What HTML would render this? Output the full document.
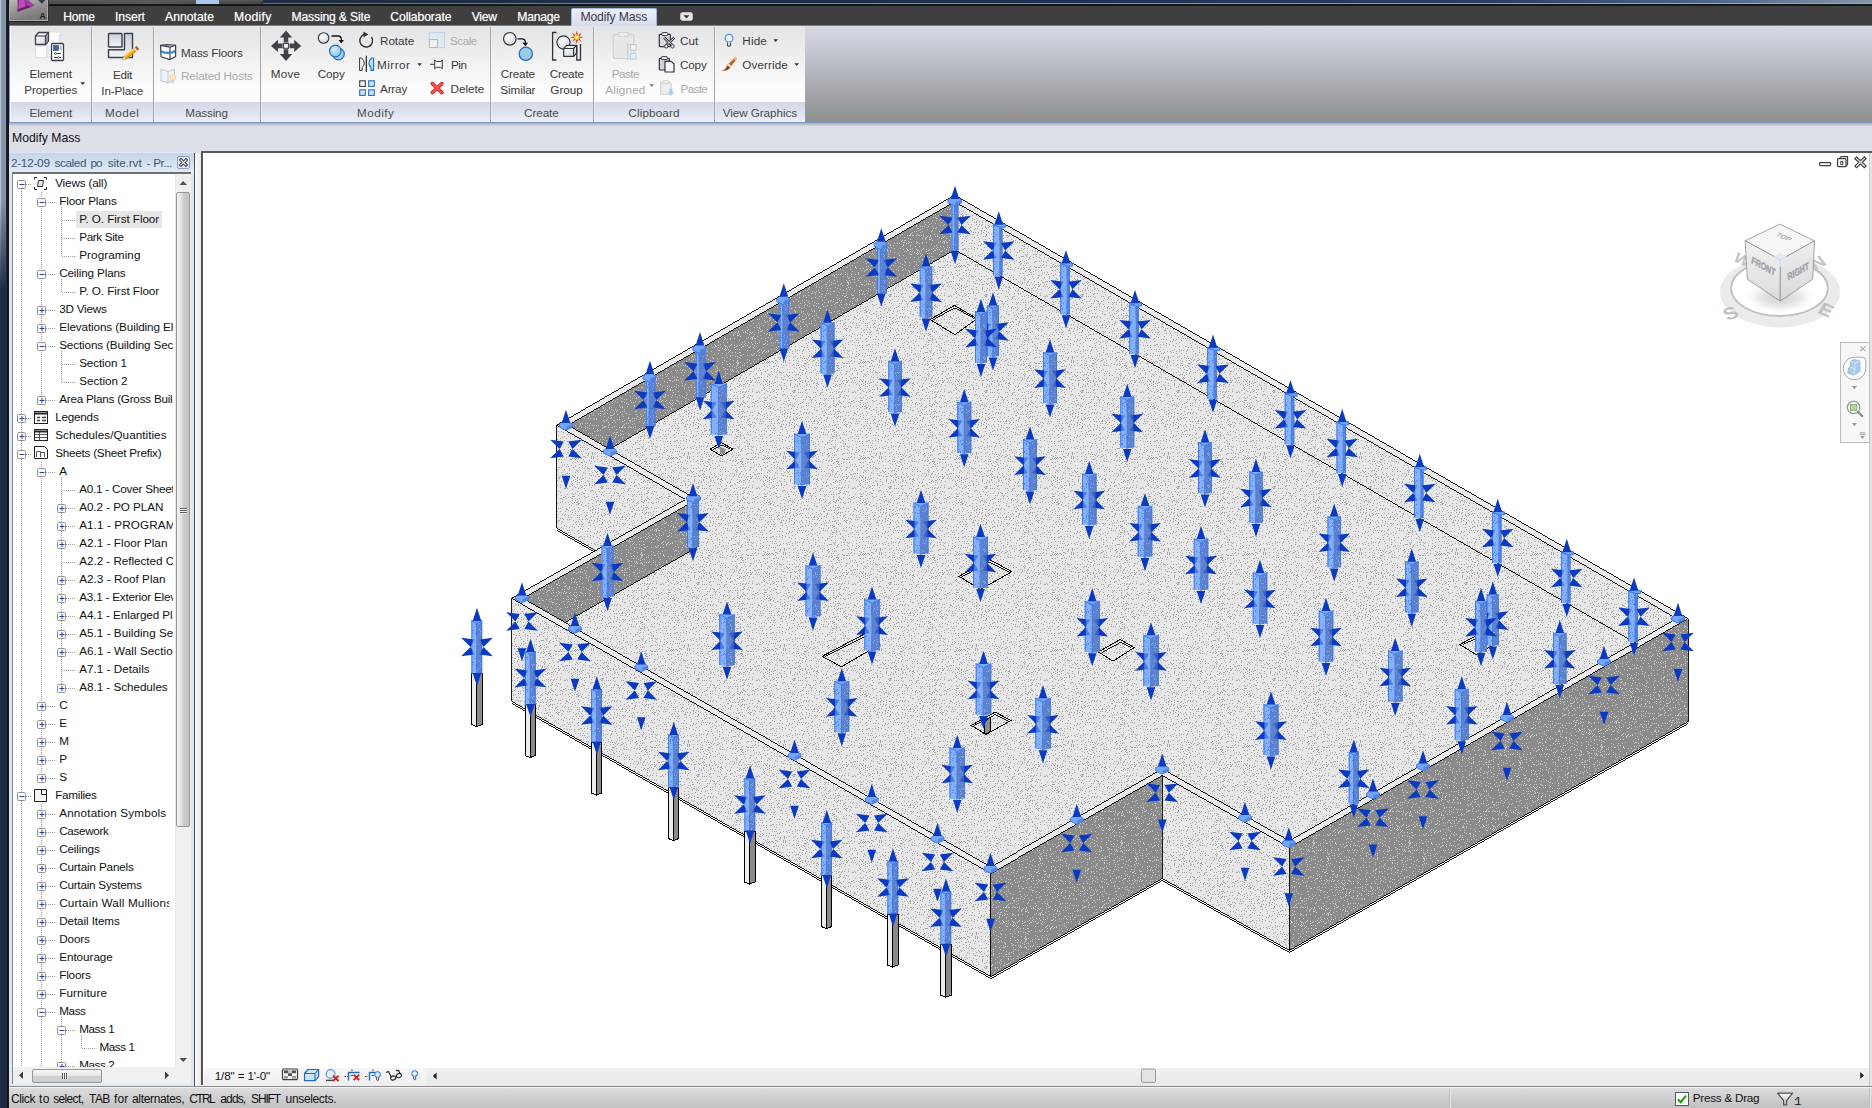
<!DOCTYPE html>
<html><head><meta charset="utf-8"><title>Revit</title>
<style>
*{box-sizing:border-box;margin:0;padding:0}
html,body{width:1872px;height:1108px;overflow:hidden;background:#fff}
body{position:relative;font-family:"Liberation Sans",sans-serif;font-size:12px;color:#1a1a1a}
.a{position:absolute}
.t{position:absolute;white-space:nowrap;line-height:14px;height:14px}
.c{text-align:center}
</style></head>
<body>
<div class="a" style="left:0;top:0;width:1872px;height:6px;background:linear-gradient(90deg,#4a4a4a 0,#585858 8%,#4a4a4a 13.9%,#1c2c44 14.1%,#1e3150 55%,#2a4163 80%,#50688a 92%,#8496ac 100%)"></div>
<div class="a" style="left:48px;top:0;width:215px;height:1px;background:#5a5a5a"></div><div class="a" style="left:263px;top:3px;width:1609px;height:1px;background:linear-gradient(90deg,#5c7088,#7b8ea6 50%,#9aa9ba)"></div>
<div class="a" style="left:0;top:4px;width:1872px;height:2px;background:#161616"></div>
<div class="a" style="left:196px;top:0;width:23px;height:4px;background:#a9c8ee"></div>
<div class="a" style="left:9px;top:6px;width:1863px;height:20px;background:#3f3f3f"></div>
<div class="a" style="left:9px;top:26px;width:1863px;height:97px;background:linear-gradient(#d6d9e3 0,#c9ccd6 20%,#a9abb1 60%,#8f8f8f 100%)"></div>
<div class="a" style="left:9px;top:25px;width:1863px;height:1px;background:#5f82d0"></div>
<div class="a" style="left:9px;top:122px;width:1863px;height:1px;background:#7d94c4"></div>
<div class="a" style="left:9px;top:123px;width:1863px;height:3px;background:linear-gradient(#a9adb8,#d5d8e0)"></div>
<div class="a" style="left:9px;top:126px;width:1863px;height:27px;background:#dcdfe8"></div>
<div class="t" style="left:12px;top:131px;font-size:12.2px;color:#111">Modify Mass</div>
<div class="a" style="left:0;top:0;width:9px;height:1108px;background:linear-gradient(90deg,#cfd6df 0,#8b9aae 1.5px,#7d90a6 4px,#8796aa 5.8px,#2b2d33 6.2px,#141518 7.4px,#141518 9px)"></div>
<div class="a" style="left:0;top:0;width:6px;height:1108px;background:linear-gradient(180deg,rgba(20,35,60,0) 0,rgba(20,35,60,0) 200px,rgba(22,38,64,.95) 290px,rgba(22,38,64,.95) 100%)"></div>
<div class="a" style="left:9px;top:0px;width:39px;height:21px;background:linear-gradient(165deg,#b9b9b9 0,#9a9a9a 35%,#7c7c7c 75%,#747474 100%);border:1px solid #a9a9a9;border-top:none;box-shadow:0 1px 0 #222,1px 0 0 #333"></div>
<svg class="a" style="left:14px;top:0px;" width="24" height="13" viewBox="0 0 24 13"><path d="M3.5 0 L14 0 L20.3 5.6 L16 7.4 L9.5 9.6 L3.6 11.8 Z" fill="#8c2a8a"/><path d="M5.5 0 L10.5 0 L11.2 6.5 L7.5 9 L4 10.8 Z" fill="#b94fb4"/><path d="M10.5 0 L14 0 L19.6 5.4 L15.5 7 L12 4 Z" fill="#a53fa2"/><path d="M3.7 9 L9 7.4 L15 5.6 L16 7.4 L9.5 9.6 L3.6 11.8 Z" fill="#5c1460" opacity=".75"/></svg>
<svg class="a" style="left:37px;top:0px;" width="10" height="5" viewBox="0 0 10 5"><path d="M1.2 0 L8.4 0 L4.8 3.8 Z" fill="#2e3a46"/></svg>
<div class="t " style="left:39.60px;top:9.22px;font-size:8.60px;color:#1c1c1c;font-weight:bold;">A</div>
<div class="t " style="left:63.20px;top:9.77px;font-size:12.20px;color:#fff;letter-spacing:-0.248px;text-shadow:0 0 1px rgba(255,255,255,.55);">Home</div>
<div class="t " style="left:115.00px;top:9.77px;font-size:12.20px;color:#fff;letter-spacing:-0.102px;text-shadow:0 0 1px rgba(255,255,255,.55);">Insert</div>
<div class="t " style="left:165.00px;top:9.77px;font-size:12.20px;color:#fff;letter-spacing:0.022px;text-shadow:0 0 1px rgba(255,255,255,.55);">Annotate</div>
<div class="t " style="left:234.00px;top:9.77px;font-size:12.20px;color:#fff;letter-spacing:0.273px;text-shadow:0 0 1px rgba(255,255,255,.55);">Modify</div>
<div class="t " style="left:291.50px;top:9.77px;font-size:12.20px;color:#fff;letter-spacing:-0.182px;text-shadow:0 0 1px rgba(255,255,255,.55);">Massing &amp; Site</div>
<div class="t " style="left:390.30px;top:9.77px;font-size:12.20px;color:#fff;letter-spacing:-0.110px;text-shadow:0 0 1px rgba(255,255,255,.55);">Collaborate</div>
<div class="t " style="left:471.70px;top:9.77px;font-size:12.20px;color:#fff;letter-spacing:-0.241px;text-shadow:0 0 1px rgba(255,255,255,.55);">View</div>
<div class="t " style="left:517.30px;top:9.77px;font-size:12.20px;color:#fff;letter-spacing:-0.238px;text-shadow:0 0 1px rgba(255,255,255,.55);">Manage</div>
<div class="a" style="left:571px;top:8px;width:86px;height:18px;background:linear-gradient(#eef1fa,#d6dcef);border:1px solid #9db4e8;border-bottom:none;border-radius:2px 2px 0 0"></div>
<div class="t " style="left:580.40px;top:9.77px;font-size:12.20px;color:#3c3c46;letter-spacing:-0.147px;">Modify Mass</div>
<svg class="a" style="left:679.6px;top:12px;" width="14" height="10" viewBox="0 0 14 10"><rect x="0.5" y="0.5" width="12" height="8" rx="2" fill="#e8e8e8" stroke="#bbb"/><path d="M3.5 3.2 L9.5 3.2 L6.5 6.4 Z" fill="#333"/></svg>
<div class="a" style="left:10px;top:26px;width:795px;height:76px;background:linear-gradient(#e3e4e6 0,#ececec 30%,#fafafa 75%,#fefefe 100%);"></div>
<div class="a" style="left:10px;top:102px;width:795px;height:20px;background:linear-gradient(#d2d6e6 0,#dfe3f0 50%,#eceff8 100%);"></div>
<div class="a" style="left:9px;top:26px;width:1px;height:97px;background:#7d9be0;"></div>
<div class="a" style="left:10px;top:26px;width:1px;height:96px;background:#f4f6fb;"></div>
<div class="a" style="left:91px;top:27px;width:1px;height:95px;background:#a3a3a3;"></div>
<div class="a" style="left:92px;top:27px;width:1px;height:95px;background:rgba(255,255,255,.35);"></div>
<div class="a" style="left:153px;top:27px;width:1px;height:95px;background:#a3a3a3;"></div>
<div class="a" style="left:154px;top:27px;width:1px;height:95px;background:rgba(255,255,255,.35);"></div>
<div class="a" style="left:260px;top:27px;width:1px;height:95px;background:#a3a3a3;"></div>
<div class="a" style="left:261px;top:27px;width:1px;height:95px;background:rgba(255,255,255,.35);"></div>
<div class="a" style="left:490px;top:27px;width:1px;height:95px;background:#a3a3a3;"></div>
<div class="a" style="left:491px;top:27px;width:1px;height:95px;background:rgba(255,255,255,.35);"></div>
<div class="a" style="left:593px;top:27px;width:1px;height:95px;background:#a3a3a3;"></div>
<div class="a" style="left:594px;top:27px;width:1px;height:95px;background:rgba(255,255,255,.35);"></div>
<div class="a" style="left:714px;top:27px;width:1px;height:95px;background:#a3a3a3;"></div>
<div class="a" style="left:715px;top:27px;width:1px;height:95px;background:rgba(255,255,255,.35);"></div>
<div class="t " style="left:29.50px;top:105.65px;font-size:11.70px;color:#4a4a4a;letter-spacing:-0.020px;">Element</div>
<div class="t " style="left:105.00px;top:105.65px;font-size:11.70px;color:#4a4a4a;letter-spacing:0.533px;">Model</div>
<div class="t " style="left:185.30px;top:105.65px;font-size:11.70px;color:#4a4a4a;letter-spacing:-0.145px;">Massing</div>
<div class="t " style="left:357.00px;top:105.65px;font-size:11.70px;color:#4a4a4a;letter-spacing:0.508px;">Modify</div>
<div class="t " style="left:524.00px;top:105.65px;font-size:11.70px;color:#4a4a4a;letter-spacing:-0.064px;">Create</div>
<div class="t " style="left:628.30px;top:105.65px;font-size:11.70px;color:#4a4a4a;letter-spacing:0.152px;">Clipboard</div>
<div class="t " style="left:722.70px;top:105.65px;font-size:11.70px;color:#4a4a4a;letter-spacing:-0.060px;">View Graphics</div>
<div class="t " style="left:29.40px;top:66.65px;font-size:11.70px;color:#3a3a3a;letter-spacing:-0.054px;">Element</div>
<div class="t " style="left:24.20px;top:82.55px;font-size:11.70px;color:#3a3a3a;letter-spacing:-0.025px;">Properties</div>
<svg class="a" style="left:80px;top:82px;" width="6" height="4" viewBox="0 0 6 4"><path d="M0.4 0.3 L5 0.3 L2.7 3 Z" fill="#333"/></svg>
<div class="t " style="left:113.00px;top:67.65px;font-size:11.70px;color:#3a3a3a;letter-spacing:-0.320px;">Edit</div>
<div class="t " style="left:101.30px;top:83.65px;font-size:11.70px;color:#3a3a3a;letter-spacing:-0.132px;">In-Place</div>
<div class="t " style="left:181.00px;top:45.95px;font-size:11.70px;color:#3a3a3a;letter-spacing:-0.171px;">Mass Floors</div>
<div class="t " style="left:181.00px;top:69.45px;font-size:11.70px;color:#ababab;letter-spacing:-0.124px;">Related Hosts</div>
<div class="t " style="left:270.70px;top:67.35px;font-size:11.70px;color:#3a3a3a;letter-spacing:0.263px;">Move</div>
<div class="t " style="left:317.70px;top:67.35px;font-size:11.70px;color:#3a3a3a;letter-spacing:-0.005px;">Copy</div>
<div class="t " style="left:380.00px;top:33.65px;font-size:11.70px;color:#3a3a3a;letter-spacing:-0.034px;">Rotate</div>
<div class="t " style="left:376.90px;top:57.65px;font-size:11.70px;color:#3a3a3a;letter-spacing:0.511px;">Mirror</div>
<svg class="a" style="left:417px;top:62.5px;" width="6" height="4" viewBox="0 0 6 4"><path d="M0.4 0.3 L5 0.3 L2.7 3 Z" fill="#333"/></svg>
<div class="t " style="left:380.00px;top:81.75px;font-size:11.70px;color:#3a3a3a;letter-spacing:-0.164px;">Array</div>
<div class="t " style="left:450.00px;top:33.65px;font-size:11.70px;color:#ababab;letter-spacing:-0.492px;">Scale</div>
<div class="t " style="left:451.00px;top:57.65px;font-size:11.70px;color:#3a3a3a;letter-spacing:-0.456px;">Pin</div>
<div class="t " style="left:450.60px;top:81.75px;font-size:11.70px;color:#3a3a3a;letter-spacing:-0.044px;">Delete</div>
<div class="t " style="left:500.80px;top:67.35px;font-size:11.70px;color:#3a3a3a;letter-spacing:-0.184px;">Create</div>
<div class="t " style="left:500.30px;top:83.35px;font-size:11.70px;color:#3a3a3a;letter-spacing:-0.092px;">Similar</div>
<div class="t " style="left:549.80px;top:67.35px;font-size:11.70px;color:#3a3a3a;letter-spacing:-0.184px;">Create</div>
<div class="t " style="left:550.30px;top:83.35px;font-size:11.70px;color:#3a3a3a;letter-spacing:0.020px;">Group</div>
<div class="t " style="left:611.70px;top:67.35px;font-size:11.70px;color:#ababab;letter-spacing:-0.530px;">Paste</div>
<div class="t " style="left:605.30px;top:83.35px;font-size:11.70px;color:#ababab;letter-spacing:0.178px;">Aligned</div>
<svg class="a" style="left:649px;top:84px;" width="6" height="4" viewBox="0 0 6 4"><path d="M0.4 0.3 L5 0.3 L2.7 3 Z" fill="#777"/></svg>
<div class="t " style="left:680.00px;top:33.65px;font-size:11.70px;color:#3a3a3a;letter-spacing:0.046px;">Cut</div>
<div class="t " style="left:680.00px;top:57.65px;font-size:11.70px;color:#3a3a3a;letter-spacing:-0.171px;">Copy</div>
<div class="t " style="left:680.60px;top:81.75px;font-size:11.70px;color:#ababab;letter-spacing:-0.655px;">Paste</div>
<div class="t " style="left:742.30px;top:33.55px;font-size:11.70px;color:#3a3a3a;letter-spacing:0.179px;">Hide</div>
<svg class="a" style="left:773px;top:39px;" width="6" height="4" viewBox="0 0 6 4"><path d="M0.4 0.3 L5 0.3 L2.7 3 Z" fill="#333"/></svg>
<div class="t " style="left:742.30px;top:57.75px;font-size:11.70px;color:#3a3a3a;letter-spacing:0.091px;">Override</div>
<svg class="a" style="left:794px;top:63px;" width="6" height="4" viewBox="0 0 6 4"><path d="M0.4 0.3 L5 0.3 L2.7 3 Z" fill="#333"/></svg>
<svg class="a" style="left:0;top:0" width="820" height="126" viewBox="0 0 820 126"><defs><linearGradient id="gcube" x1="0" y1="0" x2="1" y2="1"><stop offset="0" stop-color="#fff"/><stop offset="1" stop-color="#cfd4dc"/></linearGradient><linearGradient id="gpan" x1="0" y1="0" x2="0" y2="1"><stop offset="0" stop-color="#c9ced8"/><stop offset="1" stop-color="#f4f5f7"/></linearGradient><radialGradient id="gball" cx=".4" cy=".35" r=".7"><stop offset="0" stop-color="#fff"/><stop offset="1" stop-color="#d0d4da"/></radialGradient><radialGradient id="gblue" cx=".4" cy=".35" r=".7"><stop offset="0" stop-color="#d6ecf8"/><stop offset="1" stop-color="#8cc0e4"/></radialGradient></defs><path d="M47.5 33.5 L50 32 L61 32 L61 55 L58.5 57 L47.5 57 Z" fill="#fdfdfd" stroke="#dadde2" stroke-width="1"/><path d="M58.5 34.5 L61 32 L61 55 L58.5 57 Z" fill="#e3e5ea"/><path d="M35.5 46 L46.5 46 L46.5 57.5 L35.5 57.5 Z" fill="#fbfbfc" stroke="#dcdfe4" stroke-width="1"/><path d="M46.5 46 L49.5 44 L49.5 55.5 L46.5 57.5 Z" fill="#e6e8ec"/><path d="M35.5 36 L38.5 32.5 L48.5 32.5 L48.5 41 L45.5 44.5 L35.5 44.5 Z" fill="url(#gcube)" stroke="#3b4048" stroke-width="1.3" stroke-linejoin="round"/><path d="M35.5 36 L45.5 36 L45.5 44.5 M45.5 36 L48.5 32.5" fill="none" stroke="#3b4048" stroke-width="1.2"/><path d="M46 36.3 L48 33.8 L48 41 L46 43.5 Z" fill="#8d95a3"/><rect x="51.5" y="43.5" width="12" height="17" rx="1" fill="#fff" stroke="#3b4048" stroke-width="1.3"/><rect x="53.5" y="45.5" width="5" height="5" fill="#3f66a0" stroke="#2c4a7c" stroke-width=".6"/><rect x="60" y="45.5" width="1.6" height="5" fill="#b5b9c2"/><path d="M54 53.5 H61 M54 57.5 H61" stroke="#3b4048" stroke-width="1"/><circle cx="55.5" cy="53.5" r="1" fill="#fff" stroke="#3b4048" stroke-width=".6"/><circle cx="58.5" cy="57.5" r="1" fill="#fff" stroke="#3b4048" stroke-width=".6"/><rect x="108.5" y="33.5" width="13.5" height="13.5" fill="url(#gpan)" stroke="#3b4048" stroke-width="1.4" rx=".8"/><path d="M124.5 33.5 H132.5 V57.5 H108.5 V49.8 H124.5 Z" fill="url(#gpan)" stroke="#3b4048" stroke-width="1.4" stroke-linejoin="round"/><g transform="translate(122.5,59.5) rotate(-38)"><path d="M0 0 L3.2 -2.1 L3.2 2.1 Z" fill="#f4f4f4" stroke="#777" stroke-width=".5"/><rect x="3.2" y="-2.1" width="12.5" height="4.2" fill="#f6b411"/><rect x="3.2" y="-2.1" width="12.5" height="1.4" fill="#fbd75a"/><rect x="3.2" y="0.9" width="12.5" height="1.2" fill="#d68d08"/><rect x="15.7" y="-2.1" width="1.4" height="4.2" fill="#d9d9d9"/><rect x="17.1" y="-2.1" width="2.6" height="4.2" rx="1" fill="#b5622a"/></g><path d="M160.6 45.3 L170 47.2 L175.6 45.2 L175.6 56.5 L170 59.6 L161 56.8 Z" fill="#fdfdfd" stroke="#3b4048" stroke-width="1.2" stroke-linejoin="round"/><path d="M160.6 45.3 L166.5 44.6 L175.6 45.2 M170 47.2 L170 59.6" fill="none" stroke="#3b4048" stroke-width="1.1"/><path d="M161.3 50.5 C165 52.6 171 52.6 175.2 50.2 L175.2 52 C171 54.2 165 54.2 161.3 52.2 Z" fill="#4e8fd4" stroke="#2a6ab8" stroke-width=".6"/><path d="M161 69.5 L168 71.5 L174.5 69.2 L174.5 80 L168 83 L161 80.5 Z" fill="#eef2f5" stroke="#c4ccd3" stroke-width="1.1" stroke-linejoin="round"/><path d="M168 71.5 V83" stroke="#c4ccd3" stroke-width="1"/><circle cx="172.8" cy="77.2" r="3" fill="#fde9bd" stroke="#f3cf8c" stroke-width=".7"/><rect x="171.6" y="80" width="2.4" height="3.2" fill="#d5d8dc"/><g fill="#3f434a"><path d="M286 30.6 L292.2 37.6 L288.3 37.6 L288.3 42.5 L283.7 42.5 L283.7 37.6 L279.8 37.6 Z"/><path d="M286 61 L292.2 54 L288.3 54 L288.3 49.3 L283.7 49.3 L283.7 54 L279.8 54 Z"/><path d="M271 45.9 L278 39.7 L278 43.6 L282.6 43.6 L282.6 48.2 L278 48.2 L278 52.1 Z"/><path d="M301.2 45.9 L294.2 39.7 L294.2 43.6 L289.5 43.6 L289.5 48.2 L294.2 48.2 L294.2 52.1 Z"/></g><rect x="283.6" y="43.5" width="4.8" height="4.8" fill="#fff" stroke="#3f434a" stroke-width="1.1"/><circle cx="323.6" cy="38" r="5.3" fill="url(#gball)" stroke="#30343a" stroke-width="1.1"/><path d="M331.5 36 H338 Q341.3 36 341.3 39.5 V41" fill="none" stroke="#111" stroke-width="1.3"/><path d="M338.6 40 L344 40 L341.3 43.4 Z" fill="#111"/><circle cx="338.5" cy="54" r="5.8" fill="url(#gblue)" stroke="#1f6fc5" stroke-width="1.2"/><circle cx="335.3" cy="51" r="5.8" fill="url(#gblue)" stroke="#1f6fc5" stroke-width="1.2"/><path d="M366.5 34.2 A6.4 6.4 0 1 0 371.5 37" fill="none" stroke="#30343a" stroke-width="1.4"/><path d="M363.3 31.6 L368.4 34.4 L363.6 37.2 Z" fill="#30343a"/><path d="M366.3 55.8 V72" stroke="#111" stroke-width="1.1"/><path d="M359.6 58 L361.5 58 Q364.3 60 364.3 63.3 Q364.3 66 362.2 67.2 L362.2 70.4 L359.6 70.4 Z" fill="#f4f4f4" stroke="#30343a" stroke-width="1"/><path d="M373.6 58 L371.7 58 Q368.9 60 368.9 63.3 Q368.9 66 371 67.2 L371 70.4 L373.6 70.4 Z" fill="#bcdcf3" stroke="#1f6fc5" stroke-width="1.1"/><rect x="359.7" y="80.8" width="5.6" height="5.6" fill="#f6f6f6" stroke="#3b4048" stroke-width="1.1"/><rect x="368.7" y="80.8" width="5.6" height="5.6" fill="#cfe6f5" stroke="#1f6fc5" stroke-width="1.1"/><rect x="359.7" y="89.8" width="5.6" height="5.6" fill="#cfe6f5" stroke="#1f6fc5" stroke-width="1.1"/><rect x="368.7" y="89.8" width="5.6" height="5.6" fill="#cfe6f5" stroke="#1f6fc5" stroke-width="1.1"/><rect x="429.3" y="32.6" width="15" height="15" fill="#deebf3" stroke="#bcd3e6" stroke-width="1"/><rect x="429.5" y="39.5" width="8" height="8" fill="#f1f1f1" stroke="#b8b8b8" stroke-width="1"/><path d="M430 64.3 H434.5" stroke="#30343a" stroke-width="1"/><path d="M434.7 60 L436.3 61.5 L440.7 61.5 L442.3 60 L442.3 68.8 L440.7 67.3 L436.3 67.3 L434.7 68.8 Z" fill="#fafafa" stroke="#30343a" stroke-width="1" stroke-linejoin="round"/><path d="M432.3 83.6 L441.9 92.6 M441.9 83.6 L432.3 92.6" stroke="#c9211e" stroke-width="3.6" stroke-linecap="round"/><path d="M432.3 83.6 L441.9 92.6 M441.9 83.6 L432.3 92.6" stroke="#f0524e" stroke-width="2.2" stroke-linecap="round"/><circle cx="509.8" cy="38.8" r="6.3" fill="url(#gball)" stroke="#30343a" stroke-width="1.2"/><path d="M517.5 38.8 H522 Q525.3 38.8 525.3 42 V43.5" fill="none" stroke="#111" stroke-width="1.3"/><path d="M522.5 42.8 L528.1 42.8 L525.3 46.2 Z" fill="#111"/><circle cx="525.8" cy="53.8" r="6.6" fill="#9ccbe9" stroke="#1f6fc5" stroke-width="1.3"/><path d="M556.5 32.5 H552.6 V60 H556.5 M576.8 45 V60 H580.5 V44" fill="none" stroke="#30343a" stroke-width="1.3"/><circle cx="563.5" cy="42.5" r="6.6" fill="url(#gball)" stroke="#30343a" stroke-width="1.1"/><path d="M563.7 48.5 L566.7 45.3 L576.6 45.3 L576.6 53 L573.6 56.3 L563.7 56.3 Z" fill="url(#gcube)" stroke="#30343a" stroke-width="1.2" stroke-linejoin="round"/><path d="M563.7 48.5 H573.6 V56.3 M573.6 48.5 L576.6 45.3" fill="none" stroke="#30343a" stroke-width="1.1"/><g transform="translate(576.8,37.3)"><path d="M0 -6.4 L1.3 -2.2 L5 -4.6 L2.6 -.9 L6.6 0 L2.6 .9 L4.6 4.6 L1.3 2.3 L0 6.6 L-1.3 2.3 L-4.6 4.6 L-2.6 .9 L-6.4 0 L-2.6 -.9 L-4.6 -4.6 L-1.3 -2.2 Z" fill="#ec3a1c"/><circle r="2.7" fill="#ffd21e"/><circle r="1.2" fill="#fff7c8"/></g><rect x="613.3" y="34.5" width="20.5" height="24" rx="1.5" fill="#e6e7e9" stroke="#cfd0d3" stroke-width="1.1"/><rect x="618.5" y="32.4" width="10" height="4" rx="1.6" fill="#eeeeef" stroke="#cfd0d3" stroke-width="1"/><path d="M627.6 43 V60.5" stroke="#d0d2d6" stroke-width="1.2"/><rect x="630.4" y="44.5" width="5.6" height="5.6" fill="#f3f3f3" stroke="#c8c8c8" stroke-width="1"/><rect x="630.4" y="53.5" width="5.6" height="5.6" fill="#e4eff8" stroke="#b6d2ea" stroke-width="1"/><rect x="659.3" y="34.3" width="11" height="12.3" rx=".8" fill="#d9dce2" stroke="#30343a" stroke-width="1.2"/><rect x="661.8" y="32.6" width="6" height="3" rx="1" fill="#f1f1f1" stroke="#30343a" stroke-width="1"/><path d="M664 37.5 L672.4 45.5 M674.4 37.5 L666 45.5" stroke="#30343a" stroke-width="2.6"/><path d="M664 37.5 L672.4 45.5 M674.4 37.5 L666 45.5" stroke="#f2f2f2" stroke-width="1"/><circle cx="666.2" cy="46.3" r="1.7" fill="#fff" stroke="#30343a" stroke-width="1"/><circle cx="672.5" cy="46.3" r="1.7" fill="#fff" stroke="#30343a" stroke-width="1"/><rect x="659.3" y="58.4" width="10" height="11.6" rx=".8" fill="#cfd3da" stroke="#30343a" stroke-width="1.2"/><rect x="661.3" y="56.6" width="6" height="3" rx="1" fill="#f1f1f1" stroke="#30343a" stroke-width="1"/><path d="M665 61.4 H671.2 L674 64.2 V72 H665 Z" fill="#f4f5f7" stroke="#30343a" stroke-width="1.2" stroke-linejoin="round"/><rect x="660.6" y="82.5" width="10.4" height="11.8" rx=".8" fill="#ededee" stroke="#cfd0d3" stroke-width="1.1"/><rect x="663" y="80.6" width="5.6" height="3" rx="1" fill="#f3f3f3" stroke="#cfd0d3" stroke-width="1"/><path d="M669.6 88.5 H672.4 V92 H674.4 L671 95.8 L667.6 92 H669.6 Z" fill="#a9cdee"/><circle cx="729" cy="38.3" r="3.9" fill="#e9f3fd" stroke="#4d8fe0" stroke-width="1.2"/><path d="M727.6 42.4 V45.6 Q729 46.8 730.4 45.6 V42.4" fill="#fff" stroke="#30343a" stroke-width="1.1"/><path d="M721.3 70.6 Q726.2 69.8 727 65.2 L730.4 67.6 Q728 71.3 721.3 70.6 Z" fill="#8a4513"/><path d="M727.2 65 L735.3 57.2 L737 58.6 L730.4 67.5 Z" fill="#c06a22"/><path d="M733.6 58.8 L735.3 57.2 L737 58.6 L735.6 60.4 Z" fill="#f0b26a"/><path d="M727.3 64.9 L728.6 63.7 L731.5 66 L730.4 67.5 Z" fill="#e6e6e6"/></svg>
<div class="a" style="left:9px;top:152px;width:185px;height:934px;background:#dde8f4;"></div>
<div class="a" style="left:9px;top:153px;width:185px;height:20px;background:linear-gradient(#c3d5e8 0,#d3e1ef 50%,#e4edf6 100%);"></div>
<div class="t " style="left:10.90px;top:155.91px;font-size:11.80px;color:#3f5378;letter-spacing:-0.262px;">2-12-09</div>
<div class="t " style="left:54.50px;top:155.91px;font-size:11.80px;color:#3f5378;letter-spacing:-0.422px;">scaled</div>
<div class="t " style="left:90.40px;top:155.91px;font-size:11.80px;color:#3f5378;letter-spacing:-0.926px;">po</div>
<div class="t " style="left:107.70px;top:155.91px;font-size:11.80px;color:#3f5378;letter-spacing:-0.107px;">site.rvt</div>
<div class="t " style="left:146.60px;top:155.91px;font-size:11.80px;color:#3f5378;letter-spacing:0.000px;">-</div>
<div class="t " style="left:153.20px;top:155.91px;font-size:11.80px;color:#3f5378;letter-spacing:-0.446px;">Pr...</div>
<div class="a" style="left:177px;top:156px;width:13px;height:13px;border:1px solid #8fa0c0;border-radius:2px;background:#e4ecf6"></div>
<svg class="a" style="left:177px;top:156px;" width="13" height="13" viewBox="0 0 13 13"><path d="M4 4 L9 9 M9 4 L4 9" stroke="#3a3f4c" stroke-width="3.2" stroke-linecap="square"/><path d="M4 4 L9 9 M9 4 L4 9" stroke="#fff" stroke-width="1.2" stroke-linecap="square"/></svg>
<div class="a" style="left:12px;top:172px;width:179px;height:912px;background:#fff;border-left:1px solid #828790;border-top:2px solid #707070"></div>
<div class="a" style="left:13px;top:174px;width:160.2px;height:893px;overflow:hidden"><div class="t " style="left:42.20px;top:2.25px;font-size:11.70px;color:#111;letter-spacing:-0.155px;">Views (all)</div><div class="t " style="left:46.20px;top:20.25px;font-size:11.70px;color:#111;letter-spacing:-0.148px;">Floor Plans</div><div class="a" style="left:63.3px;top:36.5px;width:85.7px;height:17.5px;background:#e6e6e6;"></div><div class="t " style="left:66.20px;top:38.25px;font-size:11.70px;color:#111;letter-spacing:-0.059px;">P. O. First Floor</div><div class="t " style="left:66.20px;top:56.25px;font-size:11.70px;color:#111;letter-spacing:-0.334px;">Park Site</div><div class="t " style="left:66.20px;top:74.25px;font-size:11.70px;color:#111;letter-spacing:0.091px;">Programing</div><div class="t " style="left:46.20px;top:92.25px;font-size:11.70px;color:#111;letter-spacing:-0.141px;">Ceiling Plans</div><div class="t " style="left:66.20px;top:110.25px;font-size:11.70px;color:#111;letter-spacing:-0.059px;">P. O. First Floor</div><div class="t " style="left:46.20px;top:128.25px;font-size:11.70px;color:#111;letter-spacing:-0.230px;">3D Views</div><div class="t " style="left:46.20px;top:146.25px;font-size:11.70px;color:#111;letter-spacing:-0.100px;">Elevations (Building Elevation)</div><div class="t " style="left:46.20px;top:164.25px;font-size:11.70px;color:#111;letter-spacing:-0.132px;">Sections (Building Section)</div><div class="t " style="left:66.20px;top:182.25px;font-size:11.70px;color:#111;letter-spacing:-0.123px;">Section 1</div><div class="t " style="left:66.20px;top:200.25px;font-size:11.70px;color:#111;letter-spacing:-0.048px;">Section 2</div><div class="t " style="left:46.20px;top:218.25px;font-size:11.70px;color:#111;letter-spacing:-0.223px;">Area Plans (Gross Building)</div><div class="t " style="left:42.20px;top:236.25px;font-size:11.70px;color:#111;letter-spacing:-0.216px;">Legends</div><div class="t " style="left:42.20px;top:254.25px;font-size:11.70px;color:#111;letter-spacing:0.044px;">Schedules/Quantities</div><div class="t " style="left:42.20px;top:272.25px;font-size:11.70px;color:#111;letter-spacing:-0.235px;">Sheets (Sheet Prefix)</div><div class="t " style="left:46.20px;top:290.25px;font-size:11.70px;color:#111;letter-spacing:0.000px;">A</div><div class="a" style="left:0;top:306px;width:159.5px;height:18px;overflow:hidden"><div class="t " style="left:66.20px;top:2.25px;font-size:11.70px;color:#111;letter-spacing:-0.222px;">A0.1 - Cover Sheet</div></div><div class="t " style="left:66.20px;top:326.25px;font-size:11.70px;color:#111;letter-spacing:-0.068px;">A0.2 - PO PLAN</div><div class="t " style="left:66.20px;top:344.25px;font-size:11.70px;color:#111;letter-spacing:0.105px;">A1.1 - PROGRAMING</div><div class="t " style="left:66.20px;top:362.25px;font-size:11.70px;color:#111;letter-spacing:0.032px;">A2.1 - Floor Plan</div><div class="t " style="left:66.20px;top:380.25px;font-size:11.70px;color:#111;letter-spacing:-0.033px;">A2.2 - Reflected Ceiling</div><div class="t " style="left:66.20px;top:398.25px;font-size:11.70px;color:#111;letter-spacing:0.043px;">A2.3 - Roof Plan</div><div class="t " style="left:66.20px;top:416.25px;font-size:11.70px;color:#111;letter-spacing:-0.197px;">A3.1 - Exterior Elevations</div><div class="t " style="left:66.20px;top:434.25px;font-size:11.70px;color:#111;letter-spacing:-0.081px;">A4.1 - Enlarged Plans</div><div class="t " style="left:66.20px;top:452.25px;font-size:11.70px;color:#111;letter-spacing:0.031px;">A5.1 - Building Sections</div><div class="t " style="left:66.20px;top:470.25px;font-size:11.70px;color:#111;letter-spacing:0.063px;">A6.1 - Wall Sections</div><div class="t " style="left:66.20px;top:488.25px;font-size:11.70px;color:#111;letter-spacing:0.021px;">A7.1 - Details</div><div class="t " style="left:66.20px;top:506.25px;font-size:11.70px;color:#111;letter-spacing:-0.034px;">A8.1 - Schedules</div><div class="t " style="left:46.20px;top:524.25px;font-size:11.70px;color:#111;letter-spacing:0.000px;">C</div><div class="t " style="left:46.20px;top:542.25px;font-size:11.70px;color:#111;letter-spacing:0.000px;">E</div><div class="t " style="left:46.20px;top:560.25px;font-size:11.70px;color:#111;letter-spacing:0.000px;">M</div><div class="t " style="left:46.20px;top:578.25px;font-size:11.70px;color:#111;letter-spacing:0.000px;">P</div><div class="t " style="left:46.20px;top:596.25px;font-size:11.70px;color:#111;letter-spacing:0.000px;">S</div><div class="t " style="left:42.20px;top:614.25px;font-size:11.70px;color:#111;letter-spacing:-0.251px;">Families</div><div class="t " style="left:46.20px;top:632.25px;font-size:11.70px;color:#111;letter-spacing:0.179px;">Annotation Symbols</div><div class="t " style="left:46.20px;top:650.25px;font-size:11.70px;color:#111;letter-spacing:-0.331px;">Casework</div><div class="t " style="left:46.20px;top:668.25px;font-size:11.70px;color:#111;letter-spacing:-0.146px;">Ceilings</div><div class="t " style="left:46.20px;top:686.25px;font-size:11.70px;color:#111;letter-spacing:-0.150px;">Curtain Panels</div><div class="t " style="left:46.20px;top:704.25px;font-size:11.70px;color:#111;letter-spacing:-0.223px;">Curtain Systems</div><div class="a" style="left:0;top:720px;width:155.6px;height:18px;overflow:hidden"><div class="t " style="left:46.20px;top:2.25px;font-size:11.70px;color:#111;letter-spacing:0.174px;">Curtain Wall Mullions</div></div><div class="t " style="left:46.20px;top:740.25px;font-size:11.70px;color:#111;letter-spacing:-0.097px;">Detail Items</div><div class="t " style="left:46.20px;top:758.25px;font-size:11.70px;color:#111;letter-spacing:-0.103px;">Doors</div><div class="t " style="left:46.20px;top:776.25px;font-size:11.70px;color:#111;letter-spacing:-0.037px;">Entourage</div><div class="t " style="left:46.20px;top:794.25px;font-size:11.70px;color:#111;letter-spacing:-0.162px;">Floors</div><div class="t " style="left:46.20px;top:812.25px;font-size:11.70px;color:#111;letter-spacing:0.135px;">Furniture</div><div class="t " style="left:46.20px;top:830.25px;font-size:11.70px;color:#111;letter-spacing:-0.385px;">Mass</div><div class="t " style="left:66.20px;top:848.25px;font-size:11.70px;color:#111;letter-spacing:-0.402px;">Mass 1</div><div class="t " style="left:86.40px;top:866.25px;font-size:11.70px;color:#111;letter-spacing:-0.402px;">Mass 1</div><div class="t " style="left:66.20px;top:884.25px;font-size:11.70px;color:#111;letter-spacing:-0.402px;">Mass 2</div></div>
<svg class="a" style="left:0;top:174px" width="176" height="893" viewBox="0 174 176 893"><path d="M41.5 192 V400" stroke="#9a9a9a" stroke-width="1" stroke-dasharray="1 1"/><path d="M61.5 207 V256" stroke="#9a9a9a" stroke-width="1" stroke-dasharray="1 1"/><path d="M61.5 279 V292" stroke="#9a9a9a" stroke-width="1" stroke-dasharray="1 1"/><path d="M61.5 351 V382" stroke="#9a9a9a" stroke-width="1" stroke-dasharray="1 1"/><path d="M41.5 462 V778" stroke="#9a9a9a" stroke-width="1" stroke-dasharray="1 1"/><path d="M61.5 477 V688" stroke="#9a9a9a" stroke-width="1" stroke-dasharray="1 1"/><path d="M41.5 804 V1012" stroke="#9a9a9a" stroke-width="1" stroke-dasharray="1 1"/><path d="M61.5 1017 V1068" stroke="#9a9a9a" stroke-width="1" stroke-dasharray="1 1"/><path d="M81.5 1035 V1048" stroke="#9a9a9a" stroke-width="1" stroke-dasharray="1 1"/><path d="M21.5 189 V1068" stroke="#9a9a9a" stroke-width="1" stroke-dasharray="1 1"/><path d="M41.5 1017 V1068" stroke="#9a9a9a" stroke-width="1" stroke-dasharray="1 1"/><path d="M26 184.5 H31" stroke="#9a9a9a" stroke-width="1" stroke-dasharray="1 1"/><rect x="17.5" y="180.5" width="8" height="8" rx="1" fill="#fcfcfc" stroke="#919191"/><path d="M19.5 184.5 H24.5" stroke="#2c3fa0" stroke-width="1"/><path d="M34.5 179.5 V177.5 H37 M44 177.5 H46.5 V179.5 M46.5 187 V189.5 H44 M37 189.5 H34.5 V187" fill="none" stroke="#222" stroke-width="1"/><path d="M38.5 180.5 H43.5 L42.5 186.5 H37.5 Z" fill="#e4e6ea" stroke="#333" stroke-width="1"/><path d="M46 202.5 H56.2" stroke="#9a9a9a" stroke-width="1" stroke-dasharray="1 1"/><rect x="37.5" y="198.5" width="8" height="8" rx="1" fill="#fcfcfc" stroke="#919191"/><path d="M39.5 202.5 H44.5" stroke="#2c3fa0" stroke-width="1"/><path d="M62 220.5 H76.2" stroke="#9a9a9a" stroke-width="1" stroke-dasharray="1 1"/><path d="M62 238.5 H76.2" stroke="#9a9a9a" stroke-width="1" stroke-dasharray="1 1"/><path d="M62 256.5 H76.2" stroke="#9a9a9a" stroke-width="1" stroke-dasharray="1 1"/><path d="M46 274.5 H56.2" stroke="#9a9a9a" stroke-width="1" stroke-dasharray="1 1"/><rect x="37.5" y="270.5" width="8" height="8" rx="1" fill="#fcfcfc" stroke="#919191"/><path d="M39.5 274.5 H44.5" stroke="#2c3fa0" stroke-width="1"/><path d="M62 292.5 H76.2" stroke="#9a9a9a" stroke-width="1" stroke-dasharray="1 1"/><path d="M46 310.5 H56.2" stroke="#9a9a9a" stroke-width="1" stroke-dasharray="1 1"/><rect x="37.5" y="306.5" width="8" height="8" rx="1" fill="#fcfcfc" stroke="#919191"/><path d="M39.5 310.5 H44.5" stroke="#2c3fa0" stroke-width="1"/><path d="M42 308 V313" stroke="#2c3fa0" stroke-width="1"/><path d="M46 328.5 H56.2" stroke="#9a9a9a" stroke-width="1" stroke-dasharray="1 1"/><rect x="37.5" y="324.5" width="8" height="8" rx="1" fill="#fcfcfc" stroke="#919191"/><path d="M39.5 328.5 H44.5" stroke="#2c3fa0" stroke-width="1"/><path d="M42 326 V331" stroke="#2c3fa0" stroke-width="1"/><path d="M46 346.5 H56.2" stroke="#9a9a9a" stroke-width="1" stroke-dasharray="1 1"/><rect x="37.5" y="342.5" width="8" height="8" rx="1" fill="#fcfcfc" stroke="#919191"/><path d="M39.5 346.5 H44.5" stroke="#2c3fa0" stroke-width="1"/><path d="M62 364.5 H76.2" stroke="#9a9a9a" stroke-width="1" stroke-dasharray="1 1"/><path d="M62 382.5 H76.2" stroke="#9a9a9a" stroke-width="1" stroke-dasharray="1 1"/><path d="M46 400.5 H56.2" stroke="#9a9a9a" stroke-width="1" stroke-dasharray="1 1"/><rect x="37.5" y="396.5" width="8" height="8" rx="1" fill="#fcfcfc" stroke="#919191"/><path d="M39.5 400.5 H44.5" stroke="#2c3fa0" stroke-width="1"/><path d="M42 398 V403" stroke="#2c3fa0" stroke-width="1"/><path d="M26 418.5 H31" stroke="#9a9a9a" stroke-width="1" stroke-dasharray="1 1"/><rect x="17.5" y="414.5" width="8" height="8" rx="1" fill="#fcfcfc" stroke="#919191"/><path d="M19.5 418.5 H24.5" stroke="#2c3fa0" stroke-width="1"/><path d="M22 416 V421" stroke="#2c3fa0" stroke-width="1"/><rect x="34.5" y="411.5" width="13" height="12" fill="#fff" stroke="#222"/><path d="M35 413.5 H47" stroke="#222" stroke-width="2"/><path d="M37 417.5 H40 M42 417.5 H46 M37 420.5 H40 M42 420.5 H46" stroke="#444" stroke-width="1.4"/><path d="M26 436.5 H31" stroke="#9a9a9a" stroke-width="1" stroke-dasharray="1 1"/><rect x="17.5" y="432.5" width="8" height="8" rx="1" fill="#fcfcfc" stroke="#919191"/><path d="M19.5 436.5 H24.5" stroke="#2c3fa0" stroke-width="1"/><path d="M22 434 V439" stroke="#2c3fa0" stroke-width="1"/><rect x="34.5" y="429.5" width="13" height="11" fill="#fff" stroke="#222"/><path d="M35 431.5 H47" stroke="#222" stroke-width="2"/><path d="M35 434.5 H47 M35 437.5 H47 M39.5 432 V440" stroke="#555" stroke-width="1"/><path d="M26 454.5 H31" stroke="#9a9a9a" stroke-width="1" stroke-dasharray="1 1"/><rect x="17.5" y="450.5" width="8" height="8" rx="1" fill="#fcfcfc" stroke="#919191"/><path d="M19.5 454.5 H24.5" stroke="#2c3fa0" stroke-width="1"/><path d="M34.5 446.5 H44.5 L47.5 449.5 V458.5 H34.5 Z" fill="#fff" stroke="#222"/><path d="M36.5 457 V451.5 H40.5 V457 M40.5 452.5 H44.5 V457" fill="none" stroke="#555" stroke-width="1"/><path d="M46 472.5 H56.2" stroke="#9a9a9a" stroke-width="1" stroke-dasharray="1 1"/><rect x="37.5" y="468.5" width="8" height="8" rx="1" fill="#fcfcfc" stroke="#919191"/><path d="M39.5 472.5 H44.5" stroke="#2c3fa0" stroke-width="1"/><path d="M62 490.5 H76.2" stroke="#9a9a9a" stroke-width="1" stroke-dasharray="1 1"/><path d="M66 508.5 H76.2" stroke="#9a9a9a" stroke-width="1" stroke-dasharray="1 1"/><rect x="57.5" y="504.5" width="8" height="8" rx="1" fill="#fcfcfc" stroke="#919191"/><path d="M59.5 508.5 H64.5" stroke="#2c3fa0" stroke-width="1"/><path d="M62 506 V511" stroke="#2c3fa0" stroke-width="1"/><path d="M66 526.5 H76.2" stroke="#9a9a9a" stroke-width="1" stroke-dasharray="1 1"/><rect x="57.5" y="522.5" width="8" height="8" rx="1" fill="#fcfcfc" stroke="#919191"/><path d="M59.5 526.5 H64.5" stroke="#2c3fa0" stroke-width="1"/><path d="M62 524 V529" stroke="#2c3fa0" stroke-width="1"/><path d="M66 544.5 H76.2" stroke="#9a9a9a" stroke-width="1" stroke-dasharray="1 1"/><rect x="57.5" y="540.5" width="8" height="8" rx="1" fill="#fcfcfc" stroke="#919191"/><path d="M59.5 544.5 H64.5" stroke="#2c3fa0" stroke-width="1"/><path d="M62 542 V547" stroke="#2c3fa0" stroke-width="1"/><path d="M62 562.5 H76.2" stroke="#9a9a9a" stroke-width="1" stroke-dasharray="1 1"/><path d="M66 580.5 H76.2" stroke="#9a9a9a" stroke-width="1" stroke-dasharray="1 1"/><rect x="57.5" y="576.5" width="8" height="8" rx="1" fill="#fcfcfc" stroke="#919191"/><path d="M59.5 580.5 H64.5" stroke="#2c3fa0" stroke-width="1"/><path d="M62 578 V583" stroke="#2c3fa0" stroke-width="1"/><path d="M66 598.5 H76.2" stroke="#9a9a9a" stroke-width="1" stroke-dasharray="1 1"/><rect x="57.5" y="594.5" width="8" height="8" rx="1" fill="#fcfcfc" stroke="#919191"/><path d="M59.5 598.5 H64.5" stroke="#2c3fa0" stroke-width="1"/><path d="M62 596 V601" stroke="#2c3fa0" stroke-width="1"/><path d="M66 616.5 H76.2" stroke="#9a9a9a" stroke-width="1" stroke-dasharray="1 1"/><rect x="57.5" y="612.5" width="8" height="8" rx="1" fill="#fcfcfc" stroke="#919191"/><path d="M59.5 616.5 H64.5" stroke="#2c3fa0" stroke-width="1"/><path d="M62 614 V619" stroke="#2c3fa0" stroke-width="1"/><path d="M66 634.5 H76.2" stroke="#9a9a9a" stroke-width="1" stroke-dasharray="1 1"/><rect x="57.5" y="630.5" width="8" height="8" rx="1" fill="#fcfcfc" stroke="#919191"/><path d="M59.5 634.5 H64.5" stroke="#2c3fa0" stroke-width="1"/><path d="M62 632 V637" stroke="#2c3fa0" stroke-width="1"/><path d="M66 652.5 H76.2" stroke="#9a9a9a" stroke-width="1" stroke-dasharray="1 1"/><rect x="57.5" y="648.5" width="8" height="8" rx="1" fill="#fcfcfc" stroke="#919191"/><path d="M59.5 652.5 H64.5" stroke="#2c3fa0" stroke-width="1"/><path d="M62 650 V655" stroke="#2c3fa0" stroke-width="1"/><path d="M62 670.5 H76.2" stroke="#9a9a9a" stroke-width="1" stroke-dasharray="1 1"/><path d="M66 688.5 H76.2" stroke="#9a9a9a" stroke-width="1" stroke-dasharray="1 1"/><rect x="57.5" y="684.5" width="8" height="8" rx="1" fill="#fcfcfc" stroke="#919191"/><path d="M59.5 688.5 H64.5" stroke="#2c3fa0" stroke-width="1"/><path d="M62 686 V691" stroke="#2c3fa0" stroke-width="1"/><path d="M46 706.5 H56.2" stroke="#9a9a9a" stroke-width="1" stroke-dasharray="1 1"/><rect x="37.5" y="702.5" width="8" height="8" rx="1" fill="#fcfcfc" stroke="#919191"/><path d="M39.5 706.5 H44.5" stroke="#2c3fa0" stroke-width="1"/><path d="M42 704 V709" stroke="#2c3fa0" stroke-width="1"/><path d="M46 724.5 H56.2" stroke="#9a9a9a" stroke-width="1" stroke-dasharray="1 1"/><rect x="37.5" y="720.5" width="8" height="8" rx="1" fill="#fcfcfc" stroke="#919191"/><path d="M39.5 724.5 H44.5" stroke="#2c3fa0" stroke-width="1"/><path d="M42 722 V727" stroke="#2c3fa0" stroke-width="1"/><path d="M46 742.5 H56.2" stroke="#9a9a9a" stroke-width="1" stroke-dasharray="1 1"/><rect x="37.5" y="738.5" width="8" height="8" rx="1" fill="#fcfcfc" stroke="#919191"/><path d="M39.5 742.5 H44.5" stroke="#2c3fa0" stroke-width="1"/><path d="M42 740 V745" stroke="#2c3fa0" stroke-width="1"/><path d="M46 760.5 H56.2" stroke="#9a9a9a" stroke-width="1" stroke-dasharray="1 1"/><rect x="37.5" y="756.5" width="8" height="8" rx="1" fill="#fcfcfc" stroke="#919191"/><path d="M39.5 760.5 H44.5" stroke="#2c3fa0" stroke-width="1"/><path d="M42 758 V763" stroke="#2c3fa0" stroke-width="1"/><path d="M46 778.5 H56.2" stroke="#9a9a9a" stroke-width="1" stroke-dasharray="1 1"/><rect x="37.5" y="774.5" width="8" height="8" rx="1" fill="#fcfcfc" stroke="#919191"/><path d="M39.5 778.5 H44.5" stroke="#2c3fa0" stroke-width="1"/><path d="M42 776 V781" stroke="#2c3fa0" stroke-width="1"/><path d="M26 796.5 H31" stroke="#9a9a9a" stroke-width="1" stroke-dasharray="1 1"/><rect x="17.5" y="792.5" width="8" height="8" rx="1" fill="#fcfcfc" stroke="#919191"/><path d="M19.5 796.5 H24.5" stroke="#2c3fa0" stroke-width="1"/><path d="M34.5 789.5 H41.5 V794.5 H46.5 V801.5 H34.5 Z M41.5 789.5 H46.5 V794.5" fill="#f4f4f4" stroke="#222"/><path d="M46 814.5 H56.2" stroke="#9a9a9a" stroke-width="1" stroke-dasharray="1 1"/><rect x="37.5" y="810.5" width="8" height="8" rx="1" fill="#fcfcfc" stroke="#919191"/><path d="M39.5 814.5 H44.5" stroke="#2c3fa0" stroke-width="1"/><path d="M42 812 V817" stroke="#2c3fa0" stroke-width="1"/><path d="M46 832.5 H56.2" stroke="#9a9a9a" stroke-width="1" stroke-dasharray="1 1"/><rect x="37.5" y="828.5" width="8" height="8" rx="1" fill="#fcfcfc" stroke="#919191"/><path d="M39.5 832.5 H44.5" stroke="#2c3fa0" stroke-width="1"/><path d="M42 830 V835" stroke="#2c3fa0" stroke-width="1"/><path d="M46 850.5 H56.2" stroke="#9a9a9a" stroke-width="1" stroke-dasharray="1 1"/><rect x="37.5" y="846.5" width="8" height="8" rx="1" fill="#fcfcfc" stroke="#919191"/><path d="M39.5 850.5 H44.5" stroke="#2c3fa0" stroke-width="1"/><path d="M42 848 V853" stroke="#2c3fa0" stroke-width="1"/><path d="M46 868.5 H56.2" stroke="#9a9a9a" stroke-width="1" stroke-dasharray="1 1"/><rect x="37.5" y="864.5" width="8" height="8" rx="1" fill="#fcfcfc" stroke="#919191"/><path d="M39.5 868.5 H44.5" stroke="#2c3fa0" stroke-width="1"/><path d="M42 866 V871" stroke="#2c3fa0" stroke-width="1"/><path d="M46 886.5 H56.2" stroke="#9a9a9a" stroke-width="1" stroke-dasharray="1 1"/><rect x="37.5" y="882.5" width="8" height="8" rx="1" fill="#fcfcfc" stroke="#919191"/><path d="M39.5 886.5 H44.5" stroke="#2c3fa0" stroke-width="1"/><path d="M42 884 V889" stroke="#2c3fa0" stroke-width="1"/><path d="M46 904.5 H56.2" stroke="#9a9a9a" stroke-width="1" stroke-dasharray="1 1"/><rect x="37.5" y="900.5" width="8" height="8" rx="1" fill="#fcfcfc" stroke="#919191"/><path d="M39.5 904.5 H44.5" stroke="#2c3fa0" stroke-width="1"/><path d="M42 902 V907" stroke="#2c3fa0" stroke-width="1"/><path d="M46 922.5 H56.2" stroke="#9a9a9a" stroke-width="1" stroke-dasharray="1 1"/><rect x="37.5" y="918.5" width="8" height="8" rx="1" fill="#fcfcfc" stroke="#919191"/><path d="M39.5 922.5 H44.5" stroke="#2c3fa0" stroke-width="1"/><path d="M42 920 V925" stroke="#2c3fa0" stroke-width="1"/><path d="M46 940.5 H56.2" stroke="#9a9a9a" stroke-width="1" stroke-dasharray="1 1"/><rect x="37.5" y="936.5" width="8" height="8" rx="1" fill="#fcfcfc" stroke="#919191"/><path d="M39.5 940.5 H44.5" stroke="#2c3fa0" stroke-width="1"/><path d="M42 938 V943" stroke="#2c3fa0" stroke-width="1"/><path d="M46 958.5 H56.2" stroke="#9a9a9a" stroke-width="1" stroke-dasharray="1 1"/><rect x="37.5" y="954.5" width="8" height="8" rx="1" fill="#fcfcfc" stroke="#919191"/><path d="M39.5 958.5 H44.5" stroke="#2c3fa0" stroke-width="1"/><path d="M42 956 V961" stroke="#2c3fa0" stroke-width="1"/><path d="M46 976.5 H56.2" stroke="#9a9a9a" stroke-width="1" stroke-dasharray="1 1"/><rect x="37.5" y="972.5" width="8" height="8" rx="1" fill="#fcfcfc" stroke="#919191"/><path d="M39.5 976.5 H44.5" stroke="#2c3fa0" stroke-width="1"/><path d="M42 974 V979" stroke="#2c3fa0" stroke-width="1"/><path d="M46 994.5 H56.2" stroke="#9a9a9a" stroke-width="1" stroke-dasharray="1 1"/><rect x="37.5" y="990.5" width="8" height="8" rx="1" fill="#fcfcfc" stroke="#919191"/><path d="M39.5 994.5 H44.5" stroke="#2c3fa0" stroke-width="1"/><path d="M42 992 V997" stroke="#2c3fa0" stroke-width="1"/><path d="M46 1012.5 H56.2" stroke="#9a9a9a" stroke-width="1" stroke-dasharray="1 1"/><rect x="37.5" y="1008.5" width="8" height="8" rx="1" fill="#fcfcfc" stroke="#919191"/><path d="M39.5 1012.5 H44.5" stroke="#2c3fa0" stroke-width="1"/><path d="M66 1030.5 H76.2" stroke="#9a9a9a" stroke-width="1" stroke-dasharray="1 1"/><rect x="57.5" y="1026.5" width="8" height="8" rx="1" fill="#fcfcfc" stroke="#919191"/><path d="M59.5 1030.5 H64.5" stroke="#2c3fa0" stroke-width="1"/><path d="M82 1048.5 H96.4" stroke="#9a9a9a" stroke-width="1" stroke-dasharray="1 1"/><path d="M66 1066.5 H76.2" stroke="#9a9a9a" stroke-width="1" stroke-dasharray="1 1"/><rect x="57.5" y="1062.5" width="8" height="8" rx="1" fill="#fcfcfc" stroke="#919191"/><path d="M59.5 1066.5 H64.5" stroke="#2c3fa0" stroke-width="1"/><path d="M62 1064 V1069" stroke="#2c3fa0" stroke-width="1"/></svg>
<div class="a" style="left:175px;top:174px;width:15.5px;height:893px;background:#f0f0f0;"></div>
<div class="a" style="left:175px;top:174px;width:1px;height:893px;background:#e9e9e9;"></div>
<div class="a" style="left:176px;top:192px;width:13.5px;height:635px;background:linear-gradient(90deg,#f4f4f4 0,#e2e2e2 35%,#c9c9c9 60%,#c2c2c2 100%);border:1px solid #979797;border-radius:2px"></div>
<svg class="a" style="left:178.5px;top:506px;" width="10" height="9" viewBox="0 0 10 9"><path d="M1 1.5 H8 M1 3.5 H8 M1 5.5 H8 M1 7.5 H8" stroke="#6a6a6a" stroke-width="1" opacity=".0"/><path d="M1 2.5 H8 M1 4.5 H8 M1 6.5 H8" stroke="#5f5f5f" stroke-width="1"/><path d="M1 3.5 H8 M1 5.5 H8 M1 7.5 H8" stroke="#fff" stroke-width="1" opacity=".7"/></svg>
<svg class="a" style="left:179px;top:180px;" width="9" height="6" viewBox="0 0 9 6"><path d="M0.5 5 L4.2 1 L8 5 Z" fill="#505050"/></svg>
<svg class="a" style="left:179px;top:1057px;" width="9" height="6" viewBox="0 0 9 6"><path d="M0.5 1 L4.2 5 L8 1 Z" fill="#505050"/></svg>
<div class="a" style="left:13px;top:1067px;width:177.5px;height:16.5px;background:#f0f0f0;"></div>
<div class="a" style="left:31.5px;top:1069px;width:70px;height:14px;background:linear-gradient(#f6f6f6 0,#e8e8e8 45%,#d0d0d0 55%,#cfcfcf 100%);border:1px solid #979797;border-radius:2px"></div>
<svg class="a" style="left:61px;top:1072px;" width="10" height="8" viewBox="0 0 10 8"><path d="M1.5 1 V7 M3.5 1 V7 M5.5 1 V7 M7.5 1 V7" stroke="#5f5f5f" stroke-width="1" opacity="0"/><path d="M1.5 1 V7 M3.5 1 V7 M5.5 1 V7" stroke="#555" stroke-width="1"/><path d="M2.5 1 V7 M4.5 1 V7 M6.5 1 V7" stroke="#fff" stroke-width="1" opacity=".7"/></svg>
<svg class="a" style="left:18px;top:1071px;" width="6" height="9" viewBox="0 0 6 9"><path d="M5 0.5 L1 4.3 L5 8 Z" fill="#404040"/></svg>
<svg class="a" style="left:164px;top:1071px;" width="6" height="9" viewBox="0 0 6 9"><path d="M1 0.5 L5 4.3 L1 8 Z" fill="#404040"/></svg>
<div class="a" style="left:194px;top:153px;width:1.3px;height:933px;background:#4e4e4e;"></div>
<div class="a" style="left:195.3px;top:153px;width:6px;height:933px;background:linear-gradient(90deg,#fbfbfb,#f1f1f1 60%,#e6e6e6);"></div>
<div class="a" style="left:201.3px;top:151px;width:1.6px;height:934px;background:#555;"></div>
<div class="a" style="left:9px;top:1084px;width:185px;height:2px;background:#dfe9f5;"></div>
<div class="a" style="left:203.5px;top:153px;width:1665.5px;height:914px;background:#fff;"></div>
<div class="a" style="left:201.3px;top:151px;width:1671px;height:2px;background:#585858;"></div>
<div class="a" style="left:1869px;top:153px;width:3px;height:935px;background:#e4e4e4;"></div>
<div class="a" style="left:1869px;top:153px;width:1px;height:935px;background:#c9c9c9;"></div>
<svg class="a" style="left:1816px;top:154px;" width="54" height="16" viewBox="0 0 54 16"><rect x="3.6" y="8.6" width="11" height="3" rx=".8" fill="#fff" stroke="#3c3f48" stroke-width="1.2"/><path d="M23.5 4.5 L25 2.6 H31.6 V10.4 L30 12.4" fill="none" stroke="#3c3f48" stroke-width="1.1"/><rect x="21.6" y="4.6" width="8.4" height="8" rx=".8" fill="#fff" stroke="#3c3f48" stroke-width="1.2"/><rect x="24.8" y="7.4" width="2" height="3" fill="#fff" stroke="#3c3f48" stroke-width="1"/><path d="M40.6 4.6 L48.4 12 M48.4 4.6 L40.6 12" stroke="#3c3f48" stroke-width="3.6" stroke-linecap="square"/><path d="M40.6 4.6 L48.4 12 M48.4 4.6 L40.6 12" stroke="#f0f0f0" stroke-width="1.3" stroke-linecap="square"/></svg>
<div class="a" style="left:203.5px;top:1067.5px;width:1665.5px;height:18px;background:linear-gradient(#f6f6f6,#efefef);"></div>
<div class="a" style="left:427px;top:1068px;width:1442px;height:17.5px;background:linear-gradient(#f1f1f1,#ececec 50%,#eaeaea);"></div>
<div class="t " style="left:214.70px;top:1068.65px;font-size:11.70px;color:#111;letter-spacing:-0.132px;">1/8" = 1'-0"</div>
<svg class="a" style="left:203px;top:1066px" width="1669" height="20" viewBox="203 1066 1669 20"><rect x="282.5" y="1069" width="15" height="10.6" rx="1" fill="#f4f4f4" stroke="#3a3d45" stroke-width="1.2"/><rect x="284" y="1070.4" width="4" height="2.8" fill="#555"/><rect x="292" y="1070.4" width="4" height="2.8" fill="#555"/><rect x="288" y="1073.2" width="4" height="2.8" fill="#555"/><rect x="284" y="1076" width="4" height="2.6" fill="#999"/><rect x="292" y="1076" width="4" height="2.6" fill="#999"/><rect x="288" y="1070.4" width="4" height="2.8" fill="#bbb"/><path d="M304.5 1073.5 L308 1069.5 H318.6 V1076.6 L315 1080.6 H304.5 Z" fill="#cfe4f4" stroke="#1c6cc6" stroke-width="1.2" stroke-linejoin="round"/><path d="M304.5 1073.5 H315 V1080.6 M315 1073.5 L318.6 1069.5" fill="none" stroke="#1c6cc6" stroke-width="1.1"/><circle cx="330.6" cy="1074" r="4.4" fill="#e6f0fa" stroke="#5d95d6" stroke-width="1.1"/><path d="M326 1080.4 H333" stroke="#444" stroke-width="1.4"/><path d="M333 1075.6 L338.6 1081 M338.6 1075.6 L333 1081" stroke="#d4201c" stroke-width="1.9"/><path d="M344.5 1076.5 H347.5 M352 1069.5 V1071" stroke="#333" stroke-width="1" stroke-dasharray="1.5 1"/><path d="M348.5 1080.5 V1072.5 H359.5" fill="none" stroke="#1c6cc6" stroke-width="1.4"/><path d="M350.5 1075.5 H353" stroke="#d4201c" stroke-width="1"/><path d="M353.6 1074.6 L359.2 1080.2 M359.2 1074.6 L353.6 1080.2" stroke="#d4201c" stroke-width="1.9"/><path d="M365 1076.5 H368 M373 1069.5 V1071" stroke="#333" stroke-width="1" stroke-dasharray="1.5 1"/><path d="M369.5 1080.5 V1072.5 H375" fill="none" stroke="#1c6cc6" stroke-width="1.4"/><path d="M371.5 1075.5 H374" stroke="#d4201c" stroke-width="1"/><circle cx="377.6" cy="1074.6" r="2.8" fill="#e6f0fa" stroke="#3f84d8" stroke-width="1.1"/><path d="M376.6 1077.6 V1080 Q377.6 1081 378.6 1080 V1077.6" fill="#fff" stroke="#333" stroke-width=".9"/><path d="M386 1072.6 L388.6 1071.4 L391 1077 M400.6 1074.8 L398.6 1070.6 L396 1070.4" fill="none" stroke="#222" stroke-width="1.1"/><ellipse cx="393.2" cy="1078" rx="2.6" ry="2" fill="#eef" stroke="#222" stroke-width="1.1" transform="rotate(-20 393.2 1078)"/><ellipse cx="399" cy="1075.6" rx="2.6" ry="2" fill="#eef" stroke="#222" stroke-width="1.1" transform="rotate(-20 399 1075.6)"/><circle cx="414.7" cy="1073.6" r="2.8" fill="#e9f3fd" stroke="#3f84d8" stroke-width="1.1"/><path d="M413.7 1076.6 V1079.2 Q414.7 1080.2 415.7 1079.2 V1076.6" fill="#fff" stroke="#333" stroke-width=".9"/><path d="M436.6 1072.4 L432.8 1075.9 L436.6 1079.4 Z" fill="#222"/><path d="M1860.2 1072 L1864 1075.4 L1860.2 1078.8 Z" fill="#222"/><rect x="1141.5" y="1069" width="14" height="13.4" rx="1.5" fill="#e4e4e4" stroke="#9a9a9a"/></svg>
<div class="a" style="left:9px;top:1086px;width:1863px;height:1px;background:#8c8c8c;"></div>
<div class="a" style="left:9px;top:1087px;width:1863px;height:1px;background:#f4f4f4;"></div>
<div class="a" style="left:9px;top:1088px;width:1863px;height:20px;background:linear-gradient(#dcdcdc,#cfcfcf 50%,#c2c2c2);"></div>
<div class="a" style="left:1449px;top:1089px;width:1px;height:19px;background:#bdbdbd;"></div>
<div class="a" style="left:1450px;top:1089px;width:1px;height:19px;background:#e6e6e6;"></div>
<div class="a" style="left:1869px;top:1089px;width:1px;height:19px;background:#bdbdbd;"></div>
<div class="a" style="left:1870px;top:1089px;width:1px;height:19px;background:#e6e6e6;"></div>
<div class="t " style="left:10.90px;top:1091.64px;font-size:12.00px;color:#111;letter-spacing:-0.350px;">Click</div>
<div class="t " style="left:39.10px;top:1091.64px;font-size:12.00px;color:#111;letter-spacing:0.392px;">to</div>
<div class="t " style="left:53.20px;top:1091.64px;font-size:12.00px;color:#111;letter-spacing:-0.647px;">select,</div>
<div class="t " style="left:89.10px;top:1091.64px;font-size:12.00px;color:#111;letter-spacing:-0.624px;">TAB</div>
<div class="t " style="left:114.10px;top:1091.64px;font-size:12.00px;color:#111;letter-spacing:0.048px;">for</div>
<div class="t " style="left:132.00px;top:1091.64px;font-size:12.00px;color:#111;letter-spacing:-0.343px;">alternates,</div>
<div class="t " style="left:189.30px;top:1091.64px;font-size:12.00px;color:#111;letter-spacing:-1.646px;">CTRL</div>
<div class="t " style="left:220.30px;top:1091.64px;font-size:12.00px;color:#111;letter-spacing:-0.864px;">adds,</div>
<div class="t " style="left:251.10px;top:1091.64px;font-size:12.00px;color:#111;letter-spacing:-1.191px;">SHIFT</div>
<div class="t " style="left:285.60px;top:1091.64px;font-size:12.00px;color:#111;letter-spacing:-0.348px;">unselects.</div>
<div class="a" style="left:1675px;top:1092px;width:14px;height:14px;background:#fff;border:1px solid #55595f"></div>
<svg class="a" style="left:1675px;top:1092px;" width="14" height="14" viewBox="0 0 14 14"><path d="M3 7.2 L5.8 10.2 L11 3.6" fill="none" stroke="#2f9a1c" stroke-width="2.2"/></svg>
<div class="t " style="left:1692.80px;top:1091.45px;font-size:11.70px;color:#111;letter-spacing:-0.243px;">Press &amp; Drag</div>
<svg class="a" style="left:1776px;top:1091px;" width="18" height="16" viewBox="0 0 18 16"><defs><linearGradient id="gfun" x1="0" y1="0" x2="0" y2="1"><stop offset="0" stop-color="#fafafa"/><stop offset="1" stop-color="#b8bcc4"/></linearGradient></defs><path d="M1.6 2.2 H16.6 L10.6 9.6 V13.8 H7.6 V9.6 Z" fill="url(#gfun)" stroke="#4d525c" stroke-width="1.2" stroke-linejoin="round"/></svg>
<div class="t " style="left:1794.00px;top:1094.25px;font-size:11.70px;color:#111;letter-spacing:-2.158px;">:1</div>
<svg class="a" style="left:203px;top:153px" width="1666" height="914" viewBox="203 153 1666 914" shape-rendering="crispEdges"><defs><pattern id="pl" width="96" height="96" patternUnits="userSpaceOnUse"><rect width="96" height="96" fill="#e7e7e7"/><path d="M0 22h1v1h-1zM0 24h1v1h-1zM0 41h1v1h-1zM0 44h1v1h-1zM0 68h1v1h-1zM0 74h1v1h-1zM0 86h1v1h-1zM1 0h1v1h-1zM1 2h1v1h-1zM1 4h1v1h-1zM1 11h1v1h-1zM1 19h1v1h-1zM1 22h1v1h-1zM1 35h1v1h-1zM1 37h1v1h-1zM1 51h1v1h-1zM1 65h1v1h-1zM1 73h1v1h-1zM1 77h1v1h-1zM1 87h1v1h-1zM1 93h1v1h-1zM1 94h1v1h-1zM2 8h1v1h-1zM2 15h1v1h-1zM2 21h1v1h-1zM2 23h1v1h-1zM2 24h1v1h-1zM2 27h1v1h-1zM2 31h1v1h-1zM2 41h1v1h-1zM2 46h1v1h-1zM2 50h1v1h-1zM2 53h1v1h-1zM2 57h1v1h-1zM2 61h1v1h-1zM2 74h1v1h-1zM3 2h1v1h-1zM3 13h1v1h-1zM3 18h1v1h-1zM3 23h1v1h-1zM3 29h1v1h-1zM3 35h1v1h-1zM3 37h1v1h-1zM3 39h1v1h-1zM3 44h1v1h-1zM3 57h1v1h-1zM3 67h1v1h-1zM3 73h1v1h-1zM3 80h1v1h-1zM3 83h1v1h-1zM3 95h1v1h-1zM4 5h1v1h-1zM4 21h1v1h-1zM4 48h1v1h-1zM4 56h1v1h-1zM4 61h1v1h-1zM4 63h1v1h-1zM4 73h1v1h-1zM4 86h1v1h-1zM4 93h1v1h-1zM5 1h1v1h-1zM5 7h1v1h-1zM5 14h1v1h-1zM5 24h1v1h-1zM5 25h1v1h-1zM5 34h1v1h-1zM5 41h1v1h-1zM5 44h1v1h-1zM5 46h1v1h-1zM5 56h1v1h-1zM5 67h1v1h-1zM5 74h1v1h-1zM5 78h1v1h-1zM5 95h1v1h-1zM6 6h1v1h-1zM6 12h1v1h-1zM6 22h1v1h-1zM6 39h1v1h-1zM6 44h1v1h-1zM6 49h1v1h-1zM6 58h1v1h-1zM6 63h1v1h-1zM6 70h1v1h-1zM6 78h1v1h-1zM6 81h1v1h-1zM6 83h1v1h-1zM6 91h1v1h-1zM6 94h1v1h-1zM7 13h1v1h-1zM7 26h1v1h-1zM7 30h1v1h-1zM7 43h1v1h-1zM7 46h1v1h-1zM7 61h1v1h-1zM7 67h1v1h-1zM7 72h1v1h-1zM7 75h1v1h-1zM7 88h1v1h-1zM7 94h1v1h-1zM8 5h1v1h-1zM8 8h1v1h-1zM8 13h1v1h-1zM8 16h1v1h-1zM8 32h1v1h-1zM8 56h1v1h-1zM8 59h1v1h-1zM8 63h1v1h-1zM8 72h1v1h-1zM8 77h1v1h-1zM8 84h1v1h-1zM9 2h1v1h-1zM9 10h1v1h-1zM9 19h1v1h-1zM9 25h1v1h-1zM9 36h1v1h-1zM9 39h1v1h-1zM9 51h1v1h-1zM9 65h1v1h-1zM9 73h1v1h-1zM9 80h1v1h-1zM9 82h1v1h-1zM9 86h1v1h-1zM9 89h1v1h-1zM9 93h1v1h-1zM10 5h1v1h-1zM10 17h1v1h-1zM10 35h1v1h-1zM10 38h1v1h-1zM10 69h1v1h-1zM10 78h1v1h-1zM11 0h1v1h-1zM11 32h1v1h-1zM11 39h1v1h-1zM11 51h1v1h-1zM11 54h1v1h-1zM11 56h1v1h-1zM11 61h1v1h-1zM11 65h1v1h-1zM11 71h1v1h-1zM11 83h1v1h-1zM11 84h1v1h-1zM12 1h1v1h-1zM12 16h1v1h-1zM12 23h1v1h-1zM12 26h1v1h-1zM12 28h1v1h-1zM12 42h1v1h-1zM12 48h1v1h-1zM12 64h1v1h-1zM12 69h1v1h-1zM12 70h1v1h-1zM12 84h1v1h-1zM13 3h1v1h-1zM13 4h1v1h-1zM13 5h1v1h-1zM13 20h1v1h-1zM13 40h1v1h-1zM13 42h1v1h-1zM13 76h1v1h-1zM13 85h1v1h-1zM13 89h1v1h-1zM13 94h1v1h-1zM14 11h1v1h-1zM14 27h1v1h-1zM14 30h1v1h-1zM14 37h1v1h-1zM14 45h1v1h-1zM14 51h1v1h-1zM14 55h1v1h-1zM14 57h1v1h-1zM14 79h1v1h-1zM14 91h1v1h-1zM15 7h1v1h-1zM15 10h1v1h-1zM15 19h1v1h-1zM15 36h1v1h-1zM15 40h1v1h-1zM15 63h1v1h-1zM15 72h1v1h-1zM15 73h1v1h-1zM15 74h1v1h-1zM15 77h1v1h-1zM15 84h1v1h-1zM15 91h1v1h-1zM16 1h1v1h-1zM16 5h1v1h-1zM16 10h1v1h-1zM16 17h1v1h-1zM16 23h1v1h-1zM16 26h1v1h-1zM16 29h1v1h-1zM16 30h1v1h-1zM16 32h1v1h-1zM16 68h1v1h-1zM16 69h1v1h-1zM16 70h1v1h-1zM16 88h1v1h-1zM16 95h1v1h-1zM17 14h1v1h-1zM17 20h1v1h-1zM17 28h1v1h-1zM17 36h1v1h-1zM17 43h1v1h-1zM17 56h1v1h-1zM17 72h1v1h-1zM17 73h1v1h-1zM17 74h1v1h-1zM17 91h1v1h-1zM18 2h1v1h-1zM18 4h1v1h-1zM18 17h1v1h-1zM18 34h1v1h-1zM18 40h1v1h-1zM18 45h1v1h-1zM18 53h1v1h-1zM18 63h1v1h-1zM18 69h1v1h-1zM18 77h1v1h-1zM18 86h1v1h-1zM19 12h1v1h-1zM19 19h1v1h-1zM19 29h1v1h-1zM19 32h1v1h-1zM19 47h1v1h-1zM19 49h1v1h-1zM19 64h1v1h-1zM19 81h1v1h-1zM19 87h1v1h-1zM19 92h1v1h-1zM20 14h1v1h-1zM20 16h1v1h-1zM20 21h1v1h-1zM20 22h1v1h-1zM20 25h1v1h-1zM20 53h1v1h-1zM20 62h1v1h-1zM20 88h1v1h-1zM21 16h1v1h-1zM21 20h1v1h-1zM21 33h1v1h-1zM21 38h1v1h-1zM21 39h1v1h-1zM21 41h1v1h-1zM21 51h1v1h-1zM21 52h1v1h-1zM21 57h1v1h-1zM21 64h1v1h-1zM21 68h1v1h-1zM21 72h1v1h-1zM21 75h1v1h-1zM21 84h1v1h-1zM21 87h1v1h-1zM21 90h1v1h-1zM22 0h1v1h-1zM22 1h1v1h-1zM22 9h1v1h-1zM22 18h1v1h-1zM22 20h1v1h-1zM22 28h1v1h-1zM22 30h1v1h-1zM22 32h1v1h-1zM22 36h1v1h-1zM22 61h1v1h-1zM22 92h1v1h-1zM22 95h1v1h-1zM23 11h1v1h-1zM23 24h1v1h-1zM23 40h1v1h-1zM23 44h1v1h-1zM23 52h1v1h-1zM23 58h1v1h-1zM23 92h1v1h-1zM24 3h1v1h-1zM24 7h1v1h-1zM24 20h1v1h-1zM24 22h1v1h-1zM24 38h1v1h-1zM24 51h1v1h-1zM24 55h1v1h-1zM24 63h1v1h-1zM24 65h1v1h-1zM24 77h1v1h-1zM24 84h1v1h-1zM24 89h1v1h-1zM25 6h1v1h-1zM25 8h1v1h-1zM25 14h1v1h-1zM25 21h1v1h-1zM25 26h1v1h-1zM25 29h1v1h-1zM25 34h1v1h-1zM25 35h1v1h-1zM25 44h1v1h-1zM25 47h1v1h-1zM25 69h1v1h-1zM25 72h1v1h-1zM25 76h1v1h-1zM26 2h1v1h-1zM26 6h1v1h-1zM26 7h1v1h-1zM26 8h1v1h-1zM26 12h1v1h-1zM26 19h1v1h-1zM26 22h1v1h-1zM26 29h1v1h-1zM26 36h1v1h-1zM26 39h1v1h-1zM26 42h1v1h-1zM26 43h1v1h-1zM26 49h1v1h-1zM26 79h1v1h-1zM26 83h1v1h-1zM26 91h1v1h-1zM27 0h1v1h-1zM27 6h1v1h-1zM27 15h1v1h-1zM27 54h1v1h-1zM27 58h1v1h-1zM27 61h1v1h-1zM27 63h1v1h-1zM27 68h1v1h-1zM27 87h1v1h-1zM27 92h1v1h-1zM28 11h1v1h-1zM28 25h1v1h-1zM28 30h1v1h-1zM28 33h1v1h-1zM28 35h1v1h-1zM28 40h1v1h-1zM28 72h1v1h-1zM28 77h1v1h-1zM28 80h1v1h-1zM28 86h1v1h-1zM28 91h1v1h-1zM29 1h1v1h-1zM29 2h1v1h-1zM29 23h1v1h-1zM29 29h1v1h-1zM29 34h1v1h-1zM29 41h1v1h-1zM29 46h1v1h-1zM29 50h1v1h-1zM29 52h1v1h-1zM29 62h1v1h-1zM29 65h1v1h-1zM29 70h1v1h-1zM29 75h1v1h-1zM29 93h1v1h-1zM30 5h1v1h-1zM30 8h1v1h-1zM30 13h1v1h-1zM30 20h1v1h-1zM30 48h1v1h-1zM30 73h1v1h-1zM30 77h1v1h-1zM30 86h1v1h-1zM30 90h1v1h-1zM31 0h1v1h-1zM31 31h1v1h-1zM31 34h1v1h-1zM31 42h1v1h-1zM31 50h1v1h-1zM31 62h1v1h-1zM31 79h1v1h-1zM31 84h1v1h-1zM31 89h1v1h-1zM31 91h1v1h-1zM31 95h1v1h-1zM32 2h1v1h-1zM32 8h1v1h-1zM32 19h1v1h-1zM32 27h1v1h-1zM32 33h1v1h-1zM32 44h1v1h-1zM32 47h1v1h-1zM32 67h1v1h-1zM32 69h1v1h-1zM32 81h1v1h-1zM32 87h1v1h-1zM32 90h1v1h-1zM32 93h1v1h-1zM33 13h1v1h-1zM33 23h1v1h-1zM33 30h1v1h-1zM33 35h1v1h-1zM33 40h1v1h-1zM33 46h1v1h-1zM33 50h1v1h-1zM33 58h1v1h-1zM33 78h1v1h-1zM34 4h1v1h-1zM34 8h1v1h-1zM34 11h1v1h-1zM34 18h1v1h-1zM34 33h1v1h-1zM34 37h1v1h-1zM34 42h1v1h-1zM34 46h1v1h-1zM34 52h1v1h-1zM34 63h1v1h-1zM34 65h1v1h-1zM34 70h1v1h-1zM34 72h1v1h-1zM34 82h1v1h-1zM34 84h1v1h-1zM34 86h1v1h-1zM34 92h1v1h-1zM34 94h1v1h-1zM35 15h1v1h-1zM35 17h1v1h-1zM35 22h1v1h-1zM35 29h1v1h-1zM35 50h1v1h-1zM35 61h1v1h-1zM35 62h1v1h-1zM35 68h1v1h-1zM35 77h1v1h-1zM35 82h1v1h-1zM36 2h1v1h-1zM36 25h1v1h-1zM36 28h1v1h-1zM36 59h1v1h-1zM36 70h1v1h-1zM36 75h1v1h-1zM36 78h1v1h-1zM37 6h1v1h-1zM37 8h1v1h-1zM37 15h1v1h-1zM37 35h1v1h-1zM37 45h1v1h-1zM37 46h1v1h-1zM37 51h1v1h-1zM37 72h1v1h-1zM37 75h1v1h-1zM37 80h1v1h-1zM37 85h1v1h-1zM37 92h1v1h-1zM37 93h1v1h-1zM38 1h1v1h-1zM38 5h1v1h-1zM38 12h1v1h-1zM38 13h1v1h-1zM38 19h1v1h-1zM38 21h1v1h-1zM38 28h1v1h-1zM38 29h1v1h-1zM38 37h1v1h-1zM38 40h1v1h-1zM38 42h1v1h-1zM38 50h1v1h-1zM38 55h1v1h-1zM38 70h1v1h-1zM38 75h1v1h-1zM38 81h1v1h-1zM38 83h1v1h-1zM38 88h1v1h-1zM38 95h1v1h-1zM39 0h1v1h-1zM39 9h1v1h-1zM39 25h1v1h-1zM39 57h1v1h-1zM39 59h1v1h-1zM39 71h1v1h-1zM39 74h1v1h-1zM39 90h1v1h-1zM40 12h1v1h-1zM40 19h1v1h-1zM40 21h1v1h-1zM40 29h1v1h-1zM40 33h1v1h-1zM40 37h1v1h-1zM40 45h1v1h-1zM40 51h1v1h-1zM40 54h1v1h-1zM40 61h1v1h-1zM40 69h1v1h-1zM40 76h1v1h-1zM40 79h1v1h-1zM40 93h1v1h-1zM41 0h1v1h-1zM41 5h1v1h-1zM41 13h1v1h-1zM41 28h1v1h-1zM41 41h1v1h-1zM41 43h1v1h-1zM41 63h1v1h-1zM41 67h1v1h-1zM41 72h1v1h-1zM41 84h1v1h-1zM42 2h1v1h-1zM42 13h1v1h-1zM42 15h1v1h-1zM42 35h1v1h-1zM42 53h1v1h-1zM42 71h1v1h-1zM42 89h1v1h-1zM42 91h1v1h-1zM43 16h1v1h-1zM43 18h1v1h-1zM43 22h1v1h-1zM43 37h1v1h-1zM43 43h1v1h-1zM43 46h1v1h-1zM43 50h1v1h-1zM43 56h1v1h-1zM43 65h1v1h-1zM43 68h1v1h-1zM43 79h1v1h-1zM43 84h1v1h-1zM43 93h1v1h-1zM44 15h1v1h-1zM44 29h1v1h-1zM44 33h1v1h-1zM44 39h1v1h-1zM44 49h1v1h-1zM44 54h1v1h-1zM44 73h1v1h-1zM44 77h1v1h-1zM44 92h1v1h-1zM45 8h1v1h-1zM45 13h1v1h-1zM45 37h1v1h-1zM45 58h1v1h-1zM45 60h1v1h-1zM45 67h1v1h-1zM45 72h1v1h-1zM45 82h1v1h-1zM45 95h1v1h-1zM46 3h1v1h-1zM46 23h1v1h-1zM46 25h1v1h-1zM46 36h1v1h-1zM46 37h1v1h-1zM46 39h1v1h-1zM46 43h1v1h-1zM46 70h1v1h-1zM46 72h1v1h-1zM46 94h1v1h-1zM47 8h1v1h-1zM47 12h1v1h-1zM47 16h1v1h-1zM47 21h1v1h-1zM47 43h1v1h-1zM47 45h1v1h-1zM47 53h1v1h-1zM47 59h1v1h-1zM47 62h1v1h-1zM47 64h1v1h-1zM47 71h1v1h-1zM47 76h1v1h-1zM47 81h1v1h-1zM48 1h1v1h-1zM48 4h1v1h-1zM48 10h1v1h-1zM48 18h1v1h-1zM48 26h1v1h-1zM48 32h1v1h-1zM48 44h1v1h-1zM48 74h1v1h-1zM48 77h1v1h-1zM48 85h1v1h-1zM48 87h1v1h-1zM48 91h1v1h-1zM48 95h1v1h-1zM49 2h1v1h-1zM49 6h1v1h-1zM49 26h1v1h-1zM49 37h1v1h-1zM49 39h1v1h-1zM49 43h1v1h-1zM49 52h1v1h-1zM49 55h1v1h-1zM49 66h1v1h-1zM49 70h1v1h-1zM49 83h1v1h-1zM49 94h1v1h-1zM49 95h1v1h-1zM50 0h1v1h-1zM50 34h1v1h-1zM50 38h1v1h-1zM50 57h1v1h-1zM50 60h1v1h-1zM50 72h1v1h-1zM50 75h1v1h-1zM50 77h1v1h-1zM50 85h1v1h-1zM50 90h1v1h-1zM51 11h1v1h-1zM51 19h1v1h-1zM51 20h1v1h-1zM51 22h1v1h-1zM51 30h1v1h-1zM51 36h1v1h-1zM51 40h1v1h-1zM51 47h1v1h-1zM51 53h1v1h-1zM51 65h1v1h-1zM51 66h1v1h-1zM51 83h1v1h-1zM52 9h1v1h-1zM52 10h1v1h-1zM52 14h1v1h-1zM52 18h1v1h-1zM52 33h1v1h-1zM52 51h1v1h-1zM52 68h1v1h-1zM52 77h1v1h-1zM53 8h1v1h-1zM53 20h1v1h-1zM53 24h1v1h-1zM53 34h1v1h-1zM53 38h1v1h-1zM53 44h1v1h-1zM53 48h1v1h-1zM53 85h1v1h-1zM53 87h1v1h-1zM53 95h1v1h-1zM54 5h1v1h-1zM54 8h1v1h-1zM54 27h1v1h-1zM54 57h1v1h-1zM54 69h1v1h-1zM54 71h1v1h-1zM54 78h1v1h-1zM54 91h1v1h-1zM54 93h1v1h-1zM55 2h1v1h-1zM55 11h1v1h-1zM55 19h1v1h-1zM55 31h1v1h-1zM55 41h1v1h-1zM55 48h1v1h-1zM55 50h1v1h-1zM55 75h1v1h-1zM56 14h1v1h-1zM56 16h1v1h-1zM56 22h1v1h-1zM56 26h1v1h-1zM56 31h1v1h-1zM56 36h1v1h-1zM56 43h1v1h-1zM56 45h1v1h-1zM56 63h1v1h-1zM56 68h1v1h-1zM56 87h1v1h-1zM57 3h1v1h-1zM57 15h1v1h-1zM57 19h1v1h-1zM57 21h1v1h-1zM57 28h1v1h-1zM57 40h1v1h-1zM57 50h1v1h-1zM57 60h1v1h-1zM57 91h1v1h-1zM58 1h1v1h-1zM58 2h1v1h-1zM58 5h1v1h-1zM58 6h1v1h-1zM58 14h1v1h-1zM58 25h1v1h-1zM58 29h1v1h-1zM58 35h1v1h-1zM58 37h1v1h-1zM58 42h1v1h-1zM58 45h1v1h-1zM58 76h1v1h-1zM58 89h1v1h-1zM59 33h1v1h-1zM59 34h1v1h-1zM59 50h1v1h-1zM59 58h1v1h-1zM59 59h1v1h-1zM59 65h1v1h-1zM59 70h1v1h-1zM59 83h1v1h-1zM59 95h1v1h-1zM60 5h1v1h-1zM60 14h1v1h-1zM60 16h1v1h-1zM60 23h1v1h-1zM60 25h1v1h-1zM60 30h1v1h-1zM60 47h1v1h-1zM60 48h1v1h-1zM60 69h1v1h-1zM60 72h1v1h-1zM60 77h1v1h-1zM60 81h1v1h-1zM60 89h1v1h-1zM61 12h1v1h-1zM61 22h1v1h-1zM61 40h1v1h-1zM61 56h1v1h-1zM61 58h1v1h-1zM61 64h1v1h-1zM61 71h1v1h-1zM61 76h1v1h-1zM61 85h1v1h-1zM61 92h1v1h-1zM62 3h1v1h-1zM62 8h1v1h-1zM62 11h1v1h-1zM62 21h1v1h-1zM62 23h1v1h-1zM62 27h1v1h-1zM62 45h1v1h-1zM62 53h1v1h-1zM62 64h1v1h-1zM62 68h1v1h-1zM62 90h1v1h-1zM62 91h1v1h-1zM63 4h1v1h-1zM63 14h1v1h-1zM63 30h1v1h-1zM63 50h1v1h-1zM63 57h1v1h-1zM63 60h1v1h-1zM63 64h1v1h-1zM63 73h1v1h-1zM63 75h1v1h-1zM63 77h1v1h-1zM63 81h1v1h-1zM63 86h1v1h-1zM64 8h1v1h-1zM64 41h1v1h-1zM64 45h1v1h-1zM64 47h1v1h-1zM64 52h1v1h-1zM64 54h1v1h-1zM64 56h1v1h-1zM64 69h1v1h-1zM64 71h1v1h-1zM64 76h1v1h-1zM64 83h1v1h-1zM64 85h1v1h-1zM64 87h1v1h-1zM64 88h1v1h-1zM64 90h1v1h-1zM65 2h1v1h-1zM65 12h1v1h-1zM65 14h1v1h-1zM65 16h1v1h-1zM65 17h1v1h-1zM65 19h1v1h-1zM65 21h1v1h-1zM65 26h1v1h-1zM65 36h1v1h-1zM65 38h1v1h-1zM65 46h1v1h-1zM65 52h1v1h-1zM65 62h1v1h-1zM65 73h1v1h-1zM65 79h1v1h-1zM65 86h1v1h-1zM65 95h1v1h-1zM66 7h1v1h-1zM66 30h1v1h-1zM66 32h1v1h-1zM66 41h1v1h-1zM66 46h1v1h-1zM66 48h1v1h-1zM66 50h1v1h-1zM66 52h1v1h-1zM66 63h1v1h-1zM66 64h1v1h-1zM66 68h1v1h-1zM66 71h1v1h-1zM66 75h1v1h-1zM66 78h1v1h-1zM66 92h1v1h-1zM67 1h1v1h-1zM67 22h1v1h-1zM67 25h1v1h-1zM67 28h1v1h-1zM67 40h1v1h-1zM67 56h1v1h-1zM67 60h1v1h-1zM67 62h1v1h-1zM67 70h1v1h-1zM67 83h1v1h-1zM67 90h1v1h-1zM67 93h1v1h-1zM68 0h1v1h-1zM68 7h1v1h-1zM68 9h1v1h-1zM68 14h1v1h-1zM68 20h1v1h-1zM68 21h1v1h-1zM68 34h1v1h-1zM68 43h1v1h-1zM68 48h1v1h-1zM68 50h1v1h-1zM68 51h1v1h-1zM68 52h1v1h-1zM68 54h1v1h-1zM68 67h1v1h-1zM68 71h1v1h-1zM68 77h1v1h-1zM68 82h1v1h-1zM68 89h1v1h-1zM69 1h1v1h-1zM69 19h1v1h-1zM69 27h1v1h-1zM69 33h1v1h-1zM69 37h1v1h-1zM69 65h1v1h-1zM69 66h1v1h-1zM69 75h1v1h-1zM69 77h1v1h-1zM69 79h1v1h-1zM69 82h1v1h-1zM69 87h1v1h-1zM69 93h1v1h-1zM70 8h1v1h-1zM70 13h1v1h-1zM70 17h1v1h-1zM70 20h1v1h-1zM70 25h1v1h-1zM70 27h1v1h-1zM70 29h1v1h-1zM70 32h1v1h-1zM70 40h1v1h-1zM70 44h1v1h-1zM70 64h1v1h-1zM70 74h1v1h-1zM70 77h1v1h-1zM70 78h1v1h-1zM70 80h1v1h-1zM71 0h1v1h-1zM71 2h1v1h-1zM71 4h1v1h-1zM71 7h1v1h-1zM71 11h1v1h-1zM71 13h1v1h-1zM71 16h1v1h-1zM71 18h1v1h-1zM71 27h1v1h-1zM71 51h1v1h-1zM71 80h1v1h-1zM71 82h1v1h-1zM71 90h1v1h-1zM72 0h1v1h-1zM72 10h1v1h-1zM72 12h1v1h-1zM72 18h1v1h-1zM72 22h1v1h-1zM72 28h1v1h-1zM72 32h1v1h-1zM72 33h1v1h-1zM72 35h1v1h-1zM72 43h1v1h-1zM72 53h1v1h-1zM72 54h1v1h-1zM72 58h1v1h-1zM72 84h1v1h-1zM72 92h1v1h-1zM73 2h1v1h-1zM73 8h1v1h-1zM73 19h1v1h-1zM73 62h1v1h-1zM73 65h1v1h-1zM73 79h1v1h-1zM73 82h1v1h-1zM73 86h1v1h-1zM73 95h1v1h-1zM74 7h1v1h-1zM74 32h1v1h-1zM74 38h1v1h-1zM74 50h1v1h-1zM74 56h1v1h-1zM74 70h1v1h-1zM74 74h1v1h-1zM74 89h1v1h-1zM74 93h1v1h-1zM75 13h1v1h-1zM75 17h1v1h-1zM75 22h1v1h-1zM75 27h1v1h-1zM75 36h1v1h-1zM75 48h1v1h-1zM75 57h1v1h-1zM75 59h1v1h-1zM75 62h1v1h-1zM75 69h1v1h-1zM75 75h1v1h-1zM75 78h1v1h-1zM75 95h1v1h-1zM76 2h1v1h-1zM76 7h1v1h-1zM76 11h1v1h-1zM76 23h1v1h-1zM76 35h1v1h-1zM76 40h1v1h-1zM76 50h1v1h-1zM76 62h1v1h-1zM76 64h1v1h-1zM76 69h1v1h-1zM76 75h1v1h-1zM76 92h1v1h-1zM77 0h1v1h-1zM77 5h1v1h-1zM77 14h1v1h-1zM77 23h1v1h-1zM77 31h1v1h-1zM77 34h1v1h-1zM77 37h1v1h-1zM77 41h1v1h-1zM77 55h1v1h-1zM77 59h1v1h-1zM77 60h1v1h-1zM77 86h1v1h-1zM78 11h1v1h-1zM78 28h1v1h-1zM78 40h1v1h-1zM78 42h1v1h-1zM78 47h1v1h-1zM78 51h1v1h-1zM78 75h1v1h-1zM78 83h1v1h-1zM78 85h1v1h-1zM78 90h1v1h-1zM78 92h1v1h-1zM78 94h1v1h-1zM79 40h1v1h-1zM79 62h1v1h-1zM79 65h1v1h-1zM79 69h1v1h-1zM79 75h1v1h-1zM79 83h1v1h-1zM79 93h1v1h-1zM79 94h1v1h-1zM80 5h1v1h-1zM80 7h1v1h-1zM80 12h1v1h-1zM80 18h1v1h-1zM80 22h1v1h-1zM80 28h1v1h-1zM80 31h1v1h-1zM80 38h1v1h-1zM80 54h1v1h-1zM80 56h1v1h-1zM80 63h1v1h-1zM80 66h1v1h-1zM80 73h1v1h-1zM80 92h1v1h-1zM81 1h1v1h-1zM81 15h1v1h-1zM81 18h1v1h-1zM81 43h1v1h-1zM81 47h1v1h-1zM81 62h1v1h-1zM81 68h1v1h-1zM81 75h1v1h-1zM81 78h1v1h-1zM81 83h1v1h-1zM81 88h1v1h-1zM82 19h1v1h-1zM82 21h1v1h-1zM82 27h1v1h-1zM82 34h1v1h-1zM82 38h1v1h-1zM82 41h1v1h-1zM82 53h1v1h-1zM82 73h1v1h-1zM82 81h1v1h-1zM82 90h1v1h-1zM83 17h1v1h-1zM83 39h1v1h-1zM83 48h1v1h-1zM83 69h1v1h-1zM83 72h1v1h-1zM83 90h1v1h-1zM83 94h1v1h-1zM84 8h1v1h-1zM84 35h1v1h-1zM84 45h1v1h-1zM84 52h1v1h-1zM84 56h1v1h-1zM84 65h1v1h-1zM84 75h1v1h-1zM84 80h1v1h-1zM84 85h1v1h-1zM84 92h1v1h-1zM85 8h1v1h-1zM85 16h1v1h-1zM85 22h1v1h-1zM85 31h1v1h-1zM85 34h1v1h-1zM85 90h1v1h-1zM85 94h1v1h-1zM86 7h1v1h-1zM86 18h1v1h-1zM86 28h1v1h-1zM86 29h1v1h-1zM86 46h1v1h-1zM86 54h1v1h-1zM86 70h1v1h-1zM86 73h1v1h-1zM86 82h1v1h-1zM86 89h1v1h-1zM86 92h1v1h-1zM87 8h1v1h-1zM87 14h1v1h-1zM87 29h1v1h-1zM87 39h1v1h-1zM87 50h1v1h-1zM87 57h1v1h-1zM87 68h1v1h-1zM87 80h1v1h-1zM87 89h1v1h-1zM87 94h1v1h-1zM88 0h1v1h-1zM88 17h1v1h-1zM88 22h1v1h-1zM88 30h1v1h-1zM88 35h1v1h-1zM88 37h1v1h-1zM88 52h1v1h-1zM88 60h1v1h-1zM88 63h1v1h-1zM88 66h1v1h-1zM88 68h1v1h-1zM88 82h1v1h-1zM89 6h1v1h-1zM89 24h1v1h-1zM89 27h1v1h-1zM89 39h1v1h-1zM89 47h1v1h-1zM89 50h1v1h-1zM89 57h1v1h-1zM89 84h1v1h-1zM89 86h1v1h-1zM89 89h1v1h-1zM89 95h1v1h-1zM90 17h1v1h-1zM90 21h1v1h-1zM90 31h1v1h-1zM90 52h1v1h-1zM90 54h1v1h-1zM90 65h1v1h-1zM90 67h1v1h-1zM90 75h1v1h-1zM91 1h1v1h-1zM91 4h1v1h-1zM91 25h1v1h-1zM91 34h1v1h-1zM91 37h1v1h-1zM91 57h1v1h-1zM91 62h1v1h-1zM91 66h1v1h-1zM91 71h1v1h-1zM91 75h1v1h-1zM91 81h1v1h-1zM91 93h1v1h-1zM92 3h1v1h-1zM92 5h1v1h-1zM92 9h1v1h-1zM92 13h1v1h-1zM92 16h1v1h-1zM92 18h1v1h-1zM92 20h1v1h-1zM92 23h1v1h-1zM92 30h1v1h-1zM92 32h1v1h-1zM92 46h1v1h-1zM92 50h1v1h-1zM92 74h1v1h-1zM92 78h1v1h-1zM92 91h1v1h-1zM93 0h1v1h-1zM93 14h1v1h-1zM93 16h1v1h-1zM93 40h1v1h-1zM93 44h1v1h-1zM93 72h1v1h-1zM93 83h1v1h-1zM93 92h1v1h-1zM94 6h1v1h-1zM94 16h1v1h-1zM94 22h1v1h-1zM94 29h1v1h-1zM94 47h1v1h-1zM94 53h1v1h-1zM94 57h1v1h-1zM94 59h1v1h-1zM94 65h1v1h-1zM94 67h1v1h-1zM94 74h1v1h-1zM94 93h1v1h-1zM95 1h1v1h-1zM95 7h1v1h-1zM95 13h1v1h-1zM95 20h1v1h-1zM95 31h1v1h-1zM95 33h1v1h-1zM95 42h1v1h-1zM95 61h1v1h-1zM95 71h1v1h-1zM95 73h1v1h-1zM95 75h1v1h-1zM95 78h1v1h-1zM95 82h1v1h-1zM95 88h1v1h-1zM95 91h1v1h-1zM95 95h1v1h-1z" fill="#a8a8a8"/></pattern><pattern id="pd" width="96" height="96" patternUnits="userSpaceOnUse"><rect width="96" height="96" fill="#8b8b8b"/><path d="M0 6h1v1h-1zM0 11h1v1h-1zM0 16h1v1h-1zM0 19h1v1h-1zM0 21h1v1h-1zM0 36h1v1h-1zM0 49h1v1h-1zM0 62h1v1h-1zM0 63h1v1h-1zM0 79h1v1h-1zM0 88h1v1h-1zM0 93h1v1h-1zM1 8h1v1h-1zM1 18h1v1h-1zM1 24h1v1h-1zM1 30h1v1h-1zM1 32h1v1h-1zM1 44h1v1h-1zM1 46h1v1h-1zM1 47h1v1h-1zM1 69h1v1h-1zM1 78h1v1h-1zM2 2h1v1h-1zM2 27h1v1h-1zM2 29h1v1h-1zM2 31h1v1h-1zM2 51h1v1h-1zM2 71h1v1h-1zM2 74h1v1h-1zM2 77h1v1h-1zM2 89h1v1h-1zM2 92h1v1h-1zM3 5h1v1h-1zM3 10h1v1h-1zM3 19h1v1h-1zM3 25h1v1h-1zM3 35h1v1h-1zM3 37h1v1h-1zM3 42h1v1h-1zM3 47h1v1h-1zM3 50h1v1h-1zM3 54h1v1h-1zM3 57h1v1h-1zM3 61h1v1h-1zM3 66h1v1h-1zM3 70h1v1h-1zM3 77h1v1h-1zM3 82h1v1h-1zM4 0h1v1h-1zM4 3h1v1h-1zM4 16h1v1h-1zM4 39h1v1h-1zM4 40h1v1h-1zM4 49h1v1h-1zM4 70h1v1h-1zM4 74h1v1h-1zM4 84h1v1h-1zM4 91h1v1h-1zM4 92h1v1h-1zM5 13h1v1h-1zM5 16h1v1h-1zM5 28h1v1h-1zM5 29h1v1h-1zM5 31h1v1h-1zM5 43h1v1h-1zM5 55h1v1h-1zM5 64h1v1h-1zM5 82h1v1h-1zM5 89h1v1h-1zM6 1h1v1h-1zM6 7h1v1h-1zM6 17h1v1h-1zM6 25h1v1h-1zM6 27h1v1h-1zM6 39h1v1h-1zM6 61h1v1h-1zM6 67h1v1h-1zM6 71h1v1h-1zM6 76h1v1h-1zM6 78h1v1h-1zM6 92h1v1h-1zM7 11h1v1h-1zM7 19h1v1h-1zM7 33h1v1h-1zM7 46h1v1h-1zM7 54h1v1h-1zM7 73h1v1h-1zM8 34h1v1h-1zM8 52h1v1h-1zM8 59h1v1h-1zM8 61h1v1h-1zM8 81h1v1h-1zM8 90h1v1h-1zM9 17h1v1h-1zM9 19h1v1h-1zM9 26h1v1h-1zM9 28h1v1h-1zM9 32h1v1h-1zM9 39h1v1h-1zM9 42h1v1h-1zM9 44h1v1h-1zM9 52h1v1h-1zM9 62h1v1h-1zM9 69h1v1h-1zM9 70h1v1h-1zM9 77h1v1h-1zM9 84h1v1h-1zM9 93h1v1h-1zM10 1h1v1h-1zM10 12h1v1h-1zM10 46h1v1h-1zM10 54h1v1h-1zM10 58h1v1h-1zM10 63h1v1h-1zM10 67h1v1h-1zM10 75h1v1h-1zM10 82h1v1h-1zM10 91h1v1h-1zM10 95h1v1h-1zM11 23h1v1h-1zM11 39h1v1h-1zM11 43h1v1h-1zM11 55h1v1h-1zM11 65h1v1h-1zM11 77h1v1h-1zM11 81h1v1h-1zM11 87h1v1h-1zM12 2h1v1h-1zM12 4h1v1h-1zM12 13h1v1h-1zM12 34h1v1h-1zM12 49h1v1h-1zM12 52h1v1h-1zM12 58h1v1h-1zM12 84h1v1h-1zM13 0h1v1h-1zM13 14h1v1h-1zM13 17h1v1h-1zM13 19h1v1h-1zM13 27h1v1h-1zM13 31h1v1h-1zM13 32h1v1h-1zM13 41h1v1h-1zM13 44h1v1h-1zM13 66h1v1h-1zM13 77h1v1h-1zM13 82h1v1h-1zM14 8h1v1h-1zM14 11h1v1h-1zM14 14h1v1h-1zM14 18h1v1h-1zM14 23h1v1h-1zM14 34h1v1h-1zM14 39h1v1h-1zM14 49h1v1h-1zM14 53h1v1h-1zM14 55h1v1h-1zM14 64h1v1h-1zM14 67h1v1h-1zM14 73h1v1h-1zM15 10h1v1h-1zM15 29h1v1h-1zM15 57h1v1h-1zM15 78h1v1h-1zM16 3h1v1h-1zM16 15h1v1h-1zM16 20h1v1h-1zM16 23h1v1h-1zM16 41h1v1h-1zM16 49h1v1h-1zM16 51h1v1h-1zM16 66h1v1h-1zM16 87h1v1h-1zM17 6h1v1h-1zM17 29h1v1h-1zM17 31h1v1h-1zM17 34h1v1h-1zM17 44h1v1h-1zM17 55h1v1h-1zM17 71h1v1h-1zM17 80h1v1h-1zM17 90h1v1h-1zM18 22h1v1h-1zM18 24h1v1h-1zM18 26h1v1h-1zM18 35h1v1h-1zM18 41h1v1h-1zM18 47h1v1h-1zM18 53h1v1h-1zM18 76h1v1h-1zM18 82h1v1h-1zM18 84h1v1h-1zM19 1h1v1h-1zM19 3h1v1h-1zM19 53h1v1h-1zM19 60h1v1h-1zM19 69h1v1h-1zM19 72h1v1h-1zM19 80h1v1h-1zM19 90h1v1h-1zM19 92h1v1h-1zM20 27h1v1h-1zM20 34h1v1h-1zM20 35h1v1h-1zM20 41h1v1h-1zM20 51h1v1h-1zM20 62h1v1h-1zM20 67h1v1h-1zM20 68h1v1h-1zM20 79h1v1h-1zM21 12h1v1h-1zM21 20h1v1h-1zM21 23h1v1h-1zM21 45h1v1h-1zM21 47h1v1h-1zM21 71h1v1h-1zM21 78h1v1h-1zM21 94h1v1h-1zM22 3h1v1h-1zM22 6h1v1h-1zM22 9h1v1h-1zM22 15h1v1h-1zM22 17h1v1h-1zM22 25h1v1h-1zM22 30h1v1h-1zM22 41h1v1h-1zM22 46h1v1h-1zM22 51h1v1h-1zM22 59h1v1h-1zM22 67h1v1h-1zM22 69h1v1h-1zM22 85h1v1h-1zM22 87h1v1h-1zM22 88h1v1h-1zM23 8h1v1h-1zM23 20h1v1h-1zM23 57h1v1h-1zM23 58h1v1h-1zM23 59h1v1h-1zM23 71h1v1h-1zM23 84h1v1h-1zM24 27h1v1h-1zM24 29h1v1h-1zM24 31h1v1h-1zM24 46h1v1h-1zM24 51h1v1h-1zM24 55h1v1h-1zM24 60h1v1h-1zM24 62h1v1h-1zM24 64h1v1h-1zM24 74h1v1h-1zM24 86h1v1h-1zM25 2h1v1h-1zM25 13h1v1h-1zM25 77h1v1h-1zM25 79h1v1h-1zM25 82h1v1h-1zM25 90h1v1h-1zM25 94h1v1h-1zM26 9h1v1h-1zM26 22h1v1h-1zM26 27h1v1h-1zM26 41h1v1h-1zM26 44h1v1h-1zM26 52h1v1h-1zM26 53h1v1h-1zM26 58h1v1h-1zM26 59h1v1h-1zM26 65h1v1h-1zM26 75h1v1h-1zM26 86h1v1h-1zM27 19h1v1h-1zM27 23h1v1h-1zM27 24h1v1h-1zM27 30h1v1h-1zM27 36h1v1h-1zM27 43h1v1h-1zM27 55h1v1h-1zM27 71h1v1h-1zM27 73h1v1h-1zM27 77h1v1h-1zM27 80h1v1h-1zM27 88h1v1h-1zM27 93h1v1h-1zM28 11h1v1h-1zM28 26h1v1h-1zM28 29h1v1h-1zM28 32h1v1h-1zM28 37h1v1h-1zM28 42h1v1h-1zM28 43h1v1h-1zM28 86h1v1h-1zM29 3h1v1h-1zM29 6h1v1h-1zM29 7h1v1h-1zM29 25h1v1h-1zM29 42h1v1h-1zM29 53h1v1h-1zM29 65h1v1h-1zM29 73h1v1h-1zM29 79h1v1h-1zM29 85h1v1h-1zM29 87h1v1h-1zM29 90h1v1h-1zM30 13h1v1h-1zM30 17h1v1h-1zM30 36h1v1h-1zM30 51h1v1h-1zM30 56h1v1h-1zM30 60h1v1h-1zM30 65h1v1h-1zM30 66h1v1h-1zM30 68h1v1h-1zM30 82h1v1h-1zM31 0h1v1h-1zM31 5h1v1h-1zM31 6h1v1h-1zM31 9h1v1h-1zM31 19h1v1h-1zM31 26h1v1h-1zM31 29h1v1h-1zM31 35h1v1h-1zM31 71h1v1h-1zM31 86h1v1h-1zM31 91h1v1h-1zM31 94h1v1h-1zM32 4h1v1h-1zM32 5h1v1h-1zM32 15h1v1h-1zM32 33h1v1h-1zM32 38h1v1h-1zM32 41h1v1h-1zM32 43h1v1h-1zM32 77h1v1h-1zM33 20h1v1h-1zM33 23h1v1h-1zM33 24h1v1h-1zM33 40h1v1h-1zM33 45h1v1h-1zM33 51h1v1h-1zM33 66h1v1h-1zM33 68h1v1h-1zM33 85h1v1h-1zM33 87h1v1h-1zM33 89h1v1h-1zM33 90h1v1h-1zM33 91h1v1h-1zM34 12h1v1h-1zM34 28h1v1h-1zM34 31h1v1h-1zM34 34h1v1h-1zM34 61h1v1h-1zM34 70h1v1h-1zM34 75h1v1h-1zM34 78h1v1h-1zM35 3h1v1h-1zM35 7h1v1h-1zM35 8h1v1h-1zM35 23h1v1h-1zM35 25h1v1h-1zM35 31h1v1h-1zM35 33h1v1h-1zM35 51h1v1h-1zM35 63h1v1h-1zM35 67h1v1h-1zM35 82h1v1h-1zM35 95h1v1h-1zM36 14h1v1h-1zM36 17h1v1h-1zM36 19h1v1h-1zM36 31h1v1h-1zM36 38h1v1h-1zM36 43h1v1h-1zM36 56h1v1h-1zM36 71h1v1h-1zM36 74h1v1h-1zM37 2h1v1h-1zM37 7h1v1h-1zM37 16h1v1h-1zM37 26h1v1h-1zM37 30h1v1h-1zM37 36h1v1h-1zM37 49h1v1h-1zM37 93h1v1h-1zM38 9h1v1h-1zM38 12h1v1h-1zM38 29h1v1h-1zM38 36h1v1h-1zM38 42h1v1h-1zM38 48h1v1h-1zM38 54h1v1h-1zM38 72h1v1h-1zM38 75h1v1h-1zM38 78h1v1h-1zM39 2h1v1h-1zM39 17h1v1h-1zM39 25h1v1h-1zM39 38h1v1h-1zM39 50h1v1h-1zM39 52h1v1h-1zM39 53h1v1h-1zM39 57h1v1h-1zM39 63h1v1h-1zM39 77h1v1h-1zM39 83h1v1h-1zM39 89h1v1h-1zM39 92h1v1h-1zM40 0h1v1h-1zM40 4h1v1h-1zM40 7h1v1h-1zM40 13h1v1h-1zM40 27h1v1h-1zM40 45h1v1h-1zM40 48h1v1h-1zM40 50h1v1h-1zM40 59h1v1h-1zM40 69h1v1h-1zM40 73h1v1h-1zM40 85h1v1h-1zM41 1h1v1h-1zM41 15h1v1h-1zM41 18h1v1h-1zM41 26h1v1h-1zM41 30h1v1h-1zM41 35h1v1h-1zM41 48h1v1h-1zM41 70h1v1h-1zM41 77h1v1h-1zM41 89h1v1h-1zM41 95h1v1h-1zM42 51h1v1h-1zM42 56h1v1h-1zM42 59h1v1h-1zM42 66h1v1h-1zM43 5h1v1h-1zM43 10h1v1h-1zM43 21h1v1h-1zM43 33h1v1h-1zM43 35h1v1h-1zM43 43h1v1h-1zM43 57h1v1h-1zM43 58h1v1h-1zM43 81h1v1h-1zM43 83h1v1h-1zM43 86h1v1h-1zM43 92h1v1h-1zM44 3h1v1h-1zM44 5h1v1h-1zM44 13h1v1h-1zM44 23h1v1h-1zM44 28h1v1h-1zM44 46h1v1h-1zM44 49h1v1h-1zM44 51h1v1h-1zM44 58h1v1h-1zM44 78h1v1h-1zM44 83h1v1h-1zM45 17h1v1h-1zM45 43h1v1h-1zM45 50h1v1h-1zM45 61h1v1h-1zM45 70h1v1h-1zM45 73h1v1h-1zM45 79h1v1h-1zM45 80h1v1h-1zM45 82h1v1h-1zM45 90h1v1h-1zM46 4h1v1h-1zM46 14h1v1h-1zM46 17h1v1h-1zM46 22h1v1h-1zM46 23h1v1h-1zM46 27h1v1h-1zM46 30h1v1h-1zM46 37h1v1h-1zM46 42h1v1h-1zM46 43h1v1h-1zM46 47h1v1h-1zM46 53h1v1h-1zM46 54h1v1h-1zM46 57h1v1h-1zM46 59h1v1h-1zM46 62h1v1h-1zM46 65h1v1h-1zM46 87h1v1h-1zM46 90h1v1h-1zM46 92h1v1h-1zM47 4h1v1h-1zM47 6h1v1h-1zM47 9h1v1h-1zM47 32h1v1h-1zM47 41h1v1h-1zM47 50h1v1h-1zM47 62h1v1h-1zM47 82h1v1h-1zM48 3h1v1h-1zM48 15h1v1h-1zM48 18h1v1h-1zM48 25h1v1h-1zM48 27h1v1h-1zM48 36h1v1h-1zM48 40h1v1h-1zM48 43h1v1h-1zM48 56h1v1h-1zM48 59h1v1h-1zM48 89h1v1h-1zM48 92h1v1h-1zM48 94h1v1h-1zM48 95h1v1h-1zM49 10h1v1h-1zM49 43h1v1h-1zM49 88h1v1h-1zM49 90h1v1h-1zM50 2h1v1h-1zM50 15h1v1h-1zM50 19h1v1h-1zM50 29h1v1h-1zM50 39h1v1h-1zM50 60h1v1h-1zM50 65h1v1h-1zM50 69h1v1h-1zM50 74h1v1h-1zM50 76h1v1h-1zM50 92h1v1h-1zM51 4h1v1h-1zM51 8h1v1h-1zM51 22h1v1h-1zM51 54h1v1h-1zM51 79h1v1h-1zM51 88h1v1h-1zM51 95h1v1h-1zM52 20h1v1h-1zM52 33h1v1h-1zM52 34h1v1h-1zM52 39h1v1h-1zM52 43h1v1h-1zM52 49h1v1h-1zM52 51h1v1h-1zM52 57h1v1h-1zM52 61h1v1h-1zM52 70h1v1h-1zM52 72h1v1h-1zM52 81h1v1h-1zM53 0h1v1h-1zM53 6h1v1h-1zM53 8h1v1h-1zM53 30h1v1h-1zM53 36h1v1h-1zM53 42h1v1h-1zM53 50h1v1h-1zM53 58h1v1h-1zM53 60h1v1h-1zM53 62h1v1h-1zM53 80h1v1h-1zM53 83h1v1h-1zM53 85h1v1h-1zM53 87h1v1h-1zM53 89h1v1h-1zM53 94h1v1h-1zM54 6h1v1h-1zM54 12h1v1h-1zM54 16h1v1h-1zM54 36h1v1h-1zM54 38h1v1h-1zM54 43h1v1h-1zM54 58h1v1h-1zM54 61h1v1h-1zM54 65h1v1h-1zM54 67h1v1h-1zM54 73h1v1h-1zM55 18h1v1h-1zM55 43h1v1h-1zM55 51h1v1h-1zM55 54h1v1h-1zM55 59h1v1h-1zM55 69h1v1h-1zM55 76h1v1h-1zM55 81h1v1h-1zM55 85h1v1h-1zM56 9h1v1h-1zM56 14h1v1h-1zM56 34h1v1h-1zM56 37h1v1h-1zM56 40h1v1h-1zM56 61h1v1h-1zM56 64h1v1h-1zM57 7h1v1h-1zM57 18h1v1h-1zM57 43h1v1h-1zM57 58h1v1h-1zM57 63h1v1h-1zM57 75h1v1h-1zM57 78h1v1h-1zM57 92h1v1h-1zM58 5h1v1h-1zM58 11h1v1h-1zM58 21h1v1h-1zM58 22h1v1h-1zM58 34h1v1h-1zM58 36h1v1h-1zM58 39h1v1h-1zM58 46h1v1h-1zM58 50h1v1h-1zM58 51h1v1h-1zM58 57h1v1h-1zM58 62h1v1h-1zM58 67h1v1h-1zM58 68h1v1h-1zM58 71h1v1h-1zM58 76h1v1h-1zM58 81h1v1h-1zM58 86h1v1h-1zM58 92h1v1h-1zM58 94h1v1h-1zM59 0h1v1h-1zM59 2h1v1h-1zM59 17h1v1h-1zM59 24h1v1h-1zM59 27h1v1h-1zM59 42h1v1h-1zM59 44h1v1h-1zM59 56h1v1h-1zM59 83h1v1h-1zM59 90h1v1h-1zM60 5h1v1h-1zM60 13h1v1h-1zM60 14h1v1h-1zM60 27h1v1h-1zM60 30h1v1h-1zM60 34h1v1h-1zM60 64h1v1h-1zM60 67h1v1h-1zM60 78h1v1h-1zM60 81h1v1h-1zM60 82h1v1h-1zM61 22h1v1h-1zM61 32h1v1h-1zM61 46h1v1h-1zM61 47h1v1h-1zM61 72h1v1h-1zM61 76h1v1h-1zM61 83h1v1h-1zM61 88h1v1h-1zM61 93h1v1h-1zM62 0h1v1h-1zM62 3h1v1h-1zM62 6h1v1h-1zM62 13h1v1h-1zM62 24h1v1h-1zM62 35h1v1h-1zM62 45h1v1h-1zM62 50h1v1h-1zM62 57h1v1h-1zM62 59h1v1h-1zM62 79h1v1h-1zM63 12h1v1h-1zM63 17h1v1h-1zM63 24h1v1h-1zM63 37h1v1h-1zM63 44h1v1h-1zM63 61h1v1h-1zM63 64h1v1h-1zM63 68h1v1h-1zM63 90h1v1h-1zM63 92h1v1h-1zM64 30h1v1h-1zM64 34h1v1h-1zM64 58h1v1h-1zM64 74h1v1h-1zM64 78h1v1h-1zM64 80h1v1h-1zM64 83h1v1h-1zM65 3h1v1h-1zM65 11h1v1h-1zM65 13h1v1h-1zM65 32h1v1h-1zM65 45h1v1h-1zM65 47h1v1h-1zM65 57h1v1h-1zM65 61h1v1h-1zM65 65h1v1h-1zM65 68h1v1h-1zM65 70h1v1h-1zM65 72h1v1h-1zM65 73h1v1h-1zM65 75h1v1h-1zM65 76h1v1h-1zM65 77h1v1h-1zM65 82h1v1h-1zM65 91h1v1h-1zM66 3h1v1h-1zM66 16h1v1h-1zM66 23h1v1h-1zM66 43h1v1h-1zM66 44h1v1h-1zM66 47h1v1h-1zM66 74h1v1h-1zM66 75h1v1h-1zM66 79h1v1h-1zM66 83h1v1h-1zM66 84h1v1h-1zM66 88h1v1h-1zM67 15h1v1h-1zM67 19h1v1h-1zM67 31h1v1h-1zM67 39h1v1h-1zM67 46h1v1h-1zM67 52h1v1h-1zM67 57h1v1h-1zM67 61h1v1h-1zM67 64h1v1h-1zM67 69h1v1h-1zM67 91h1v1h-1zM67 95h1v1h-1zM68 9h1v1h-1zM68 14h1v1h-1zM68 28h1v1h-1zM68 34h1v1h-1zM68 38h1v1h-1zM68 48h1v1h-1zM68 64h1v1h-1zM68 67h1v1h-1zM68 70h1v1h-1zM68 74h1v1h-1zM68 79h1v1h-1zM68 82h1v1h-1zM68 85h1v1h-1zM69 0h1v1h-1zM69 7h1v1h-1zM69 11h1v1h-1zM69 14h1v1h-1zM69 23h1v1h-1zM69 25h1v1h-1zM69 36h1v1h-1zM69 56h1v1h-1zM69 59h1v1h-1zM69 67h1v1h-1zM69 89h1v1h-1zM70 42h1v1h-1zM70 54h1v1h-1zM70 58h1v1h-1zM70 77h1v1h-1zM70 82h1v1h-1zM70 93h1v1h-1zM71 4h1v1h-1zM71 10h1v1h-1zM71 12h1v1h-1zM71 17h1v1h-1zM71 22h1v1h-1zM71 25h1v1h-1zM71 31h1v1h-1zM71 36h1v1h-1zM71 44h1v1h-1zM71 58h1v1h-1zM71 66h1v1h-1zM72 1h1v1h-1zM72 14h1v1h-1zM72 26h1v1h-1zM72 28h1v1h-1zM72 35h1v1h-1zM72 53h1v1h-1zM72 56h1v1h-1zM72 75h1v1h-1zM72 77h1v1h-1zM72 82h1v1h-1zM72 92h1v1h-1zM73 12h1v1h-1zM73 16h1v1h-1zM73 19h1v1h-1zM73 26h1v1h-1zM73 43h1v1h-1zM73 44h1v1h-1zM73 55h1v1h-1zM73 57h1v1h-1zM73 81h1v1h-1zM73 91h1v1h-1zM74 7h1v1h-1zM74 23h1v1h-1zM74 50h1v1h-1zM74 93h1v1h-1zM75 2h1v1h-1zM75 5h1v1h-1zM75 20h1v1h-1zM75 28h1v1h-1zM75 39h1v1h-1zM75 42h1v1h-1zM75 45h1v1h-1zM75 57h1v1h-1zM75 62h1v1h-1zM75 67h1v1h-1zM75 71h1v1h-1zM75 74h1v1h-1zM75 78h1v1h-1zM75 84h1v1h-1zM76 8h1v1h-1zM76 16h1v1h-1zM76 27h1v1h-1zM76 33h1v1h-1zM76 41h1v1h-1zM76 49h1v1h-1zM76 54h1v1h-1zM76 59h1v1h-1zM77 8h1v1h-1zM77 11h1v1h-1zM77 19h1v1h-1zM77 23h1v1h-1zM77 30h1v1h-1zM77 46h1v1h-1zM77 59h1v1h-1zM77 72h1v1h-1zM77 80h1v1h-1zM77 82h1v1h-1zM78 0h1v1h-1zM78 1h1v1h-1zM78 5h1v1h-1zM78 7h1v1h-1zM78 15h1v1h-1zM78 17h1v1h-1zM78 37h1v1h-1zM78 42h1v1h-1zM78 44h1v1h-1zM78 50h1v1h-1zM78 58h1v1h-1zM78 75h1v1h-1zM78 88h1v1h-1zM79 3h1v1h-1zM79 9h1v1h-1zM79 16h1v1h-1zM79 28h1v1h-1zM79 33h1v1h-1zM79 45h1v1h-1zM79 49h1v1h-1zM79 54h1v1h-1zM79 66h1v1h-1zM79 75h1v1h-1zM79 82h1v1h-1zM79 84h1v1h-1zM79 89h1v1h-1zM79 90h1v1h-1zM79 93h1v1h-1zM80 19h1v1h-1zM80 32h1v1h-1zM80 44h1v1h-1zM80 49h1v1h-1zM80 50h1v1h-1zM80 51h1v1h-1zM80 56h1v1h-1zM80 67h1v1h-1zM80 86h1v1h-1zM80 90h1v1h-1zM80 91h1v1h-1zM80 92h1v1h-1zM80 95h1v1h-1zM81 1h1v1h-1zM81 16h1v1h-1zM81 26h1v1h-1zM81 35h1v1h-1zM81 48h1v1h-1zM81 59h1v1h-1zM81 66h1v1h-1zM81 73h1v1h-1zM81 85h1v1h-1zM81 88h1v1h-1zM82 13h1v1h-1zM82 39h1v1h-1zM82 46h1v1h-1zM82 50h1v1h-1zM82 57h1v1h-1zM82 60h1v1h-1zM82 65h1v1h-1zM82 71h1v1h-1zM82 75h1v1h-1zM82 77h1v1h-1zM82 90h1v1h-1zM82 95h1v1h-1zM83 6h1v1h-1zM83 17h1v1h-1zM83 22h1v1h-1zM83 25h1v1h-1zM83 50h1v1h-1zM83 53h1v1h-1zM83 55h1v1h-1zM83 82h1v1h-1zM83 84h1v1h-1zM84 0h1v1h-1zM84 7h1v1h-1zM84 10h1v1h-1zM84 13h1v1h-1zM84 15h1v1h-1zM84 28h1v1h-1zM84 37h1v1h-1zM84 58h1v1h-1zM84 67h1v1h-1zM84 73h1v1h-1zM84 79h1v1h-1zM84 87h1v1h-1zM85 7h1v1h-1zM85 10h1v1h-1zM85 17h1v1h-1zM85 31h1v1h-1zM85 39h1v1h-1zM85 48h1v1h-1zM85 55h1v1h-1zM85 63h1v1h-1zM86 2h1v1h-1zM86 9h1v1h-1zM86 16h1v1h-1zM86 23h1v1h-1zM86 35h1v1h-1zM86 42h1v1h-1zM86 44h1v1h-1zM86 62h1v1h-1zM86 71h1v1h-1zM86 85h1v1h-1zM86 87h1v1h-1zM86 90h1v1h-1zM87 12h1v1h-1zM87 20h1v1h-1zM87 26h1v1h-1zM87 31h1v1h-1zM87 37h1v1h-1zM87 39h1v1h-1zM87 40h1v1h-1zM87 52h1v1h-1zM87 54h1v1h-1zM87 61h1v1h-1zM87 64h1v1h-1zM87 67h1v1h-1zM87 74h1v1h-1zM87 75h1v1h-1zM87 82h1v1h-1zM88 13h1v1h-1zM88 21h1v1h-1zM88 23h1v1h-1zM88 25h1v1h-1zM88 41h1v1h-1zM88 43h1v1h-1zM88 47h1v1h-1zM88 76h1v1h-1zM88 93h1v1h-1zM89 10h1v1h-1zM89 11h1v1h-1zM89 12h1v1h-1zM89 17h1v1h-1zM89 28h1v1h-1zM89 35h1v1h-1zM89 43h1v1h-1zM89 50h1v1h-1zM89 62h1v1h-1zM89 70h1v1h-1zM89 86h1v1h-1zM90 16h1v1h-1zM90 23h1v1h-1zM90 30h1v1h-1zM90 42h1v1h-1zM90 64h1v1h-1zM90 65h1v1h-1zM90 80h1v1h-1zM90 81h1v1h-1zM90 82h1v1h-1zM90 88h1v1h-1zM91 2h1v1h-1zM91 4h1v1h-1zM91 6h1v1h-1zM91 19h1v1h-1zM91 26h1v1h-1zM91 37h1v1h-1zM91 56h1v1h-1zM91 59h1v1h-1zM91 63h1v1h-1zM91 86h1v1h-1zM91 94h1v1h-1zM92 11h1v1h-1zM92 22h1v1h-1zM92 28h1v1h-1zM92 32h1v1h-1zM92 45h1v1h-1zM92 56h1v1h-1zM92 62h1v1h-1zM92 76h1v1h-1zM92 85h1v1h-1zM92 90h1v1h-1zM93 2h1v1h-1zM93 18h1v1h-1zM93 26h1v1h-1zM93 34h1v1h-1zM93 50h1v1h-1zM93 52h1v1h-1zM93 55h1v1h-1zM93 64h1v1h-1zM93 78h1v1h-1zM93 92h1v1h-1zM94 5h1v1h-1zM94 6h1v1h-1zM94 16h1v1h-1zM94 19h1v1h-1zM94 23h1v1h-1zM94 28h1v1h-1zM94 46h1v1h-1zM94 63h1v1h-1zM94 92h1v1h-1zM95 3h1v1h-1zM95 13h1v1h-1zM95 20h1v1h-1zM95 24h1v1h-1zM95 25h1v1h-1zM95 33h1v1h-1zM95 41h1v1h-1zM95 45h1v1h-1zM95 53h1v1h-1zM95 56h1v1h-1zM95 76h1v1h-1zM95 83h1v1h-1z" fill="#c6c6c6"/></pattern><pattern id="pbl" width="32" height="32" patternUnits="userSpaceOnUse"><rect width="32" height="32" fill="#86b1f8"/><path d="M0 3h1v1h-1zM0 4h1v1h-1zM0 24h1v1h-1zM0 26h1v1h-1zM1 17h1v1h-1zM1 28h1v1h-1zM2 2h1v1h-1zM2 5h1v1h-1zM2 8h1v1h-1zM2 12h1v1h-1zM2 19h1v1h-1zM2 21h1v1h-1zM2 24h1v1h-1zM2 27h1v1h-1zM2 28h1v1h-1zM3 19h1v1h-1zM4 0h1v1h-1zM4 6h1v1h-1zM4 10h1v1h-1zM4 18h1v1h-1zM4 22h1v1h-1zM4 30h1v1h-1zM5 17h1v1h-1zM6 20h1v1h-1zM6 21h1v1h-1zM7 2h1v1h-1zM7 3h1v1h-1zM7 8h1v1h-1zM7 10h1v1h-1zM7 15h1v1h-1zM8 0h1v1h-1zM8 24h1v1h-1zM9 1h1v1h-1zM10 19h1v1h-1zM11 17h1v1h-1zM12 0h1v1h-1zM12 7h1v1h-1zM12 20h1v1h-1zM13 17h1v1h-1zM13 28h1v1h-1zM14 12h1v1h-1zM14 17h1v1h-1zM15 2h1v1h-1zM15 8h1v1h-1zM15 17h1v1h-1zM15 19h1v1h-1zM16 12h1v1h-1zM16 27h1v1h-1zM17 10h1v1h-1zM17 15h1v1h-1zM17 29h1v1h-1zM18 7h1v1h-1zM18 27h1v1h-1zM19 0h1v1h-1zM19 14h1v1h-1zM19 21h1v1h-1zM19 26h1v1h-1zM19 27h1v1h-1zM20 6h1v1h-1zM20 11h1v1h-1zM20 13h1v1h-1zM20 23h1v1h-1zM21 1h1v1h-1zM21 10h1v1h-1zM21 14h1v1h-1zM21 17h1v1h-1zM22 4h1v1h-1zM22 8h1v1h-1zM22 26h1v1h-1zM23 1h1v1h-1zM23 6h1v1h-1zM23 11h1v1h-1zM23 16h1v1h-1zM23 30h1v1h-1zM24 0h1v1h-1zM24 10h1v1h-1zM24 22h1v1h-1zM24 24h1v1h-1zM25 9h1v1h-1zM25 22h1v1h-1zM26 2h1v1h-1zM26 14h1v1h-1zM26 18h1v1h-1zM27 6h1v1h-1zM27 16h1v1h-1zM27 25h1v1h-1zM28 8h1v1h-1zM28 10h1v1h-1zM29 19h1v1h-1zM29 22h1v1h-1zM29 25h1v1h-1zM30 3h1v1h-1zM30 4h1v1h-1zM30 5h1v1h-1zM30 7h1v1h-1zM30 16h1v1h-1zM30 24h1v1h-1zM30 27h1v1h-1zM30 30h1v1h-1zM31 1h1v1h-1zM31 13h1v1h-1zM31 20h1v1h-1z" fill="#4f87f2"/></pattern><pattern id="pbd" width="32" height="32" patternUnits="userSpaceOnUse"><rect width="32" height="32" fill="#5f81c9"/><path d="M0 3h1v1h-1zM0 23h1v1h-1zM0 26h1v1h-1zM1 2h1v1h-1zM1 20h1v1h-1zM1 25h1v1h-1zM2 5h1v1h-1zM2 7h1v1h-1zM2 14h1v1h-1zM2 16h1v1h-1zM2 21h1v1h-1zM2 29h1v1h-1zM2 31h1v1h-1zM3 3h1v1h-1zM3 10h1v1h-1zM3 12h1v1h-1zM3 20h1v1h-1zM4 7h1v1h-1zM4 18h1v1h-1zM5 4h1v1h-1zM5 17h1v1h-1zM6 16h1v1h-1zM6 25h1v1h-1zM6 28h1v1h-1zM7 18h1v1h-1zM8 27h1v1h-1zM9 2h1v1h-1zM9 20h1v1h-1zM9 26h1v1h-1zM10 0h1v1h-1zM10 11h1v1h-1zM10 14h1v1h-1zM11 11h1v1h-1zM11 22h1v1h-1zM12 4h1v1h-1zM12 10h1v1h-1zM12 20h1v1h-1zM12 26h1v1h-1zM12 28h1v1h-1zM13 1h1v1h-1zM13 7h1v1h-1zM13 14h1v1h-1zM13 31h1v1h-1zM14 17h1v1h-1zM14 23h1v1h-1zM15 7h1v1h-1zM15 11h1v1h-1zM15 16h1v1h-1zM15 19h1v1h-1zM15 28h1v1h-1zM15 29h1v1h-1zM15 30h1v1h-1zM16 0h1v1h-1zM16 15h1v1h-1zM16 17h1v1h-1zM16 24h1v1h-1zM17 5h1v1h-1zM17 11h1v1h-1zM17 21h1v1h-1zM17 30h1v1h-1zM18 3h1v1h-1zM18 8h1v1h-1zM18 20h1v1h-1zM19 0h1v1h-1zM19 16h1v1h-1zM19 18h1v1h-1zM19 24h1v1h-1zM19 30h1v1h-1zM20 2h1v1h-1zM20 25h1v1h-1zM20 26h1v1h-1zM20 31h1v1h-1zM21 9h1v1h-1zM21 11h1v1h-1zM21 24h1v1h-1zM22 24h1v1h-1zM23 5h1v1h-1zM23 18h1v1h-1zM23 27h1v1h-1zM24 5h1v1h-1zM24 7h1v1h-1zM24 14h1v1h-1zM25 6h1v1h-1zM25 24h1v1h-1zM26 12h1v1h-1zM26 16h1v1h-1zM26 17h1v1h-1zM26 31h1v1h-1zM27 7h1v1h-1zM27 12h1v1h-1zM27 18h1v1h-1zM27 20h1v1h-1zM27 21h1v1h-1zM27 28h1v1h-1zM28 31h1v1h-1zM29 30h1v1h-1zM30 9h1v1h-1zM30 12h1v1h-1zM30 28h1v1h-1zM31 4h1v1h-1zM31 15h1v1h-1zM31 21h1v1h-1z" fill="#86a8f4"/></pattern><clipPath id="cq"><polygon points="954.7,201.7 1676.6,618.6 1289.4,840.9 1162.3,768.9 990.5,866.8 523.0,598.3 696.8,499.5 568.1,425.2"/></clipPath></defs><polygon points="556.7,425.2 685.4,499.5 685.4,602.5 556.7,528.2" fill="url(#pl)" stroke="#000" stroke-width="0.9"/><path d="M556.7 530.2L685.4 604.5" stroke="#000" stroke-width="0.9" fill="none"/><polygon points="954.7,195.1 1688.0,618.6 1289.4,847.5 1162.3,775.5 990.5,873.4 511.6,598.3 685.4,499.5 556.7,425.2" fill="#e9e9e9"/><polygon points="954.7,201.7 1676.6,618.6 1289.4,840.9 1162.3,768.9 990.5,866.8 523.0,598.3 696.8,499.5 568.1,425.2" fill="url(#pl)"/><g clip-path="url(#cq)"><polygon points="954.7,201.7 568.1,425.2 568.1,473.2 954.7,249.7" fill="url(#pd)"/><polygon points="696.8,499.5 523.0,598.3 523.0,646.3 696.8,547.5" fill="url(#pd)"/><polygon points="954.7,201.7 1676.6,618.6 1676.6,666.6 954.7,249.7" fill="url(#pl)"/><path d="M954.7 249.7L568.1 473.2 M954.7 249.7L1676.6 666.6 M696.8 547.5L523.0 646.3 M954.7 201.7V249.7 M696.8 499.5V547.5" stroke="#000" stroke-width="0.9" fill="none"/></g><polygon points="930.2,319.6 954.5,305.4 977.0,318.7 955.0,334.7" fill="none" stroke="#000"/><path d="M933.2 319.8L954.5 308.0L974.0 318.9" stroke="#000" stroke-width="0.9" fill="none"/><polygon points="822.2,656.3 864.0,634.2 880.0,644.2 841.4,666.8" fill="none" stroke="#000"/><path d="M825.2 656.5L864.0 636.8L877.0 644.4" stroke="#000" stroke-width="0.9" fill="none"/><polygon points="959.2,576.4 989.1,559.2 1011.8,571.7 980.4,589.5" fill="none" stroke="#000"/><path d="M962.2 576.6L989.1 561.8L1008.8 571.9" stroke="#000" stroke-width="0.9" fill="none"/><polygon points="1098.5,652.0 1120.0,639.5 1134.2,647.5 1113.0,661.2" fill="none" stroke="#000"/><path d="M1101.5 652.2L1120.0 642.1L1131.2 647.7" stroke="#000" stroke-width="0.9" fill="none"/><polygon points="1459.8,644.5 1476.0,635.8 1493.0,645.5 1476.0,654.5" fill="none" stroke="#000"/><path d="M1462.8 644.7L1476.0 638.4L1490.0 645.7" stroke="#000" stroke-width="0.9" fill="none"/><polygon points="710.1,449.2 721.5,442.6 732.9,449.2 721.5,455.9" fill="none" stroke="#000"/><path d="M713.1 449.4L721.5 445.2L729.9 449.4" stroke="#000" stroke-width="0.9" fill="none"/><polygon points="720.3,446.5 725.6,449.2 725.3,452.6 721.5,454.8 720.3,453.6" fill="#8c8c8c"/><polygon points="971.2,725.4 995.1,712.1 1010.9,720.5 986.1,734.4" fill="none" stroke="#000"/><path d="M974.2 725.6L995.1 714.7L1007.9 720.7" stroke="#000" stroke-width="0.9" fill="none"/><polygon points="984.0,733.2 984.6,722.0 989.6,717.6 990.6,718.2 990.6,731.0 986.3,734.2" fill="#8c8c8c" stroke="#000"/><polygon points="954.7,195.1 1688.0,618.6 1289.4,847.5 1162.3,775.5 990.5,873.4 511.6,598.3 685.4,499.5 556.7,425.2" stroke="#000" stroke-width="0.9" fill="none"/><polygon points="954.7,201.7 1676.6,618.6 1289.4,840.9 1162.3,768.9 990.5,866.8 523.0,598.3 696.8,499.5 568.1,425.2" stroke="#000" stroke-width="0.9" fill="none"/><polygon points="511.6,598.3 990.5,873.4 990.5,976.4 511.6,701.3" fill="url(#pl)" stroke="#000" stroke-width="0.9"/><path d="M511.6 703.3L990.5 978.4" stroke="#000" stroke-width="0.9" fill="none"/><polygon points="990.5,873.4 1162.3,775.5 1162.3,878.5 990.5,976.4" fill="url(#pd)" stroke="#000" stroke-width="0.9"/><path d="M990.5 978.4L1162.3 880.5" stroke="#000" stroke-width="0.9" fill="none"/><polygon points="1162.3,775.5 1289.4,847.5 1289.4,950.5 1162.3,878.5" fill="url(#pl)" stroke="#000" stroke-width="0.9"/><path d="M1162.3 880.5L1289.4 952.5" stroke="#000" stroke-width="0.9" fill="none"/><polygon points="1289.4,847.5 1688.0,618.6 1688.0,721.6 1289.4,950.5" fill="url(#pd)" stroke="#000" stroke-width="0.9"/><path d="M1289.4 952.5L1688.0 723.6" stroke="#000" stroke-width="0.9" fill="none"/><path d="M471.5 673.5V724.5L476.7 726.5V673.5Z" fill="#ececec" stroke="#000"/><path d="M476.7 673.5V726.5L482.0 724.5V673.5Z" fill="#8a8a8a" stroke="#000"/><path d="M525.0 704.5V755.5L530.2 757.5V704.5Z" fill="#ececec" stroke="#000"/><path d="M530.2 704.5V757.5L535.5 755.5V704.5Z" fill="#8a8a8a" stroke="#000"/><path d="M591.2 742.0V793.0L596.5 795.0V742.0Z" fill="#ececec" stroke="#000"/><path d="M596.5 742.0V795.0L601.8 793.0V742.0Z" fill="#8a8a8a" stroke="#000"/><path d="M668.2 787.5V838.5L673.5 840.5V787.5Z" fill="#ececec" stroke="#000"/><path d="M673.5 787.5V840.5L678.8 838.5V787.5Z" fill="#8a8a8a" stroke="#000"/><path d="M744.5 831.0V882.0L749.7 884.0V831.0Z" fill="#ececec" stroke="#000"/><path d="M749.7 831.0V884.0L755.0 882.0V831.0Z" fill="#8a8a8a" stroke="#000"/><path d="M821.2 875.5V926.5L826.5 928.5V875.5Z" fill="#ececec" stroke="#000"/><path d="M826.5 875.5V928.5L831.8 926.5V875.5Z" fill="#8a8a8a" stroke="#000"/><path d="M887.5 914.0V965.0L892.7 967.0V914.0Z" fill="#ececec" stroke="#000"/><path d="M892.7 914.0V967.0L898.0 965.0V914.0Z" fill="#8a8a8a" stroke="#000"/><path d="M940.5 944.2V995.2L945.7 997.2V944.2Z" fill="#ececec" stroke="#000"/><path d="M945.7 944.2V997.2L951.0 995.2V944.2Z" fill="#8a8a8a" stroke="#000"/><g shape-rendering="auto"><path d="M951.5 202.0L954.8 203.6L954.8 251.0L951.5 250.5Z" fill="url(#pbl)"/><path d="M954.8 203.6L958.4 202.0L958.4 250.5L954.8 251.0Z" fill="url(#pbd)"/><path d="M951.5 202.0L955.4 201.5L958.4 202.0L954.8 203.6Z" fill="#79a8f9"/><path d="M952.0 202.0V250.5 M954.8 203.6V251.0 M957.9 202.0V250.5 M951.5 202.0L954.8 203.6L958.4 202.0" fill="none" stroke="#3a7bf1" stroke-width="1"/><path d="M948.1 200.0L951.1 197.8L958.3 197.8L961.3 200.0L961.3 202.8L954.7 205.8L948.1 202.8Z" fill="#74a6f9" stroke="#3a7bf1" stroke-width="1"/><path d="M955.2 202.2L960.7 200.2L960.7 202.6L955.2 205.2Z" fill="#5583dd"/><g fill="#0a3ac2"><path d="M955.0 185.8L959.3 198.9L950.7 198.9Z"/><path d="M939.2 215.7L952.7 217.4L948.5 225.0Z"/><path d="M939.2 234.3L952.7 232.6L948.5 225.0Z"/><path d="M970.8 215.7L957.3 217.4L961.5 225.0Z"/><path d="M970.8 234.3L957.3 232.6L961.5 225.0Z"/><path d="M955.0 264.0L959.3 250.9L950.7 250.9Z"/></g><path d="M952.5 214.5V235.5H954.8V214.5Z" fill="#86b1f8" opacity="0.55"/><path d="M954.8 214.5V235.5H957.4V214.5Z" fill="#5d80c9" opacity="0.55"/><path d="M993.0 224.9L999.8 226.9L999.8 276.0L993.0 275.4Z" fill="url(#pbl)"/><path d="M999.8 226.9L1002.5 224.9L1002.5 275.4L999.8 276.0Z" fill="url(#pbd)"/><path d="M993.0 224.9L998.1 224.2L1002.5 224.9L999.8 226.9Z" fill="#79a8f9"/><path d="M993.5 224.9V275.4 M999.8 226.9V276.0 M1002.0 224.9V275.4 M993.0 224.9L999.8 226.9L1002.5 224.9" fill="none" stroke="#3a7bf1" stroke-width="1"/><path d="M993.0 224.2H1005.4V227.3H999.8Z" fill="#74a6f9" stroke="#3a7bf1"/><g fill="#0a3ac2"><path d="M998.8 211.3L1003.0 224.4L994.5 224.4Z"/><path d="M983.0 241.2L996.5 242.9L992.2 250.5Z"/><path d="M983.0 259.8L996.5 258.1L992.2 250.5Z"/><path d="M1014.5 241.2L1001.0 242.9L1005.2 250.5Z"/><path d="M1014.5 259.8L1001.0 258.1L1005.2 250.5Z"/><path d="M998.8 289.5L1003.0 276.4L994.5 276.4Z"/></g><path d="M994.0 240.0V261.0H999.8V240.0Z" fill="#86b1f8" opacity="0.55"/><path d="M999.8 240.0V261.0H1001.5V240.0Z" fill="#5d80c9" opacity="0.55"/><path d="M877.1 245.0L880.3 247.0L880.3 294.0L877.1 293.4Z" fill="url(#pbl)"/><path d="M880.3 247.0L886.8 245.1L886.8 293.4L880.3 294.0Z" fill="url(#pbd)"/><path d="M877.1 245.0L882.3 244.3L886.8 245.1L880.3 247.0Z" fill="#79a8f9"/><path d="M877.6 245.0V293.4 M880.3 247.0V294.0 M886.3 245.1V293.4 M877.1 245.0L880.3 247.0L886.8 245.1" fill="none" stroke="#3a7bf1" stroke-width="1"/><path d="M874.3 243.7L877.3 241.5L883.9 241.5L886.9 243.7L886.9 246.5L880.6 249.5L874.3 246.5Z" fill="#74a6f9" stroke="#3a7bf1" stroke-width="1"/><path d="M881.1 245.9L886.3 243.9L886.3 246.3L881.1 248.9Z" fill="#5583dd"/><g fill="#0a3ac2"><path d="M881.3 228.3L885.6 241.4L877.0 241.4Z"/><path d="M865.5 258.2L879.0 259.9L874.8 267.5Z"/><path d="M865.5 276.8L879.0 275.1L874.8 267.5Z"/><path d="M897.1 258.2L883.6 259.9L887.8 267.5Z"/><path d="M897.1 276.8L883.6 275.1L887.8 267.5Z"/><path d="M881.3 306.5L885.6 293.4L877.0 293.4Z"/></g><path d="M878.1 257.0V278.0H880.3V257.0Z" fill="#86b1f8" opacity="0.55"/><path d="M880.3 257.0V278.0H885.8V257.0Z" fill="#5d80c9" opacity="0.55"/><path d="M1060.2 263.7L1067.0 265.7L1067.0 314.8L1060.2 314.2Z" fill="url(#pbl)"/><path d="M1067.0 265.7L1069.8 263.8L1069.8 314.2L1067.0 314.8Z" fill="url(#pbd)"/><path d="M1060.2 263.7L1065.4 263.1L1069.8 263.8L1067.0 265.7Z" fill="#79a8f9"/><path d="M1060.7 263.7V314.2 M1067.0 265.7V314.8 M1069.3 263.8V314.2 M1060.2 263.7L1067.0 265.7L1069.8 263.8" fill="none" stroke="#3a7bf1" stroke-width="1"/><path d="M1060.2 263.0H1072.6V266.1H1067.0Z" fill="#74a6f9" stroke="#3a7bf1"/><g fill="#0a3ac2"><path d="M1066.0 250.1L1070.3 263.2L1061.7 263.2Z"/><path d="M1050.2 280.0L1063.7 281.7L1059.5 289.3Z"/><path d="M1050.2 298.6L1063.7 296.9L1059.5 289.3Z"/><path d="M1081.8 280.0L1068.3 281.7L1072.5 289.3Z"/><path d="M1081.8 298.6L1068.3 296.9L1072.5 289.3Z"/><path d="M1066.0 328.3L1070.3 315.2L1061.7 315.2Z"/></g><path d="M1061.2 278.8V299.8H1067.0V278.8Z" fill="#86b1f8" opacity="0.55"/><path d="M1067.0 278.8V299.8H1068.8V278.8Z" fill="#5d80c9" opacity="0.55"/><path d="M919.8 266.4L925.8 269.5L925.8 318.3L919.8 317.3Z" fill="url(#pbl)"/><path d="M925.8 269.5L932.2 266.5L932.2 317.3L925.8 318.3Z" fill="url(#pbd)"/><path d="M919.8 266.4L926.4 265.4L932.2 266.5L925.8 269.5Z" fill="#79a8f9"/><path d="M920.2 266.4V317.3 M925.8 269.5V318.3 M931.8 266.5V317.3 M919.8 266.4L925.8 269.5L932.2 266.5" fill="none" stroke="#3a7bf1" stroke-width="1"/><g fill="#0a3ac2"><path d="M926.0 253.5L930.3 266.6L921.7 266.6Z"/><path d="M910.2 283.4L923.7 285.1L919.5 292.7Z"/><path d="M910.2 302.0L923.7 300.3L919.5 292.7Z"/><path d="M941.8 283.4L928.3 285.1L932.5 292.7Z"/><path d="M941.8 302.0L928.3 300.3L932.5 292.7Z"/><path d="M926.0 331.7L930.3 318.6L921.7 318.6Z"/></g><path d="M920.8 282.2V303.2H925.8V282.2Z" fill="#86b1f8" opacity="0.55"/><path d="M925.8 282.2V303.2H931.2V282.2Z" fill="#5d80c9" opacity="0.55"/><path d="M779.6 300.0L782.8 302.0L782.8 349.0L779.6 348.4Z" fill="url(#pbl)"/><path d="M782.8 302.0L789.3 300.1L789.3 348.4L782.8 349.0Z" fill="url(#pbd)"/><path d="M779.6 300.0L784.8 299.4L789.3 300.1L782.8 302.0Z" fill="#79a8f9"/><path d="M780.1 300.0V348.4 M782.8 302.0V349.0 M788.8 300.1V348.4 M779.6 300.0L782.8 302.0L789.3 300.1" fill="none" stroke="#3a7bf1" stroke-width="1"/><path d="M776.8 298.7L779.8 296.5L786.4 296.5L789.4 298.7L789.4 301.5L783.1 304.5L776.8 301.5Z" fill="#74a6f9" stroke="#3a7bf1" stroke-width="1"/><path d="M783.6 300.9L788.8 298.9L788.8 301.3L783.6 303.9Z" fill="#5583dd"/><g fill="#0a3ac2"><path d="M783.8 283.3L788.1 296.4L779.5 296.4Z"/><path d="M768.0 313.2L781.5 314.9L777.3 322.5Z"/><path d="M768.0 331.8L781.5 330.1L777.3 322.5Z"/><path d="M799.6 313.2L786.1 314.9L790.3 322.5Z"/><path d="M799.6 331.8L786.1 330.1L790.3 322.5Z"/><path d="M783.8 361.5L788.1 348.4L779.5 348.4Z"/></g><path d="M780.6 312.0V333.0H782.8V312.0Z" fill="#86b1f8" opacity="0.55"/><path d="M782.8 312.0V333.0H788.3V312.0Z" fill="#5d80c9" opacity="0.55"/><path d="M1129.2 303.6L1136.0 305.6L1136.0 354.7L1129.2 354.1Z" fill="url(#pbl)"/><path d="M1136.0 305.6L1138.8 303.6L1138.8 354.1L1136.0 354.7Z" fill="url(#pbd)"/><path d="M1129.2 303.6L1134.4 302.9L1138.8 303.6L1136.0 305.6Z" fill="#79a8f9"/><path d="M1129.7 303.6V354.1 M1136.0 305.6V354.7 M1138.3 303.6V354.1 M1129.2 303.6L1136.0 305.6L1138.8 303.6" fill="none" stroke="#3a7bf1" stroke-width="1"/><path d="M1129.2 302.9H1141.6V306.0H1136.0Z" fill="#74a6f9" stroke="#3a7bf1"/><g fill="#0a3ac2"><path d="M1135.0 290.0L1139.3 303.1L1130.7 303.1Z"/><path d="M1119.2 319.9L1132.7 321.6L1128.5 329.2Z"/><path d="M1119.2 338.5L1132.7 336.8L1128.5 329.2Z"/><path d="M1150.8 319.9L1137.3 321.6L1141.5 329.2Z"/><path d="M1150.8 338.5L1137.3 336.8L1141.5 329.2Z"/><path d="M1135.0 368.2L1139.3 355.1L1130.7 355.1Z"/></g><path d="M1130.2 318.7V339.7H1136.0V318.7Z" fill="#86b1f8" opacity="0.55"/><path d="M1136.0 318.7V339.7H1137.8V318.7Z" fill="#5d80c9" opacity="0.55"/><path d="M987.0 305.2L992.8 308.2L992.8 357.1L987.0 356.1Z" fill="url(#pbl)"/><path d="M992.8 308.2L999.0 305.3L999.0 356.1L992.8 357.1Z" fill="url(#pbd)"/><path d="M987.0 305.2L993.4 304.2L999.0 305.3L992.8 308.2Z" fill="#79a8f9"/><path d="M987.5 305.2V356.1 M992.8 308.2V357.1 M998.5 305.3V356.1 M987.0 305.2L992.8 308.2L999.0 305.3" fill="none" stroke="#3a7bf1" stroke-width="1"/><g fill="#0a3ac2"><path d="M993.0 292.3L997.3 305.4L988.7 305.4Z"/><path d="M977.2 322.2L990.7 323.9L986.5 331.5Z"/><path d="M977.2 340.8L990.7 339.1L986.5 331.5Z"/><path d="M1008.8 322.2L995.3 323.9L999.5 331.5Z"/><path d="M1008.8 340.8L995.3 339.1L999.5 331.5Z"/><path d="M993.0 370.5L997.3 357.4L988.7 357.4Z"/></g><path d="M988.0 321.0V342.0H992.8V321.0Z" fill="#86b1f8" opacity="0.55"/><path d="M992.8 321.0V342.0H998.0V321.0Z" fill="#5d80c9" opacity="0.55"/><path d="M975.0 311.7L980.8 314.7L980.8 363.6L975.0 362.6Z" fill="url(#pbl)"/><path d="M980.8 314.7L987.0 311.8L987.0 362.6L980.8 363.6Z" fill="url(#pbd)"/><path d="M975.0 311.7L981.4 310.7L987.0 311.8L980.8 314.7Z" fill="#79a8f9"/><path d="M975.5 311.7V362.6 M980.8 314.7V363.6 M986.5 311.8V362.6 M975.0 311.7L980.8 314.7L987.0 311.8" fill="none" stroke="#3a7bf1" stroke-width="1"/><g fill="#0a3ac2"><path d="M981.0 298.8L985.3 311.9L976.7 311.9Z"/><path d="M965.2 328.7L978.7 330.4L974.5 338.0Z"/><path d="M965.2 347.3L978.7 345.6L974.5 338.0Z"/><path d="M996.8 328.7L983.3 330.4L987.5 338.0Z"/><path d="M996.8 347.3L983.3 345.6L987.5 338.0Z"/><path d="M981.0 377.0L985.3 363.9L976.7 363.9Z"/></g><path d="M976.0 327.5V348.5H980.8V327.5Z" fill="#86b1f8" opacity="0.55"/><path d="M980.8 327.5V348.5H986.0V327.5Z" fill="#5d80c9" opacity="0.55"/><path d="M820.5 322.4L827.2 325.9L827.2 374.4L820.5 373.2Z" fill="url(#pbl)"/><path d="M827.2 325.9L834.5 322.5L834.5 373.2L827.2 374.4Z" fill="url(#pbd)"/><path d="M820.5 322.4L827.9 321.3L834.5 322.5L827.2 325.9Z" fill="#79a8f9"/><path d="M821.0 322.4V373.2 M827.2 325.9V374.4 M834.0 322.5V373.2 M820.5 322.4L827.2 325.9L834.5 322.5" fill="none" stroke="#3a7bf1" stroke-width="1"/><g fill="#0a3ac2"><path d="M827.5 309.6L831.8 322.7L823.2 322.7Z"/><path d="M811.7 339.4L825.2 341.1L821.0 348.8Z"/><path d="M811.7 358.1L825.2 356.4L821.0 348.8Z"/><path d="M843.3 339.4L829.8 341.1L834.0 348.8Z"/><path d="M843.3 358.1L829.8 356.4L834.0 348.8Z"/><path d="M827.5 387.8L831.8 374.6L823.2 374.6Z"/></g><path d="M821.5 338.2V359.2H827.2V338.2Z" fill="#86b1f8" opacity="0.55"/><path d="M827.2 338.2V359.2H833.5V338.2Z" fill="#5d80c9" opacity="0.55"/><path d="M695.8 348.8L699.0 350.8L699.0 397.8L695.8 397.2Z" fill="url(#pbl)"/><path d="M699.0 350.8L705.5 348.9L705.5 397.2L699.0 397.8Z" fill="url(#pbd)"/><path d="M695.8 348.8L701.0 348.2L705.5 348.9L699.0 350.8Z" fill="#79a8f9"/><path d="M696.3 348.8V397.2 M699.0 350.8V397.8 M705.0 348.9V397.2 M695.8 348.8L699.0 350.8L705.5 348.9" fill="none" stroke="#3a7bf1" stroke-width="1"/><path d="M693.0 347.5L696.0 345.3L702.6 345.3L705.6 347.5L705.6 350.3L699.3 353.3L693.0 350.3Z" fill="#74a6f9" stroke="#3a7bf1" stroke-width="1"/><path d="M699.8 349.7L705.0 347.7L705.0 350.1L699.8 352.7Z" fill="#5583dd"/><g fill="#0a3ac2"><path d="M700.0 332.1L704.3 345.2L695.7 345.2Z"/><path d="M684.2 362.0L697.7 363.7L693.5 371.3Z"/><path d="M684.2 380.6L697.7 378.9L693.5 371.3Z"/><path d="M715.8 362.0L702.3 363.7L706.5 371.3Z"/><path d="M715.8 380.6L702.3 378.9L706.5 371.3Z"/><path d="M700.0 410.3L704.3 397.2L695.7 397.2Z"/></g><path d="M696.8 360.8V381.8H699.0V360.8Z" fill="#86b1f8" opacity="0.55"/><path d="M699.0 360.8V381.8H704.5V360.8Z" fill="#5d80c9" opacity="0.55"/><path d="M1207.2 348.1L1214.0 350.1L1214.0 399.2L1207.2 398.6Z" fill="url(#pbl)"/><path d="M1214.0 350.1L1216.8 348.2L1216.8 398.6L1214.0 399.2Z" fill="url(#pbd)"/><path d="M1207.2 348.1L1212.4 347.5L1216.8 348.2L1214.0 350.1Z" fill="#79a8f9"/><path d="M1207.7 348.1V398.6 M1214.0 350.1V399.2 M1216.3 348.2V398.6 M1207.2 348.1L1214.0 350.1L1216.8 348.2" fill="none" stroke="#3a7bf1" stroke-width="1"/><path d="M1207.2 347.4H1219.6V350.6H1214.0Z" fill="#74a6f9" stroke="#3a7bf1"/><g fill="#0a3ac2"><path d="M1213.0 334.6L1217.3 347.7L1208.7 347.7Z"/><path d="M1197.2 364.4L1210.7 366.1L1206.5 373.8Z"/><path d="M1197.2 383.1L1210.7 381.4L1206.5 373.8Z"/><path d="M1228.8 364.4L1215.3 366.1L1219.5 373.8Z"/><path d="M1228.8 383.1L1215.3 381.4L1219.5 373.8Z"/><path d="M1213.0 412.8L1217.3 399.6L1208.7 399.6Z"/></g><path d="M1208.2 363.2V384.2H1214.0V363.2Z" fill="#86b1f8" opacity="0.55"/><path d="M1214.0 363.2V384.2H1215.8V363.2Z" fill="#5d80c9" opacity="0.55"/><path d="M1043.0 352.3L1049.7 355.8L1049.7 404.2L1043.0 403.1Z" fill="url(#pbl)"/><path d="M1049.7 355.8L1057.0 352.4L1057.0 403.1L1049.7 404.2Z" fill="url(#pbd)"/><path d="M1043.0 352.3L1050.4 351.2L1057.0 352.4L1049.7 355.8Z" fill="#79a8f9"/><path d="M1043.5 352.3V403.1 M1049.7 355.8V404.2 M1056.5 352.4V403.1 M1043.0 352.3L1049.7 355.8L1057.0 352.4" fill="none" stroke="#3a7bf1" stroke-width="1"/><g fill="#0a3ac2"><path d="M1050.0 339.4L1054.3 352.5L1045.7 352.5Z"/><path d="M1034.2 369.3L1047.7 371.0L1043.5 378.6Z"/><path d="M1034.2 387.9L1047.7 386.2L1043.5 378.6Z"/><path d="M1065.8 369.3L1052.3 371.0L1056.5 378.6Z"/><path d="M1065.8 387.9L1052.3 386.2L1056.5 378.6Z"/><path d="M1050.0 417.6L1054.3 404.5L1045.7 404.5Z"/></g><path d="M1044.0 368.1V389.1H1049.7V368.1Z" fill="#86b1f8" opacity="0.55"/><path d="M1049.7 368.1V389.1H1056.0V368.1Z" fill="#5d80c9" opacity="0.55"/><path d="M888.2 361.2L894.7 364.6L894.7 413.1L888.2 412.0Z" fill="url(#pbl)"/><path d="M894.7 364.6L901.8 361.3L901.8 412.0L894.7 413.1Z" fill="url(#pbd)"/><path d="M888.2 361.2L895.4 360.1L901.8 361.3L894.7 364.6Z" fill="#79a8f9"/><path d="M888.8 361.2V412.0 M894.7 364.6V413.1 M901.2 361.3V412.0 M888.2 361.2L894.7 364.6L901.8 361.3" fill="none" stroke="#3a7bf1" stroke-width="1"/><g fill="#0a3ac2"><path d="M895.0 348.3L899.3 361.4L890.7 361.4Z"/><path d="M879.2 378.2L892.7 379.9L888.5 387.5Z"/><path d="M879.2 396.8L892.7 395.1L888.5 387.5Z"/><path d="M910.8 378.2L897.3 379.9L901.5 387.5Z"/><path d="M910.8 396.8L897.3 395.1L901.5 387.5Z"/><path d="M895.0 426.5L899.3 413.4L890.7 413.4Z"/></g><path d="M889.2 377.0V398.0H894.7V377.0Z" fill="#86b1f8" opacity="0.55"/><path d="M894.7 377.0V398.0H900.8V377.0Z" fill="#5d80c9" opacity="0.55"/><path d="M645.8 377.5L649.0 379.5L649.0 426.5L645.8 425.9Z" fill="url(#pbl)"/><path d="M649.0 379.5L655.5 377.6L655.5 425.9L649.0 426.5Z" fill="url(#pbd)"/><path d="M645.8 377.5L651.0 376.9L655.5 377.6L649.0 379.5Z" fill="#79a8f9"/><path d="M646.3 377.5V425.9 M649.0 379.5V426.5 M655.0 377.6V425.9 M645.8 377.5L649.0 379.5L655.5 377.6" fill="none" stroke="#3a7bf1" stroke-width="1"/><path d="M643.0 376.2L646.0 374.0L652.6 374.0L655.6 376.2L655.6 379.0L649.3 382.0L643.0 379.0Z" fill="#74a6f9" stroke="#3a7bf1" stroke-width="1"/><path d="M649.8 378.4L655.0 376.4L655.0 378.8L649.8 381.4Z" fill="#5583dd"/><g fill="#0a3ac2"><path d="M650.0 360.8L654.3 373.9L645.7 373.9Z"/><path d="M634.2 390.7L647.7 392.4L643.5 400.0Z"/><path d="M634.2 409.3L647.7 407.6L643.5 400.0Z"/><path d="M665.8 390.7L652.3 392.4L656.5 400.0Z"/><path d="M665.8 409.3L652.3 407.6L656.5 400.0Z"/><path d="M650.0 439.0L654.3 425.9L645.7 425.9Z"/></g><path d="M646.8 389.5V410.5H649.0V389.5Z" fill="#86b1f8" opacity="0.55"/><path d="M649.0 389.5V410.5H654.5V389.5Z" fill="#5d80c9" opacity="0.55"/><path d="M710.8 383.7L718.4 387.7L718.4 435.6L710.8 434.3Z" fill="url(#pbl)"/><path d="M718.4 387.7L726.8 383.8L726.8 434.3L718.4 435.6Z" fill="url(#pbd)"/><path d="M710.8 383.7L719.1 382.4L726.8 383.8L718.4 387.7Z" fill="#79a8f9"/><path d="M711.2 383.7V434.3 M718.4 387.7V435.6 M726.2 383.8V434.3 M710.8 383.7L718.4 387.7L726.8 383.8" fill="none" stroke="#3a7bf1" stroke-width="1"/><g fill="#0a3ac2"><path d="M718.8 370.8L723.0 383.9L714.5 383.9Z"/><path d="M703.0 400.7L716.5 402.4L712.2 410.0Z"/><path d="M703.0 419.3L716.5 417.6L712.2 410.0Z"/><path d="M734.5 400.7L721.0 402.4L725.2 410.0Z"/><path d="M734.5 419.3L721.0 417.6L725.2 410.0Z"/><path d="M718.8 449.0L723.0 435.9L714.5 435.9Z"/></g><path d="M711.8 399.5V420.5H718.4V399.5Z" fill="#86b1f8" opacity="0.55"/><path d="M718.4 399.5V420.5H725.8V399.5Z" fill="#5d80c9" opacity="0.55"/><path d="M1284.7 393.7L1291.5 395.7L1291.5 444.8L1284.7 444.2Z" fill="url(#pbl)"/><path d="M1291.5 395.7L1294.3 393.8L1294.3 444.2L1291.5 444.8Z" fill="url(#pbd)"/><path d="M1284.7 393.7L1289.9 393.1L1294.3 393.8L1291.5 395.7Z" fill="#79a8f9"/><path d="M1285.2 393.7V444.2 M1291.5 395.7V444.8 M1293.8 393.8V444.2 M1284.7 393.7L1291.5 395.7L1294.3 393.8" fill="none" stroke="#3a7bf1" stroke-width="1"/><path d="M1284.7 393.0H1297.1V396.1H1291.5Z" fill="#74a6f9" stroke="#3a7bf1"/><g fill="#0a3ac2"><path d="M1290.5 380.1L1294.8 393.2L1286.2 393.2Z"/><path d="M1274.7 410.0L1288.2 411.7L1284.0 419.3Z"/><path d="M1274.7 428.6L1288.2 426.9L1284.0 419.3Z"/><path d="M1306.3 410.0L1292.8 411.7L1297.0 419.3Z"/><path d="M1306.3 428.6L1292.8 426.9L1297.0 419.3Z"/><path d="M1290.5 458.3L1294.8 445.2L1286.2 445.2Z"/></g><path d="M1285.7 408.8V429.8H1291.5V408.8Z" fill="#86b1f8" opacity="0.55"/><path d="M1291.5 408.8V429.8H1293.3V408.8Z" fill="#5d80c9" opacity="0.55"/><path d="M1120.2 396.7L1127.0 400.2L1127.0 448.6L1120.2 447.5Z" fill="url(#pbl)"/><path d="M1127.0 400.2L1134.2 396.8L1134.2 447.5L1127.0 448.6Z" fill="url(#pbd)"/><path d="M1120.2 396.7L1127.7 395.6L1134.2 396.8L1127.0 400.2Z" fill="#79a8f9"/><path d="M1120.8 396.7V447.5 M1127.0 400.2V448.6 M1133.8 396.8V447.5 M1120.2 396.7L1127.0 400.2L1134.2 396.8" fill="none" stroke="#3a7bf1" stroke-width="1"/><g fill="#0a3ac2"><path d="M1127.2 383.8L1131.5 396.9L1123.0 396.9Z"/><path d="M1111.5 413.7L1125.0 415.4L1120.8 423.0Z"/><path d="M1111.5 432.3L1125.0 430.6L1120.8 423.0Z"/><path d="M1143.0 413.7L1129.5 415.4L1133.8 423.0Z"/><path d="M1143.0 432.3L1129.5 430.6L1133.8 423.0Z"/><path d="M1127.2 462.0L1131.5 448.9L1123.0 448.9Z"/></g><path d="M1121.2 412.5V433.5H1127.0V412.5Z" fill="#86b1f8" opacity="0.55"/><path d="M1127.0 412.5V433.5H1133.2V412.5Z" fill="#5d80c9" opacity="0.55"/><path d="M957.2 402.0L964.0 405.5L964.0 453.9L957.2 452.8Z" fill="url(#pbl)"/><path d="M964.0 405.5L971.2 402.1L971.2 452.8L964.0 453.9Z" fill="url(#pbd)"/><path d="M957.2 402.0L964.6 400.9L971.2 402.1L964.0 405.5Z" fill="#79a8f9"/><path d="M957.8 402.0V452.8 M964.0 405.5V453.9 M970.8 402.1V452.8 M957.2 402.0L964.0 405.5L971.2 402.1" fill="none" stroke="#3a7bf1" stroke-width="1"/><g fill="#0a3ac2"><path d="M964.2 389.1L968.5 402.2L960.0 402.2Z"/><path d="M948.5 419.0L962.0 420.7L957.8 428.3Z"/><path d="M948.5 437.6L962.0 435.9L957.8 428.3Z"/><path d="M980.0 419.0L966.5 420.7L970.8 428.3Z"/><path d="M980.0 437.6L966.5 435.9L970.8 428.3Z"/><path d="M964.2 467.3L968.5 454.2L960.0 454.2Z"/></g><path d="M958.2 417.8V438.8H964.0V417.8Z" fill="#86b1f8" opacity="0.55"/><path d="M964.0 417.8V438.8H970.2V417.8Z" fill="#5d80c9" opacity="0.55"/><path d="M1336.5 422.4L1343.2 424.4L1343.2 473.5L1336.5 472.9Z" fill="url(#pbl)"/><path d="M1343.2 424.4L1346.0 422.4L1346.0 472.9L1343.2 473.5Z" fill="url(#pbd)"/><path d="M1336.5 422.4L1341.7 421.8L1346.0 422.4L1343.2 424.4Z" fill="#79a8f9"/><path d="M1337.0 422.4V472.9 M1343.2 424.4V473.5 M1345.5 422.4V472.9 M1336.5 422.4L1343.2 424.4L1346.0 422.4" fill="none" stroke="#3a7bf1" stroke-width="1"/><path d="M1336.5 421.7H1348.8V424.8H1343.2Z" fill="#74a6f9" stroke="#3a7bf1"/><g fill="#0a3ac2"><path d="M1342.2 408.8L1346.5 421.9L1338.0 421.9Z"/><path d="M1326.5 438.7L1340.0 440.4L1335.8 448.0Z"/><path d="M1326.5 457.3L1340.0 455.6L1335.8 448.0Z"/><path d="M1358.0 438.7L1344.5 440.4L1348.8 448.0Z"/><path d="M1358.0 457.3L1344.5 455.6L1348.8 448.0Z"/><path d="M1342.2 487.0L1346.5 473.9L1338.0 473.9Z"/></g><path d="M1337.5 437.5V458.5H1343.2V437.5Z" fill="#86b1f8" opacity="0.55"/><path d="M1343.2 437.5V458.5H1345.0V437.5Z" fill="#5d80c9" opacity="0.55"/><path d="M559.6 424.4L562.6 422.2L569.4 422.2L572.4 424.4L572.4 427.2L566.0 430.2L559.6 427.2Z" fill="#74a6f9" stroke="#3a7bf1" stroke-width="1"/><path d="M566.5 426.6L571.8 424.6L571.8 427.0L566.5 429.6Z" fill="#5583dd"/><g fill="#0a3ac2"><path d="M566.0 409.8L570.3 422.9L561.7 422.9Z"/><path d="M550.2 439.7L563.7 441.4L559.5 449.0Z"/><path d="M550.2 458.3L563.7 456.6L559.5 449.0Z"/><path d="M581.8 439.7L568.3 441.4L572.5 449.0Z"/><path d="M581.8 458.3L568.3 456.6L572.5 449.0Z"/><path d="M566.0 488.8L570.3 475.7L561.7 475.7Z"/></g><path d="M794.0 433.7L801.7 437.7L801.7 485.6L794.0 484.3Z" fill="url(#pbl)"/><path d="M801.7 437.7L810.0 433.8L810.0 484.3L801.7 485.6Z" fill="url(#pbd)"/><path d="M794.0 433.7L802.4 432.4L810.0 433.8L801.7 437.7Z" fill="#79a8f9"/><path d="M794.5 433.7V484.3 M801.7 437.7V485.6 M809.5 433.8V484.3 M794.0 433.7L801.7 437.7L810.0 433.8" fill="none" stroke="#3a7bf1" stroke-width="1"/><g fill="#0a3ac2"><path d="M802.0 420.8L806.3 433.9L797.7 433.9Z"/><path d="M786.2 450.7L799.7 452.4L795.5 460.0Z"/><path d="M786.2 469.3L799.7 467.6L795.5 460.0Z"/><path d="M817.8 450.7L804.3 452.4L808.5 460.0Z"/><path d="M817.8 469.3L804.3 467.6L808.5 460.0Z"/><path d="M802.0 499.0L806.3 485.9L797.7 485.9Z"/></g><path d="M795.0 449.5V470.5H801.7V449.5Z" fill="#86b1f8" opacity="0.55"/><path d="M801.7 449.5V470.5H809.0V449.5Z" fill="#5d80c9" opacity="0.55"/><path d="M1023.0 439.3L1029.7 442.8L1029.7 491.2L1023.0 490.1Z" fill="url(#pbl)"/><path d="M1029.7 442.8L1037.0 439.4L1037.0 490.1L1029.7 491.2Z" fill="url(#pbd)"/><path d="M1023.0 439.3L1030.4 438.2L1037.0 439.4L1029.7 442.8Z" fill="#79a8f9"/><path d="M1023.5 439.3V490.1 M1029.7 442.8V491.2 M1036.5 439.4V490.1 M1023.0 439.3L1029.7 442.8L1037.0 439.4" fill="none" stroke="#3a7bf1" stroke-width="1"/><g fill="#0a3ac2"><path d="M1030.0 426.4L1034.3 439.5L1025.7 439.5Z"/><path d="M1014.2 456.3L1027.7 458.0L1023.5 465.6Z"/><path d="M1014.2 474.9L1027.7 473.2L1023.5 465.6Z"/><path d="M1045.8 456.3L1032.3 458.0L1036.5 465.6Z"/><path d="M1045.8 474.9L1032.3 473.2L1036.5 465.6Z"/><path d="M1030.0 504.6L1034.3 491.5L1025.7 491.5Z"/></g><path d="M1024.0 455.1V476.1H1029.7V455.1Z" fill="#86b1f8" opacity="0.55"/><path d="M1029.7 455.1V476.1H1036.0V455.1Z" fill="#5d80c9" opacity="0.55"/><path d="M1198.0 442.2L1204.7 445.7L1204.7 494.1L1198.0 493.0Z" fill="url(#pbl)"/><path d="M1204.7 445.7L1212.0 442.3L1212.0 493.0L1204.7 494.1Z" fill="url(#pbd)"/><path d="M1198.0 442.2L1205.4 441.1L1212.0 442.3L1204.7 445.7Z" fill="#79a8f9"/><path d="M1198.5 442.2V493.0 M1204.7 445.7V494.1 M1211.5 442.3V493.0 M1198.0 442.2L1204.7 445.7L1212.0 442.3" fill="none" stroke="#3a7bf1" stroke-width="1"/><g fill="#0a3ac2"><path d="M1205.0 429.3L1209.3 442.4L1200.7 442.4Z"/><path d="M1189.2 459.2L1202.7 460.9L1198.5 468.5Z"/><path d="M1189.2 477.8L1202.7 476.1L1198.5 468.5Z"/><path d="M1220.8 459.2L1207.3 460.9L1211.5 468.5Z"/><path d="M1220.8 477.8L1207.3 476.1L1211.5 468.5Z"/><path d="M1205.0 507.5L1209.3 494.4L1200.7 494.4Z"/></g><path d="M1199.0 458.0V479.0H1204.7V458.0Z" fill="#86b1f8" opacity="0.55"/><path d="M1204.7 458.0V479.0H1211.0V458.0Z" fill="#5d80c9" opacity="0.55"/><path d="M603.6 450.4L606.6 448.2L613.4 448.2L616.4 450.4L616.4 453.2L610.0 456.2L603.6 453.2Z" fill="#74a6f9" stroke="#3a7bf1" stroke-width="1"/><path d="M610.5 452.6L615.8 450.6L615.8 453.0L610.5 455.6Z" fill="#5583dd"/><g fill="#0a3ac2"><path d="M610.0 435.8L614.3 448.9L605.7 448.9Z"/><path d="M594.2 465.7L607.7 467.4L603.5 475.0Z"/><path d="M594.2 484.3L607.7 482.6L603.5 475.0Z"/><path d="M625.8 465.7L612.3 467.4L616.5 475.0Z"/><path d="M625.8 484.3L612.3 482.6L616.5 475.0Z"/><path d="M610.0 514.8L614.3 501.7L605.7 501.7Z"/></g><path d="M1414.0 467.4L1420.8 469.4L1420.8 518.5L1414.0 517.9Z" fill="url(#pbl)"/><path d="M1420.8 469.4L1423.5 467.4L1423.5 517.9L1420.8 518.5Z" fill="url(#pbd)"/><path d="M1414.0 467.4L1419.2 466.8L1423.5 467.4L1420.8 469.4Z" fill="#79a8f9"/><path d="M1414.5 467.4V517.9 M1420.8 469.4V518.5 M1423.0 467.4V517.9 M1414.0 467.4L1420.8 469.4L1423.5 467.4" fill="none" stroke="#3a7bf1" stroke-width="1"/><path d="M1414.0 466.7H1426.3V469.8H1420.8Z" fill="#74a6f9" stroke="#3a7bf1"/><g fill="#0a3ac2"><path d="M1419.8 453.8L1424.0 466.9L1415.5 466.9Z"/><path d="M1404.0 483.7L1417.5 485.4L1413.2 493.0Z"/><path d="M1404.0 502.3L1417.5 500.6L1413.2 493.0Z"/><path d="M1435.5 483.7L1422.0 485.4L1426.2 493.0Z"/><path d="M1435.5 502.3L1422.0 500.6L1426.2 493.0Z"/><path d="M1419.8 532.0L1424.0 518.9L1415.5 518.9Z"/></g><path d="M1415.0 482.5V503.5H1420.8V482.5Z" fill="#86b1f8" opacity="0.55"/><path d="M1420.8 482.5V503.5H1422.5V482.5Z" fill="#5d80c9" opacity="0.55"/><path d="M1249.2 471.7L1255.7 475.1L1255.7 523.6L1249.2 522.5Z" fill="url(#pbl)"/><path d="M1255.7 475.1L1262.8 471.8L1262.8 522.5L1255.7 523.6Z" fill="url(#pbd)"/><path d="M1249.2 471.7L1256.4 470.6L1262.8 471.8L1255.7 475.1Z" fill="#79a8f9"/><path d="M1249.8 471.7V522.5 M1255.7 475.1V523.6 M1262.2 471.8V522.5 M1249.2 471.7L1255.7 475.1L1262.8 471.8" fill="none" stroke="#3a7bf1" stroke-width="1"/><g fill="#0a3ac2"><path d="M1256.0 458.8L1260.3 471.9L1251.7 471.9Z"/><path d="M1240.2 488.7L1253.7 490.4L1249.5 498.0Z"/><path d="M1240.2 507.3L1253.7 505.6L1249.5 498.0Z"/><path d="M1271.8 488.7L1258.3 490.4L1262.5 498.0Z"/><path d="M1271.8 507.3L1258.3 505.6L1262.5 498.0Z"/><path d="M1256.0 537.0L1260.3 523.9L1251.7 523.9Z"/></g><path d="M1250.2 487.5V508.5H1255.7V487.5Z" fill="#86b1f8" opacity="0.55"/><path d="M1255.7 487.5V508.5H1261.8V487.5Z" fill="#5d80c9" opacity="0.55"/><path d="M1082.0 473.7L1089.0 477.3L1089.0 525.6L1082.0 524.4Z" fill="url(#pbl)"/><path d="M1089.0 477.3L1096.5 473.8L1096.5 524.4L1089.0 525.6Z" fill="url(#pbd)"/><path d="M1082.0 473.7L1089.7 472.5L1096.5 473.8L1089.0 477.3Z" fill="#79a8f9"/><path d="M1082.5 473.7V524.4 M1089.0 477.3V525.6 M1096.0 473.8V524.4 M1082.0 473.7L1089.0 477.3L1096.5 473.8" fill="none" stroke="#3a7bf1" stroke-width="1"/><g fill="#0a3ac2"><path d="M1089.2 460.8L1093.5 473.9L1085.0 473.9Z"/><path d="M1073.5 490.7L1087.0 492.4L1082.8 500.0Z"/><path d="M1073.5 509.3L1087.0 507.6L1082.8 500.0Z"/><path d="M1105.0 490.7L1091.5 492.4L1095.8 500.0Z"/><path d="M1105.0 509.3L1091.5 507.6L1095.8 500.0Z"/><path d="M1089.2 539.0L1093.5 525.9L1085.0 525.9Z"/></g><path d="M1083.0 489.5V510.5H1089.0V489.5Z" fill="#86b1f8" opacity="0.55"/><path d="M1089.0 489.5V510.5H1095.5V489.5Z" fill="#5d80c9" opacity="0.55"/><path d="M687.0 496.0L692.8 499.0L692.8 547.9L687.0 546.9Z" fill="url(#pbl)"/><path d="M692.8 499.0L699.0 496.1L699.0 546.9L692.8 547.9Z" fill="url(#pbd)"/><path d="M687.0 496.0L693.4 495.0L699.0 496.1L692.8 499.0Z" fill="#79a8f9"/><path d="M687.5 496.0V546.9 M692.8 499.0V547.9 M698.5 496.1V546.9 M687.0 496.0L692.8 499.0L699.0 496.1" fill="none" stroke="#3a7bf1" stroke-width="1"/><path d="M686.5 497.0L689.5 494.8L697.5 494.8L700.5 497.0L700.5 499.8L693.5 502.8L686.5 499.8Z" fill="#74a6f9" stroke="#3a7bf1" stroke-width="1"/><path d="M694.0 499.2L699.9 497.2L699.9 499.6L694.0 502.2Z" fill="#5583dd"/><g fill="#0a3ac2"><path d="M693.0 483.1L697.3 496.2L688.7 496.2Z"/><path d="M677.2 513.0L690.7 514.7L686.5 522.3Z"/><path d="M677.2 531.6L690.7 529.9L686.5 522.3Z"/><path d="M708.8 513.0L695.3 514.7L699.5 522.3Z"/><path d="M708.8 531.6L695.3 529.9L699.5 522.3Z"/><path d="M693.0 561.3L697.3 548.2L688.7 548.2Z"/></g><path d="M688.0 511.8V532.8H692.8V511.8Z" fill="#86b1f8" opacity="0.55"/><path d="M692.8 511.8V532.8H698.0V511.8Z" fill="#5d80c9" opacity="0.55"/><path d="M913.5 502.7L920.7 506.4L920.7 554.6L913.5 553.4Z" fill="url(#pbl)"/><path d="M920.7 506.4L928.5 502.8L928.5 553.4L920.7 554.6Z" fill="url(#pbd)"/><path d="M913.5 502.7L921.4 501.5L928.5 502.8L920.7 506.4Z" fill="#79a8f9"/><path d="M914.0 502.7V553.4 M920.7 506.4V554.6 M928.0 502.8V553.4 M913.5 502.7L920.7 506.4L928.5 502.8" fill="none" stroke="#3a7bf1" stroke-width="1"/><g fill="#0a3ac2"><path d="M921.0 489.8L925.3 502.9L916.7 502.9Z"/><path d="M905.2 519.7L918.7 521.4L914.5 529.0Z"/><path d="M905.2 538.3L918.7 536.6L914.5 529.0Z"/><path d="M936.8 519.7L923.3 521.4L927.5 529.0Z"/><path d="M936.8 538.3L923.3 536.6L927.5 529.0Z"/><path d="M921.0 568.0L925.3 554.9L916.7 554.9Z"/></g><path d="M914.5 518.5V539.5H920.7V518.5Z" fill="#86b1f8" opacity="0.55"/><path d="M920.7 518.5V539.5H927.5V518.5Z" fill="#5d80c9" opacity="0.55"/><path d="M1137.8 505.9L1144.7 509.5L1144.7 557.8L1137.8 556.6Z" fill="url(#pbl)"/><path d="M1144.7 509.5L1152.2 506.0L1152.2 556.6L1144.7 557.8Z" fill="url(#pbd)"/><path d="M1137.8 505.9L1145.4 504.7L1152.2 506.0L1144.7 509.5Z" fill="#79a8f9"/><path d="M1138.2 505.9V556.6 M1144.7 509.5V557.8 M1151.8 506.0V556.6 M1137.8 505.9L1144.7 509.5L1152.2 506.0" fill="none" stroke="#3a7bf1" stroke-width="1"/><g fill="#0a3ac2"><path d="M1145.0 493.0L1149.3 506.1L1140.7 506.1Z"/><path d="M1129.2 522.9L1142.7 524.6L1138.5 532.2Z"/><path d="M1129.2 541.5L1142.7 539.8L1138.5 532.2Z"/><path d="M1160.8 522.9L1147.3 524.6L1151.5 532.2Z"/><path d="M1160.8 541.5L1147.3 539.8L1151.5 532.2Z"/><path d="M1145.0 571.2L1149.3 558.1L1140.7 558.1Z"/></g><path d="M1138.8 521.7V542.7H1144.7V521.7Z" fill="#86b1f8" opacity="0.55"/><path d="M1144.7 521.7V542.7H1151.2V521.7Z" fill="#5d80c9" opacity="0.55"/><path d="M1492.0 512.4L1498.8 514.4L1498.8 563.5L1492.0 562.9Z" fill="url(#pbl)"/><path d="M1498.8 514.4L1501.5 512.5L1501.5 562.9L1498.8 563.5Z" fill="url(#pbd)"/><path d="M1492.0 512.4L1497.2 511.8L1501.5 512.5L1498.8 514.4Z" fill="#79a8f9"/><path d="M1492.5 512.4V562.9 M1498.8 514.4V563.5 M1501.0 512.5V562.9 M1492.0 512.4L1498.8 514.4L1501.5 512.5" fill="none" stroke="#3a7bf1" stroke-width="1"/><path d="M1492.0 511.7H1504.3V514.8H1498.8Z" fill="#74a6f9" stroke="#3a7bf1"/><g fill="#0a3ac2"><path d="M1497.8 498.8L1502.0 511.9L1493.5 511.9Z"/><path d="M1482.0 528.7L1495.5 530.4L1491.2 538.0Z"/><path d="M1482.0 547.3L1495.5 545.6L1491.2 538.0Z"/><path d="M1513.5 528.7L1500.0 530.4L1504.2 538.0Z"/><path d="M1513.5 547.3L1500.0 545.6L1504.2 538.0Z"/><path d="M1497.8 577.0L1502.0 563.9L1493.5 563.9Z"/></g><path d="M1493.0 527.5V548.5H1498.8V527.5Z" fill="#86b1f8" opacity="0.55"/><path d="M1498.8 527.5V548.5H1500.5V527.5Z" fill="#5d80c9" opacity="0.55"/><path d="M1327.5 516.4L1334.0 519.8L1334.0 568.3L1327.5 567.2Z" fill="url(#pbl)"/><path d="M1334.0 519.8L1341.0 516.5L1341.0 567.2L1334.0 568.3Z" fill="url(#pbd)"/><path d="M1327.5 516.4L1334.7 515.3L1341.0 516.5L1334.0 519.8Z" fill="#79a8f9"/><path d="M1328.0 516.4V567.2 M1334.0 519.8V568.3 M1340.5 516.5V567.2 M1327.5 516.4L1334.0 519.8L1341.0 516.5" fill="none" stroke="#3a7bf1" stroke-width="1"/><g fill="#0a3ac2"><path d="M1334.2 503.5L1338.5 516.6L1330.0 516.6Z"/><path d="M1318.5 533.4L1332.0 535.1L1327.8 542.7Z"/><path d="M1318.5 552.0L1332.0 550.3L1327.8 542.7Z"/><path d="M1350.0 533.4L1336.5 535.1L1340.8 542.7Z"/><path d="M1350.0 552.0L1336.5 550.3L1340.8 542.7Z"/><path d="M1334.2 581.7L1338.5 568.6L1330.0 568.6Z"/></g><path d="M1328.5 532.2V553.2H1334.0V532.2Z" fill="#86b1f8" opacity="0.55"/><path d="M1334.0 532.2V553.2H1340.0V532.2Z" fill="#5d80c9" opacity="0.55"/><path d="M973.0 536.7L980.2 540.5L980.2 588.6L973.0 587.4Z" fill="url(#pbl)"/><path d="M980.2 540.5L988.0 536.8L988.0 587.4L980.2 588.6Z" fill="url(#pbd)"/><path d="M973.0 536.7L980.9 535.5L988.0 536.8L980.2 540.5Z" fill="#79a8f9"/><path d="M973.5 536.7V587.4 M980.2 540.5V588.6 M987.5 536.8V587.4 M973.0 536.7L980.2 540.5L988.0 536.8" fill="none" stroke="#3a7bf1" stroke-width="1"/><g fill="#0a3ac2"><path d="M980.5 523.8L984.8 536.9L976.2 536.9Z"/><path d="M964.7 553.7L978.2 555.4L974.0 563.0Z"/><path d="M964.7 572.3L978.2 570.6L974.0 563.0Z"/><path d="M996.3 553.7L982.8 555.4L987.0 563.0Z"/><path d="M996.3 572.3L982.8 570.6L987.0 563.0Z"/><path d="M980.5 602.0L984.8 588.9L976.2 588.9Z"/></g><path d="M974.0 552.5V573.5H980.2V552.5Z" fill="#86b1f8" opacity="0.55"/><path d="M980.2 552.5V573.5H987.0V552.5Z" fill="#5d80c9" opacity="0.55"/><path d="M1193.8 538.7L1200.7 542.3L1200.7 590.6L1193.8 589.4Z" fill="url(#pbl)"/><path d="M1200.7 542.3L1208.2 538.8L1208.2 589.4L1200.7 590.6Z" fill="url(#pbd)"/><path d="M1193.8 538.7L1201.4 537.5L1208.2 538.8L1200.7 542.3Z" fill="#79a8f9"/><path d="M1194.2 538.7V589.4 M1200.7 542.3V590.6 M1207.8 538.8V589.4 M1193.8 538.7L1200.7 542.3L1208.2 538.8" fill="none" stroke="#3a7bf1" stroke-width="1"/><g fill="#0a3ac2"><path d="M1201.0 525.8L1205.3 538.9L1196.7 538.9Z"/><path d="M1185.2 555.7L1198.7 557.4L1194.5 565.0Z"/><path d="M1185.2 574.3L1198.7 572.6L1194.5 565.0Z"/><path d="M1216.8 555.7L1203.3 557.4L1207.5 565.0Z"/><path d="M1216.8 574.3L1203.3 572.6L1207.5 565.0Z"/><path d="M1201.0 604.0L1205.3 590.9L1196.7 590.9Z"/></g><path d="M1194.8 554.5V575.5H1200.7V554.5Z" fill="#86b1f8" opacity="0.55"/><path d="M1200.7 554.5V575.5H1207.2V554.5Z" fill="#5d80c9" opacity="0.55"/><path d="M601.5 545.7L607.3 548.7L607.3 597.6L601.5 596.6Z" fill="url(#pbl)"/><path d="M607.3 548.7L613.5 545.8L613.5 596.6L607.3 597.6Z" fill="url(#pbd)"/><path d="M601.5 545.7L607.9 544.7L613.5 545.8L607.3 548.7Z" fill="#79a8f9"/><path d="M602.0 545.7V596.6 M607.3 548.7V597.6 M613.0 545.8V596.6 M601.5 545.7L607.3 548.7L613.5 545.8" fill="none" stroke="#3a7bf1" stroke-width="1"/><g fill="#0a3ac2"><path d="M607.5 532.8L611.8 545.9L603.2 545.9Z"/><path d="M591.7 562.7L605.2 564.4L601.0 572.0Z"/><path d="M591.7 581.3L605.2 579.6L601.0 572.0Z"/><path d="M623.3 562.7L609.8 564.4L614.0 572.0Z"/><path d="M623.3 581.3L609.8 579.6L614.0 572.0Z"/><path d="M607.5 611.0L611.8 597.9L603.2 597.9Z"/></g><path d="M602.5 561.5V582.5H607.3V561.5Z" fill="#86b1f8" opacity="0.55"/><path d="M607.3 561.5V582.5H612.5V561.5Z" fill="#5d80c9" opacity="0.55"/><path d="M1561.0 552.4L1567.8 554.4L1567.8 603.5L1561.0 602.9Z" fill="url(#pbl)"/><path d="M1567.8 554.4L1570.5 552.5L1570.5 602.9L1567.8 603.5Z" fill="url(#pbd)"/><path d="M1561.0 552.4L1566.2 551.8L1570.5 552.5L1567.8 554.4Z" fill="#79a8f9"/><path d="M1561.5 552.4V602.9 M1567.8 554.4V603.5 M1570.0 552.5V602.9 M1561.0 552.4L1567.8 554.4L1570.5 552.5" fill="none" stroke="#3a7bf1" stroke-width="1"/><path d="M1561.0 551.7H1573.3V554.8H1567.8Z" fill="#74a6f9" stroke="#3a7bf1"/><g fill="#0a3ac2"><path d="M1566.8 538.8L1571.0 551.9L1562.5 551.9Z"/><path d="M1551.0 568.7L1564.5 570.4L1560.2 578.0Z"/><path d="M1551.0 587.3L1564.5 585.6L1560.2 578.0Z"/><path d="M1582.5 568.7L1569.0 570.4L1573.2 578.0Z"/><path d="M1582.5 587.3L1569.0 585.6L1573.2 578.0Z"/><path d="M1566.8 617.0L1571.0 603.9L1562.5 603.9Z"/></g><path d="M1562.0 567.5V588.5H1567.8V567.5Z" fill="#86b1f8" opacity="0.55"/><path d="M1567.8 567.5V588.5H1569.5V567.5Z" fill="#5d80c9" opacity="0.55"/><path d="M1405.0 561.5L1411.5 564.9L1411.5 613.4L1405.0 612.3Z" fill="url(#pbl)"/><path d="M1411.5 564.9L1418.5 561.6L1418.5 612.3L1411.5 613.4Z" fill="url(#pbd)"/><path d="M1405.0 561.5L1412.2 560.4L1418.5 561.6L1411.5 564.9Z" fill="#79a8f9"/><path d="M1405.5 561.5V612.3 M1411.5 564.9V613.4 M1418.0 561.6V612.3 M1405.0 561.5L1411.5 564.9L1418.5 561.6" fill="none" stroke="#3a7bf1" stroke-width="1"/><g fill="#0a3ac2"><path d="M1411.8 548.6L1416.0 561.7L1407.5 561.7Z"/><path d="M1396.0 578.5L1409.5 580.2L1405.2 587.8Z"/><path d="M1396.0 597.1L1409.5 595.4L1405.2 587.8Z"/><path d="M1427.5 578.5L1414.0 580.2L1418.2 587.8Z"/><path d="M1427.5 597.1L1414.0 595.4L1418.2 587.8Z"/><path d="M1411.8 626.8L1416.0 613.7L1407.5 613.7Z"/></g><path d="M1406.0 577.3V598.3H1411.5V577.3Z" fill="#86b1f8" opacity="0.55"/><path d="M1411.5 577.3V598.3H1417.5V577.3Z" fill="#5d80c9" opacity="0.55"/><path d="M805.5 565.4L812.7 569.2L812.7 617.3L805.5 616.1Z" fill="url(#pbl)"/><path d="M812.7 569.2L820.5 565.5L820.5 616.1L812.7 617.3Z" fill="url(#pbd)"/><path d="M805.5 565.4L813.4 564.2L820.5 565.5L812.7 569.2Z" fill="#79a8f9"/><path d="M806.0 565.4V616.1 M812.7 569.2V617.3 M820.0 565.5V616.1 M805.5 565.4L812.7 569.2L820.5 565.5" fill="none" stroke="#3a7bf1" stroke-width="1"/><g fill="#0a3ac2"><path d="M813.0 552.5L817.3 565.6L808.7 565.6Z"/><path d="M797.2 582.4L810.7 584.1L806.5 591.7Z"/><path d="M797.2 601.0L810.7 599.3L806.5 591.7Z"/><path d="M828.8 582.4L815.3 584.1L819.5 591.7Z"/><path d="M828.8 601.0L815.3 599.3L819.5 591.7Z"/><path d="M813.0 630.7L817.3 617.6L808.7 617.6Z"/></g><path d="M806.5 581.2V602.2H812.7V581.2Z" fill="#86b1f8" opacity="0.55"/><path d="M812.7 581.2V602.2H819.5V581.2Z" fill="#5d80c9" opacity="0.55"/><path d="M1252.8 572.7L1259.7 576.3L1259.7 624.6L1252.8 623.4Z" fill="url(#pbl)"/><path d="M1259.7 576.3L1267.2 572.8L1267.2 623.4L1259.7 624.6Z" fill="url(#pbd)"/><path d="M1252.8 572.7L1260.4 571.5L1267.2 572.8L1259.7 576.3Z" fill="#79a8f9"/><path d="M1253.2 572.7V623.4 M1259.7 576.3V624.6 M1266.8 572.8V623.4 M1252.8 572.7L1259.7 576.3L1267.2 572.8" fill="none" stroke="#3a7bf1" stroke-width="1"/><g fill="#0a3ac2"><path d="M1260.0 559.8L1264.3 572.9L1255.7 572.9Z"/><path d="M1244.2 589.7L1257.7 591.4L1253.5 599.0Z"/><path d="M1244.2 608.3L1257.7 606.6L1253.5 599.0Z"/><path d="M1275.8 589.7L1262.3 591.4L1266.5 599.0Z"/><path d="M1275.8 608.3L1262.3 606.6L1266.5 599.0Z"/><path d="M1260.0 638.0L1264.3 624.9L1255.7 624.9Z"/></g><path d="M1253.8 588.5V609.5H1259.7V588.5Z" fill="#86b1f8" opacity="0.55"/><path d="M1259.7 588.5V609.5H1266.2V588.5Z" fill="#5d80c9" opacity="0.55"/><path d="M1628.2 591.1L1635.0 593.1L1635.0 642.2L1628.2 641.6Z" fill="url(#pbl)"/><path d="M1635.0 593.1L1637.8 591.2L1637.8 641.6L1635.0 642.2Z" fill="url(#pbd)"/><path d="M1628.2 591.1L1633.4 590.5L1637.8 591.2L1635.0 593.1Z" fill="#79a8f9"/><path d="M1628.7 591.1V641.6 M1635.0 593.1V642.2 M1637.3 591.2V641.6 M1628.2 591.1L1635.0 593.1L1637.8 591.2" fill="none" stroke="#3a7bf1" stroke-width="1"/><path d="M1628.2 590.5H1640.6V593.5H1635.0Z" fill="#74a6f9" stroke="#3a7bf1"/><g fill="#0a3ac2"><path d="M1634.0 577.6L1638.3 590.6L1629.7 590.6Z"/><path d="M1618.2 607.5L1631.7 609.1L1627.5 616.8Z"/><path d="M1618.2 626.0L1631.7 624.4L1627.5 616.8Z"/><path d="M1649.8 607.5L1636.3 609.1L1640.5 616.8Z"/><path d="M1649.8 626.0L1636.3 624.4L1640.5 616.8Z"/><path d="M1634.0 655.8L1638.3 642.7L1629.7 642.7Z"/></g><path d="M1629.2 606.2V627.2H1635.0V606.2Z" fill="#86b1f8" opacity="0.55"/><path d="M1635.0 606.2V627.2H1636.8V606.2Z" fill="#5d80c9" opacity="0.55"/><path d="M1486.8 594.3L1492.5 597.3L1492.5 646.2L1486.8 645.2Z" fill="url(#pbl)"/><path d="M1492.5 597.3L1498.8 594.4L1498.8 645.2L1492.5 646.2Z" fill="url(#pbd)"/><path d="M1486.8 594.3L1493.2 593.3L1498.8 594.4L1492.5 597.3Z" fill="#79a8f9"/><path d="M1487.2 594.3V645.2 M1492.5 597.3V646.2 M1498.2 594.4V645.2 M1486.8 594.3L1492.5 597.3L1498.8 594.4" fill="none" stroke="#3a7bf1" stroke-width="1"/><g fill="#0a3ac2"><path d="M1492.8 581.4L1497.0 594.5L1488.5 594.5Z"/><path d="M1477.0 611.3L1490.5 613.0L1486.2 620.6Z"/><path d="M1477.0 629.9L1490.5 628.2L1486.2 620.6Z"/><path d="M1508.5 611.3L1495.0 613.0L1499.2 620.6Z"/><path d="M1508.5 629.9L1495.0 628.2L1499.2 620.6Z"/><path d="M1492.8 659.6L1497.0 646.5L1488.5 646.5Z"/></g><path d="M1487.8 610.1V631.1H1492.5V610.1Z" fill="#86b1f8" opacity="0.55"/><path d="M1492.5 610.1V631.1H1497.8V610.1Z" fill="#5d80c9" opacity="0.55"/><path d="M515.6 596.9L518.6 594.7L525.4 594.7L528.4 596.9L528.4 599.7L522.0 602.7L515.6 599.7Z" fill="#74a6f9" stroke="#3a7bf1" stroke-width="1"/><path d="M522.5 599.1L527.8 597.1L527.8 599.5L522.5 602.1Z" fill="#5583dd"/><g fill="#0a3ac2"><path d="M522.0 582.3L526.3 595.4L517.7 595.4Z"/><path d="M506.2 612.2L519.7 613.9L515.5 621.5Z"/><path d="M506.2 630.8L519.7 629.1L515.5 621.5Z"/><path d="M537.8 612.2L524.3 613.9L528.5 621.5Z"/><path d="M537.8 630.8L524.3 629.1L528.5 621.5Z"/><path d="M522.0 661.3L526.3 648.2L517.7 648.2Z"/></g><path d="M864.2 599.3L871.7 603.2L871.7 651.2L864.2 649.9Z" fill="url(#pbl)"/><path d="M871.7 603.2L879.8 599.4L879.8 649.9L871.7 651.2Z" fill="url(#pbd)"/><path d="M864.2 599.3L872.4 598.0L879.8 599.4L871.7 603.2Z" fill="#79a8f9"/><path d="M864.8 599.3V649.9 M871.7 603.2V651.2 M879.2 599.4V649.9 M864.2 599.3L871.7 603.2L879.8 599.4" fill="none" stroke="#3a7bf1" stroke-width="1"/><g fill="#0a3ac2"><path d="M872.0 586.4L876.3 599.5L867.7 599.5Z"/><path d="M856.2 616.3L869.7 618.0L865.5 625.6Z"/><path d="M856.2 634.9L869.7 633.2L865.5 625.6Z"/><path d="M887.8 616.3L874.3 618.0L878.5 625.6Z"/><path d="M887.8 634.9L874.3 633.2L878.5 625.6Z"/><path d="M872.0 664.6L876.3 651.5L867.7 651.5Z"/></g><path d="M865.2 615.1V636.1H871.7V615.1Z" fill="#86b1f8" opacity="0.55"/><path d="M871.7 615.1V636.1H878.8V615.1Z" fill="#5d80c9" opacity="0.55"/><path d="M1475.0 600.9L1480.8 603.9L1480.8 652.8L1475.0 651.8Z" fill="url(#pbl)"/><path d="M1480.8 603.9L1487.0 601.0L1487.0 651.8L1480.8 652.8Z" fill="url(#pbd)"/><path d="M1475.0 600.9L1481.4 599.9L1487.0 601.0L1480.8 603.9Z" fill="#79a8f9"/><path d="M1475.5 600.9V651.8 M1480.8 603.9V652.8 M1486.5 601.0V651.8 M1475.0 600.9L1480.8 603.9L1487.0 601.0" fill="none" stroke="#3a7bf1" stroke-width="1"/><g fill="#0a3ac2"><path d="M1481.0 588.0L1485.3 601.1L1476.7 601.1Z"/><path d="M1465.2 617.9L1478.7 619.6L1474.5 627.2Z"/><path d="M1465.2 636.5L1478.7 634.8L1474.5 627.2Z"/><path d="M1496.8 617.9L1483.3 619.6L1487.5 627.2Z"/><path d="M1496.8 636.5L1483.3 634.8L1487.5 627.2Z"/><path d="M1481.0 666.2L1485.3 653.1L1476.7 653.1Z"/></g><path d="M1476.0 616.7V637.7H1480.8V616.7Z" fill="#86b1f8" opacity="0.55"/><path d="M1480.8 616.7V637.7H1486.0V616.7Z" fill="#5d80c9" opacity="0.55"/><path d="M1084.8 601.0L1092.0 604.8L1092.0 652.9L1084.8 651.7Z" fill="url(#pbl)"/><path d="M1092.0 604.8L1099.8 601.1L1099.8 651.7L1092.0 652.9Z" fill="url(#pbd)"/><path d="M1084.8 601.0L1092.7 599.8L1099.8 601.1L1092.0 604.8Z" fill="#79a8f9"/><path d="M1085.2 601.0V651.7 M1092.0 604.8V652.9 M1099.2 601.1V651.7 M1084.8 601.0L1092.0 604.8L1099.8 601.1" fill="none" stroke="#3a7bf1" stroke-width="1"/><g fill="#0a3ac2"><path d="M1092.2 588.1L1096.5 601.2L1088.0 601.2Z"/><path d="M1076.5 618.0L1090.0 619.7L1085.8 627.3Z"/><path d="M1076.5 636.6L1090.0 634.9L1085.8 627.3Z"/><path d="M1108.0 618.0L1094.5 619.7L1098.8 627.3Z"/><path d="M1108.0 636.6L1094.5 634.9L1098.8 627.3Z"/><path d="M1092.2 666.3L1096.5 653.2L1088.0 653.2Z"/></g><path d="M1085.8 616.8V637.8H1092.0V616.8Z" fill="#86b1f8" opacity="0.55"/><path d="M1092.0 616.8V637.8H1098.8V616.8Z" fill="#5d80c9" opacity="0.55"/><path d="M1318.8 610.7L1325.7 614.3L1325.7 662.6L1318.8 661.4Z" fill="url(#pbl)"/><path d="M1325.7 614.3L1333.2 610.8L1333.2 661.4L1325.7 662.6Z" fill="url(#pbd)"/><path d="M1318.8 610.7L1326.4 609.5L1333.2 610.8L1325.7 614.3Z" fill="#79a8f9"/><path d="M1319.2 610.7V661.4 M1325.7 614.3V662.6 M1332.8 610.8V661.4 M1318.8 610.7L1325.7 614.3L1333.2 610.8" fill="none" stroke="#3a7bf1" stroke-width="1"/><g fill="#0a3ac2"><path d="M1326.0 597.8L1330.3 610.9L1321.7 610.9Z"/><path d="M1310.2 627.7L1323.7 629.4L1319.5 637.0Z"/><path d="M1310.2 646.3L1323.7 644.6L1319.5 637.0Z"/><path d="M1341.8 627.7L1328.3 629.4L1332.5 637.0Z"/><path d="M1341.8 646.3L1328.3 644.6L1332.5 637.0Z"/><path d="M1326.0 676.0L1330.3 662.9L1321.7 662.9Z"/></g><path d="M1319.8 626.5V647.5H1325.7V626.5Z" fill="#86b1f8" opacity="0.55"/><path d="M1325.7 626.5V647.5H1332.2V626.5Z" fill="#5d80c9" opacity="0.55"/><path d="M719.2 614.5L726.7 618.3L726.7 666.4L719.2 665.1Z" fill="url(#pbl)"/><path d="M726.7 618.3L734.8 614.5L734.8 665.1L726.7 666.4Z" fill="url(#pbd)"/><path d="M719.2 614.5L727.4 613.2L734.8 614.5L726.7 618.3Z" fill="#79a8f9"/><path d="M719.8 614.5V665.1 M726.7 618.3V666.4 M734.2 614.5V665.1 M719.2 614.5L726.7 618.3L734.8 614.5" fill="none" stroke="#3a7bf1" stroke-width="1"/><g fill="#0a3ac2"><path d="M727.0 601.6L731.3 614.6L722.7 614.6Z"/><path d="M711.2 631.5L724.7 633.1L720.5 640.8Z"/><path d="M711.2 650.0L724.7 648.4L720.5 640.8Z"/><path d="M742.8 631.5L729.3 633.1L733.5 640.8Z"/><path d="M742.8 650.0L729.3 648.4L733.5 640.8Z"/><path d="M727.0 679.8L731.3 666.7L722.7 666.7Z"/></g><path d="M720.2 630.2V651.2H726.7V630.2Z" fill="#86b1f8" opacity="0.55"/><path d="M726.7 630.2V651.2H733.8V630.2Z" fill="#5d80c9" opacity="0.55"/><path d="M1671.6 617.4L1674.6 615.2L1681.4 615.2L1684.4 617.4L1684.4 620.2L1678.0 623.2L1671.6 620.2Z" fill="#74a6f9" stroke="#3a7bf1" stroke-width="1"/><path d="M1678.5 619.6L1683.8 617.6L1683.8 620.0L1678.5 622.6Z" fill="#5583dd"/><g fill="#0a3ac2"><path d="M1678.0 602.8L1682.3 615.9L1673.7 615.9Z"/><path d="M1662.2 632.7L1675.7 634.4L1671.5 642.0Z"/><path d="M1662.2 651.3L1675.7 649.6L1671.5 642.0Z"/><path d="M1693.8 632.7L1680.3 634.4L1684.5 642.0Z"/><path d="M1693.8 651.3L1680.3 649.6L1684.5 642.0Z"/><path d="M1678.0 681.8L1682.3 668.7L1673.7 668.7Z"/></g><path d="M471.4 620.7L476.6 623.1L476.6 674.3L471.4 673.5Z" fill="url(#pbl)"/><path d="M476.6 623.1L482.2 620.8L482.2 673.5L476.6 674.3Z" fill="url(#pbd)"/><path d="M471.4 620.7L477.2 619.9L482.2 620.8L476.6 623.1Z" fill="#79a8f9"/><path d="M471.9 620.7V673.5 M476.6 623.1V674.3 M481.7 620.8V673.5 M471.4 620.7L476.6 623.1L482.2 620.8" fill="none" stroke="#3a7bf1" stroke-width="1"/><g fill="#0a3ac2"><path d="M477.0 607.8L481.3 620.9L472.7 620.9Z"/><path d="M461.2 637.7L474.7 639.4L470.5 647.0Z"/><path d="M461.2 656.3L474.7 654.6L470.5 647.0Z"/><path d="M492.8 637.7L479.3 639.4L483.5 647.0Z"/><path d="M492.8 656.3L479.3 654.6L483.5 647.0Z"/><path d="M477.0 686.0L481.3 672.9L472.7 672.9Z"/></g><path d="M472.4 636.5V657.5H476.6V636.5Z" fill="#86b1f8" opacity="0.55"/><path d="M476.6 636.5V657.5H481.2V636.5Z" fill="#5d80c9" opacity="0.55"/><path d="M568.6 627.4L571.6 625.2L578.4 625.2L581.4 627.4L581.4 630.2L575.0 633.2L568.6 630.2Z" fill="#74a6f9" stroke="#3a7bf1" stroke-width="1"/><path d="M575.5 629.6L580.8 627.6L580.8 630.0L575.5 632.6Z" fill="#5583dd"/><g fill="#0a3ac2"><path d="M575.0 612.8L579.3 625.9L570.7 625.9Z"/><path d="M559.2 642.7L572.7 644.4L568.5 652.0Z"/><path d="M559.2 661.3L572.7 659.6L568.5 652.0Z"/><path d="M590.8 642.7L577.3 644.4L581.5 652.0Z"/><path d="M590.8 661.3L577.3 659.6L581.5 652.0Z"/><path d="M575.0 691.8L579.3 678.7L570.7 678.7Z"/></g><path d="M1553.0 632.9L1559.5 636.3L1559.5 684.8L1553.0 683.7Z" fill="url(#pbl)"/><path d="M1559.5 636.3L1566.5 633.0L1566.5 683.7L1559.5 684.8Z" fill="url(#pbd)"/><path d="M1553.0 632.9L1560.2 631.8L1566.5 633.0L1559.5 636.3Z" fill="#79a8f9"/><path d="M1553.5 632.9V683.7 M1559.5 636.3V684.8 M1566.0 633.0V683.7 M1553.0 632.9L1559.5 636.3L1566.5 633.0" fill="none" stroke="#3a7bf1" stroke-width="1"/><g fill="#0a3ac2"><path d="M1559.8 620.0L1564.0 633.1L1555.5 633.1Z"/><path d="M1544.0 649.9L1557.5 651.6L1553.2 659.2Z"/><path d="M1544.0 668.5L1557.5 666.8L1553.2 659.2Z"/><path d="M1575.5 649.9L1562.0 651.6L1566.2 659.2Z"/><path d="M1575.5 668.5L1562.0 666.8L1566.2 659.2Z"/><path d="M1559.8 698.2L1564.0 685.1L1555.5 685.1Z"/></g><path d="M1554.0 648.7V669.7H1559.5V648.7Z" fill="#86b1f8" opacity="0.55"/><path d="M1559.5 648.7V669.7H1565.5V648.7Z" fill="#5d80c9" opacity="0.55"/><path d="M1143.2 635.1L1150.7 639.0L1150.7 687.0L1143.2 685.7Z" fill="url(#pbl)"/><path d="M1150.7 639.0L1158.8 635.2L1158.8 685.7L1150.7 687.0Z" fill="url(#pbd)"/><path d="M1143.2 635.1L1151.4 633.8L1158.8 635.2L1150.7 639.0Z" fill="#79a8f9"/><path d="M1143.8 635.1V685.7 M1150.7 639.0V687.0 M1158.2 635.2V685.7 M1143.2 635.1L1150.7 639.0L1158.8 635.2" fill="none" stroke="#3a7bf1" stroke-width="1"/><g fill="#0a3ac2"><path d="M1151.0 622.2L1155.3 635.3L1146.7 635.3Z"/><path d="M1135.2 652.1L1148.7 653.8L1144.5 661.4Z"/><path d="M1135.2 670.7L1148.7 669.0L1144.5 661.4Z"/><path d="M1166.8 652.1L1153.3 653.8L1157.5 661.4Z"/><path d="M1166.8 670.7L1153.3 669.0L1157.5 661.4Z"/><path d="M1151.0 700.4L1155.3 687.3L1146.7 687.3Z"/></g><path d="M1144.2 650.9V671.9H1150.7V650.9Z" fill="#86b1f8" opacity="0.55"/><path d="M1150.7 650.9V671.9H1157.8V650.9Z" fill="#5d80c9" opacity="0.55"/><path d="M1388.0 650.7L1395.0 654.3L1395.0 702.6L1388.0 701.4Z" fill="url(#pbl)"/><path d="M1395.0 654.3L1402.5 650.8L1402.5 701.4L1395.0 702.6Z" fill="url(#pbd)"/><path d="M1388.0 650.7L1395.7 649.5L1402.5 650.8L1395.0 654.3Z" fill="#79a8f9"/><path d="M1388.5 650.7V701.4 M1395.0 654.3V702.6 M1402.0 650.8V701.4 M1388.0 650.7L1395.0 654.3L1402.5 650.8" fill="none" stroke="#3a7bf1" stroke-width="1"/><g fill="#0a3ac2"><path d="M1395.2 637.8L1399.5 650.9L1391.0 650.9Z"/><path d="M1379.5 667.7L1393.0 669.4L1388.8 677.0Z"/><path d="M1379.5 686.3L1393.0 684.6L1388.8 677.0Z"/><path d="M1411.0 667.7L1397.5 669.4L1401.8 677.0Z"/><path d="M1411.0 686.3L1397.5 684.6L1401.8 677.0Z"/><path d="M1395.2 716.0L1399.5 702.9L1391.0 702.9Z"/></g><path d="M1389.0 666.5V687.5H1395.0V666.5Z" fill="#86b1f8" opacity="0.55"/><path d="M1395.0 666.5V687.5H1401.5V666.5Z" fill="#5d80c9" opacity="0.55"/><path d="M524.9 651.7L530.1 654.1L530.1 705.3L524.9 704.5Z" fill="url(#pbl)"/><path d="M530.1 654.1L535.7 651.8L535.7 704.5L530.1 705.3Z" fill="url(#pbd)"/><path d="M524.9 651.7L530.7 650.9L535.7 651.8L530.1 654.1Z" fill="#79a8f9"/><path d="M525.4 651.7V704.5 M530.1 654.1V705.3 M535.2 651.8V704.5 M524.9 651.7L530.1 654.1L535.7 651.8" fill="none" stroke="#3a7bf1" stroke-width="1"/><g fill="#0a3ac2"><path d="M530.5 638.8L534.8 651.9L526.2 651.9Z"/><path d="M514.7 668.7L528.2 670.4L524.0 678.0Z"/><path d="M514.7 687.3L528.2 685.6L524.0 678.0Z"/><path d="M546.3 668.7L532.8 670.4L537.0 678.0Z"/><path d="M546.3 687.3L532.8 685.6L537.0 678.0Z"/><path d="M530.5 717.0L534.8 703.9L526.2 703.9Z"/></g><path d="M525.9 667.5V688.5H530.1V667.5Z" fill="#86b1f8" opacity="0.55"/><path d="M530.1 667.5V688.5H534.7V667.5Z" fill="#5d80c9" opacity="0.55"/><path d="M1597.6 660.4L1600.6 658.2L1607.4 658.2L1610.4 660.4L1610.4 663.2L1604.0 666.2L1597.6 663.2Z" fill="#74a6f9" stroke="#3a7bf1" stroke-width="1"/><path d="M1604.5 662.6L1609.8 660.6L1609.8 663.0L1604.5 665.6Z" fill="#5583dd"/><g fill="#0a3ac2"><path d="M1604.0 645.8L1608.3 658.9L1599.7 658.9Z"/><path d="M1588.2 675.7L1601.7 677.4L1597.5 685.0Z"/><path d="M1588.2 694.3L1601.7 692.6L1597.5 685.0Z"/><path d="M1619.8 675.7L1606.3 677.4L1610.5 685.0Z"/><path d="M1619.8 694.3L1606.3 692.6L1610.5 685.0Z"/><path d="M1604.0 724.8L1608.3 711.7L1599.7 711.7Z"/></g><path d="M975.8 663.7L983.2 667.6L983.2 715.6L975.8 714.3Z" fill="url(#pbl)"/><path d="M983.2 667.6L991.2 663.8L991.2 714.3L983.2 715.6Z" fill="url(#pbd)"/><path d="M975.8 663.7L983.9 662.4L991.2 663.8L983.2 667.6Z" fill="#79a8f9"/><path d="M976.2 663.7V714.3 M983.2 667.6V715.6 M990.8 663.8V714.3 M975.8 663.7L983.2 667.6L991.2 663.8" fill="none" stroke="#3a7bf1" stroke-width="1"/><g fill="#0a3ac2"><path d="M983.5 650.8L987.8 663.9L979.2 663.9Z"/><path d="M967.7 680.7L981.2 682.4L977.0 690.0Z"/><path d="M967.7 699.3L981.2 697.6L977.0 690.0Z"/><path d="M999.3 680.7L985.8 682.4L990.0 690.0Z"/><path d="M999.3 699.3L985.8 697.6L990.0 690.0Z"/><path d="M983.5 729.0L987.8 715.9L979.2 715.9Z"/></g><path d="M976.8 679.5V700.5H983.2V679.5Z" fill="#86b1f8" opacity="0.55"/><path d="M983.2 679.5V700.5H990.2V679.5Z" fill="#5d80c9" opacity="0.55"/><path d="M634.9 665.9L637.9 663.7L644.6 663.7L647.6 665.9L647.6 668.7L641.2 671.7L634.9 668.7Z" fill="#74a6f9" stroke="#3a7bf1" stroke-width="1"/><path d="M641.8 668.1L647.0 666.1L647.0 668.5L641.8 671.1Z" fill="#5583dd"/><g fill="#0a3ac2"><path d="M641.2 651.3L645.5 664.4L637.0 664.4Z"/><path d="M625.5 681.2L639.0 682.9L634.8 690.5Z"/><path d="M625.5 699.8L639.0 698.1L634.8 690.5Z"/><path d="M657.0 681.2L643.5 682.9L647.8 690.5Z"/><path d="M657.0 699.8L643.5 698.1L647.8 690.5Z"/><path d="M641.2 730.3L645.5 717.2L637.0 717.2Z"/></g><path d="M834.2 681.1L841.5 684.9L841.5 733.0L834.2 731.8Z" fill="url(#pbl)"/><path d="M841.5 684.9L849.2 681.2L849.2 731.8L841.5 733.0Z" fill="url(#pbd)"/><path d="M834.2 681.1L842.1 679.9L849.2 681.2L841.5 684.9Z" fill="#79a8f9"/><path d="M834.8 681.1V731.8 M841.5 684.9V733.0 M848.8 681.2V731.8 M834.2 681.1L841.5 684.9L849.2 681.2" fill="none" stroke="#3a7bf1" stroke-width="1"/><g fill="#0a3ac2"><path d="M841.8 668.2L846.0 681.3L837.5 681.3Z"/><path d="M826.0 698.1L839.5 699.8L835.2 707.4Z"/><path d="M826.0 716.7L839.5 715.0L835.2 707.4Z"/><path d="M857.5 698.1L844.0 699.8L848.2 707.4Z"/><path d="M857.5 716.7L844.0 715.0L848.2 707.4Z"/><path d="M841.8 746.4L846.0 733.3L837.5 733.3Z"/></g><path d="M835.2 696.9V717.9H841.5V696.9Z" fill="#86b1f8" opacity="0.55"/><path d="M841.5 696.9V717.9H848.2V696.9Z" fill="#5d80c9" opacity="0.55"/><path d="M1454.8 689.0L1461.5 692.5L1461.5 740.9L1454.8 739.8Z" fill="url(#pbl)"/><path d="M1461.5 692.5L1468.8 689.1L1468.8 739.8L1461.5 740.9Z" fill="url(#pbd)"/><path d="M1454.8 689.0L1462.2 687.9L1468.8 689.1L1461.5 692.5Z" fill="#79a8f9"/><path d="M1455.2 689.0V739.8 M1461.5 692.5V740.9 M1468.2 689.1V739.8 M1454.8 689.0L1461.5 692.5L1468.8 689.1" fill="none" stroke="#3a7bf1" stroke-width="1"/><g fill="#0a3ac2"><path d="M1461.8 676.1L1466.0 689.2L1457.5 689.2Z"/><path d="M1446.0 706.0L1459.5 707.7L1455.2 715.3Z"/><path d="M1446.0 724.6L1459.5 722.9L1455.2 715.3Z"/><path d="M1477.5 706.0L1464.0 707.7L1468.2 715.3Z"/><path d="M1477.5 724.6L1464.0 722.9L1468.2 715.3Z"/><path d="M1461.8 754.3L1466.0 741.2L1457.5 741.2Z"/></g><path d="M1455.8 704.8V725.8H1461.5V704.8Z" fill="#86b1f8" opacity="0.55"/><path d="M1461.5 704.8V725.8H1467.8V704.8Z" fill="#5d80c9" opacity="0.55"/><path d="M591.1 689.2L596.4 691.6L596.4 742.8L591.1 742.0Z" fill="url(#pbl)"/><path d="M596.4 691.6L602.0 689.3L602.0 742.0L596.4 742.8Z" fill="url(#pbd)"/><path d="M591.1 689.2L596.9 688.4L602.0 689.3L596.4 691.6Z" fill="#79a8f9"/><path d="M591.6 689.2V742.0 M596.4 691.6V742.8 M601.5 689.3V742.0 M591.1 689.2L596.4 691.6L602.0 689.3" fill="none" stroke="#3a7bf1" stroke-width="1"/><g fill="#0a3ac2"><path d="M596.8 676.3L601.0 689.4L592.5 689.4Z"/><path d="M581.0 706.2L594.5 707.9L590.2 715.5Z"/><path d="M581.0 724.8L594.5 723.1L590.2 715.5Z"/><path d="M612.5 706.2L599.0 707.9L603.2 715.5Z"/><path d="M612.5 724.8L599.0 723.1L603.2 715.5Z"/><path d="M596.8 754.5L601.0 741.4L592.5 741.4Z"/></g><path d="M592.1 705.0V726.0H596.4V705.0Z" fill="#86b1f8" opacity="0.55"/><path d="M596.4 705.0V726.0H601.0V705.0Z" fill="#5d80c9" opacity="0.55"/><path d="M1035.2 698.0L1042.7 701.9L1042.7 749.9L1035.2 748.6Z" fill="url(#pbl)"/><path d="M1042.7 701.9L1050.8 698.1L1050.8 748.6L1042.7 749.9Z" fill="url(#pbd)"/><path d="M1035.2 698.0L1043.4 696.7L1050.8 698.1L1042.7 701.9Z" fill="#79a8f9"/><path d="M1035.8 698.0V748.6 M1042.7 701.9V749.9 M1050.2 698.1V748.6 M1035.2 698.0L1042.7 701.9L1050.8 698.1" fill="none" stroke="#3a7bf1" stroke-width="1"/><g fill="#0a3ac2"><path d="M1043.0 685.1L1047.3 698.2L1038.7 698.2Z"/><path d="M1027.2 715.0L1040.7 716.7L1036.5 724.3Z"/><path d="M1027.2 733.6L1040.7 731.9L1036.5 724.3Z"/><path d="M1058.8 715.0L1045.3 716.7L1049.5 724.3Z"/><path d="M1058.8 733.6L1045.3 731.9L1049.5 724.3Z"/><path d="M1043.0 763.3L1047.3 750.2L1038.7 750.2Z"/></g><path d="M1036.2 713.8V734.8H1042.7V713.8Z" fill="#86b1f8" opacity="0.55"/><path d="M1042.7 713.8V734.8H1049.8V713.8Z" fill="#5d80c9" opacity="0.55"/><path d="M1263.5 704.3L1270.7 708.1L1270.7 756.2L1263.5 755.0Z" fill="url(#pbl)"/><path d="M1270.7 708.1L1278.5 704.4L1278.5 755.0L1270.7 756.2Z" fill="url(#pbd)"/><path d="M1263.5 704.3L1271.4 703.1L1278.5 704.4L1270.7 708.1Z" fill="#79a8f9"/><path d="M1264.0 704.3V755.0 M1270.7 708.1V756.2 M1278.0 704.4V755.0 M1263.5 704.3L1270.7 708.1L1278.5 704.4" fill="none" stroke="#3a7bf1" stroke-width="1"/><g fill="#0a3ac2"><path d="M1271.0 691.4L1275.3 704.5L1266.7 704.5Z"/><path d="M1255.2 721.3L1268.7 723.0L1264.5 730.6Z"/><path d="M1255.2 739.9L1268.7 738.2L1264.5 730.6Z"/><path d="M1286.8 721.3L1273.3 723.0L1277.5 730.6Z"/><path d="M1286.8 739.9L1273.3 738.2L1277.5 730.6Z"/><path d="M1271.0 769.6L1275.3 756.5L1266.7 756.5Z"/></g><path d="M1264.5 720.1V741.1H1270.7V720.1Z" fill="#86b1f8" opacity="0.55"/><path d="M1270.7 720.1V741.1H1277.5V720.1Z" fill="#5d80c9" opacity="0.55"/><path d="M1500.6 716.4L1503.6 714.2L1510.4 714.2L1513.4 716.4L1513.4 719.2L1507.0 722.2L1500.6 719.2Z" fill="#74a6f9" stroke="#3a7bf1" stroke-width="1"/><path d="M1507.5 718.6L1512.8 716.6L1512.8 719.0L1507.5 721.6Z" fill="#5583dd"/><g fill="#0a3ac2"><path d="M1507.0 701.8L1511.3 714.9L1502.7 714.9Z"/><path d="M1491.2 731.7L1504.7 733.4L1500.5 741.0Z"/><path d="M1491.2 750.3L1504.7 748.6L1500.5 741.0Z"/><path d="M1522.8 731.7L1509.3 733.4L1513.5 741.0Z"/><path d="M1522.8 750.3L1509.3 748.6L1513.5 741.0Z"/><path d="M1507.0 780.8L1511.3 767.7L1502.7 767.7Z"/></g><path d="M668.1 734.7L673.4 737.1L673.4 788.3L668.1 787.5Z" fill="url(#pbl)"/><path d="M673.4 737.1L679.0 734.8L679.0 787.5L673.4 788.3Z" fill="url(#pbd)"/><path d="M668.1 734.7L673.9 733.9L679.0 734.8L673.4 737.1Z" fill="#79a8f9"/><path d="M668.6 734.7V787.5 M673.4 737.1V788.3 M678.5 734.8V787.5 M668.1 734.7L673.4 737.1L679.0 734.8" fill="none" stroke="#3a7bf1" stroke-width="1"/><g fill="#0a3ac2"><path d="M673.8 721.8L678.0 734.9L669.5 734.9Z"/><path d="M658.0 751.7L671.5 753.4L667.2 761.0Z"/><path d="M658.0 770.3L671.5 768.6L667.2 761.0Z"/><path d="M689.5 751.7L676.0 753.4L680.2 761.0Z"/><path d="M689.5 770.3L676.0 768.6L680.2 761.0Z"/><path d="M673.8 800.0L678.0 786.9L669.5 786.9Z"/></g><path d="M669.1 750.5V771.5H673.4V750.5Z" fill="#86b1f8" opacity="0.55"/><path d="M673.4 750.5V771.5H678.0V750.5Z" fill="#5d80c9" opacity="0.55"/><path d="M949.5 747.7L956.9 751.6L956.9 799.6L949.5 798.3Z" fill="url(#pbl)"/><path d="M956.9 751.6L965.0 747.8L965.0 798.3L956.9 799.6Z" fill="url(#pbd)"/><path d="M949.5 747.7L957.6 746.4L965.0 747.8L956.9 751.6Z" fill="#79a8f9"/><path d="M950.0 747.7V798.3 M956.9 751.6V799.6 M964.5 747.8V798.3 M949.5 747.7L956.9 751.6L965.0 747.8" fill="none" stroke="#3a7bf1" stroke-width="1"/><g fill="#0a3ac2"><path d="M957.2 734.8L961.5 747.9L953.0 747.9Z"/><path d="M941.5 764.7L955.0 766.4L950.8 774.0Z"/><path d="M941.5 783.3L955.0 781.6L950.8 774.0Z"/><path d="M973.0 764.7L959.5 766.4L963.8 774.0Z"/><path d="M973.0 783.3L959.5 781.6L963.8 774.0Z"/><path d="M957.2 813.0L961.5 799.9L953.0 799.9Z"/></g><path d="M950.5 763.5V784.5H956.9V763.5Z" fill="#86b1f8" opacity="0.55"/><path d="M956.9 763.5V784.5H964.0V763.5Z" fill="#5d80c9" opacity="0.55"/><path d="M1348.8 752.4L1353.5 754.9L1353.5 804.3L1348.8 803.5Z" fill="url(#pbl)"/><path d="M1353.5 754.9L1358.8 752.5L1358.8 803.5L1353.5 804.3Z" fill="url(#pbd)"/><path d="M1348.8 752.4L1354.2 751.6L1358.8 752.5L1353.5 754.9Z" fill="#79a8f9"/><path d="M1349.2 752.4V803.5 M1353.5 754.9V804.3 M1358.2 752.5V803.5 M1348.8 752.4L1353.5 754.9L1358.8 752.5" fill="none" stroke="#3a7bf1" stroke-width="1"/><g fill="#0a3ac2"><path d="M1353.8 739.5L1358.0 752.6L1349.5 752.6Z"/><path d="M1338.0 769.4L1351.5 771.1L1347.2 778.7Z"/><path d="M1338.0 788.0L1351.5 786.3L1347.2 778.7Z"/><path d="M1369.5 769.4L1356.0 771.1L1360.2 778.7Z"/><path d="M1369.5 788.0L1356.0 786.3L1360.2 778.7Z"/><path d="M1353.8 817.7L1358.0 804.6L1349.5 804.6Z"/></g><path d="M1349.8 768.2V789.2H1353.5V768.2Z" fill="#86b1f8" opacity="0.55"/><path d="M1353.5 768.2V789.2H1357.8V768.2Z" fill="#5d80c9" opacity="0.55"/><path d="M788.1 754.4L791.1 752.2L797.9 752.2L800.9 754.4L800.9 757.2L794.5 760.2L788.1 757.2Z" fill="#74a6f9" stroke="#3a7bf1" stroke-width="1"/><path d="M795.0 756.6L800.3 754.6L800.3 757.0L795.0 759.6Z" fill="#5583dd"/><g fill="#0a3ac2"><path d="M794.5 739.8L798.8 752.9L790.2 752.9Z"/><path d="M778.7 769.7L792.2 771.4L788.0 779.0Z"/><path d="M778.7 788.3L792.2 786.6L788.0 779.0Z"/><path d="M810.3 769.7L796.8 771.4L801.0 779.0Z"/><path d="M810.3 788.3L796.8 786.6L801.0 779.0Z"/><path d="M794.5 818.8L798.8 805.7L790.2 805.7Z"/></g><path d="M1416.6 764.9L1419.6 762.7L1426.4 762.7L1429.4 764.9L1429.4 767.7L1423.0 770.7L1416.6 767.7Z" fill="#74a6f9" stroke="#3a7bf1" stroke-width="1"/><path d="M1423.5 767.1L1428.8 765.1L1428.8 767.5L1423.5 770.1Z" fill="#5583dd"/><g fill="#0a3ac2"><path d="M1423.0 750.3L1427.3 763.4L1418.7 763.4Z"/><path d="M1407.2 780.2L1420.7 781.9L1416.5 789.5Z"/><path d="M1407.2 798.8L1420.7 797.1L1416.5 789.5Z"/><path d="M1438.8 780.2L1425.3 781.9L1429.5 789.5Z"/><path d="M1438.8 798.8L1425.3 797.1L1429.5 789.5Z"/><path d="M1423.0 829.3L1427.3 816.2L1418.7 816.2Z"/></g><path d="M1155.8 768.2L1158.8 766.0L1165.7 766.0L1168.7 768.2L1168.7 771.0L1162.2 774.0L1155.8 771.0Z" fill="#74a6f9" stroke="#3a7bf1" stroke-width="1"/><path d="M1162.8 770.4L1168.1 768.4L1168.1 770.8L1162.8 773.4Z" fill="#5583dd"/><g fill="#0a3ac2"><path d="M1162.2 753.6L1166.5 766.6L1158.0 766.6Z"/><path d="M1146.5 783.5L1160.0 785.1L1155.8 792.8Z"/><path d="M1146.5 802.0L1160.0 800.4L1155.8 792.8Z"/><path d="M1178.0 783.5L1164.5 785.1L1168.8 792.8Z"/><path d="M1178.0 802.0L1164.5 800.4L1168.8 792.8Z"/><path d="M1162.2 832.5L1166.5 819.5L1158.0 819.5Z"/></g><path d="M744.4 778.2L749.6 780.6L749.6 831.8L744.4 831.0Z" fill="url(#pbl)"/><path d="M749.6 780.6L755.2 778.3L755.2 831.0L749.6 831.8Z" fill="url(#pbd)"/><path d="M744.4 778.2L750.2 777.4L755.2 778.3L749.6 780.6Z" fill="#79a8f9"/><path d="M744.9 778.2V831.0 M749.6 780.6V831.8 M754.7 778.3V831.0 M744.4 778.2L749.6 780.6L755.2 778.3" fill="none" stroke="#3a7bf1" stroke-width="1"/><g fill="#0a3ac2"><path d="M750.0 765.3L754.3 778.4L745.7 778.4Z"/><path d="M734.2 795.2L747.7 796.9L743.5 804.5Z"/><path d="M734.2 813.8L747.7 812.1L743.5 804.5Z"/><path d="M765.8 795.2L752.3 796.9L756.5 804.5Z"/><path d="M765.8 813.8L752.3 812.1L756.5 804.5Z"/><path d="M750.0 843.5L754.3 830.4L745.7 830.4Z"/></g><path d="M745.4 794.0V815.0H749.6V794.0Z" fill="#86b1f8" opacity="0.55"/><path d="M749.6 794.0V815.0H754.2V794.0Z" fill="#5d80c9" opacity="0.55"/><path d="M1366.6 793.2L1369.6 791.0L1376.4 791.0L1379.4 793.2L1379.4 796.0L1373.0 799.0L1366.6 796.0Z" fill="#74a6f9" stroke="#3a7bf1" stroke-width="1"/><path d="M1373.5 795.4L1378.8 793.4L1378.8 795.8L1373.5 798.4Z" fill="#5583dd"/><g fill="#0a3ac2"><path d="M1373.0 778.6L1377.3 791.6L1368.7 791.6Z"/><path d="M1357.2 808.5L1370.7 810.1L1366.5 817.8Z"/><path d="M1357.2 827.0L1370.7 825.4L1366.5 817.8Z"/><path d="M1388.8 808.5L1375.3 810.1L1379.5 817.8Z"/><path d="M1388.8 827.0L1375.3 825.4L1379.5 817.8Z"/><path d="M1373.0 857.5L1377.3 844.5L1368.7 844.5Z"/></g><path d="M865.4 798.4L868.4 796.2L875.1 796.2L878.1 798.4L878.1 801.2L871.8 804.2L865.4 801.2Z" fill="#74a6f9" stroke="#3a7bf1" stroke-width="1"/><path d="M872.2 800.6L877.5 798.6L877.5 801.0L872.2 803.6Z" fill="#5583dd"/><g fill="#0a3ac2"><path d="M871.8 783.8L876.0 796.9L867.5 796.9Z"/><path d="M856.0 813.7L869.5 815.4L865.2 823.0Z"/><path d="M856.0 832.3L869.5 830.6L865.2 823.0Z"/><path d="M887.5 813.7L874.0 815.4L878.2 823.0Z"/><path d="M887.5 832.3L874.0 830.6L878.2 823.0Z"/><path d="M871.8 862.8L876.0 849.7L867.5 849.7Z"/></g><path d="M1238.6 816.4L1241.6 814.2L1248.4 814.2L1251.4 816.4L1251.4 819.2L1245.0 822.2L1238.6 819.2Z" fill="#74a6f9" stroke="#3a7bf1" stroke-width="1"/><path d="M1245.5 818.6L1250.8 816.6L1250.8 819.0L1245.5 821.6Z" fill="#5583dd"/><g fill="#0a3ac2"><path d="M1245.0 801.8L1249.3 814.9L1240.7 814.9Z"/><path d="M1229.2 831.7L1242.7 833.4L1238.5 841.0Z"/><path d="M1229.2 850.3L1242.7 848.6L1238.5 841.0Z"/><path d="M1260.8 831.7L1247.3 833.4L1251.5 841.0Z"/><path d="M1260.8 850.3L1247.3 848.6L1251.5 841.0Z"/><path d="M1245.0 880.8L1249.3 867.7L1240.7 867.7Z"/></g><path d="M1070.3 818.4L1073.3 816.2L1080.2 816.2L1083.2 818.4L1083.2 821.2L1076.8 824.2L1070.3 821.2Z" fill="#74a6f9" stroke="#3a7bf1" stroke-width="1"/><path d="M1077.2 820.6L1082.6 818.6L1082.6 821.0L1077.2 823.6Z" fill="#5583dd"/><g fill="#0a3ac2"><path d="M1076.8 803.8L1081.0 816.9L1072.5 816.9Z"/><path d="M1061.0 833.7L1074.5 835.4L1070.2 843.0Z"/><path d="M1061.0 852.3L1074.5 850.6L1070.2 843.0Z"/><path d="M1092.5 833.7L1079.0 835.4L1083.2 843.0Z"/><path d="M1092.5 852.3L1079.0 850.6L1083.2 843.0Z"/><path d="M1076.8 882.8L1081.0 869.7L1072.5 869.7Z"/></g><path d="M821.1 822.7L826.4 825.1L826.4 876.3L821.1 875.5Z" fill="url(#pbl)"/><path d="M826.4 825.1L832.0 822.8L832.0 875.5L826.4 876.3Z" fill="url(#pbd)"/><path d="M821.1 822.7L826.9 821.9L832.0 822.8L826.4 825.1Z" fill="#79a8f9"/><path d="M821.6 822.7V875.5 M826.4 825.1V876.3 M831.5 822.8V875.5 M821.1 822.7L826.4 825.1L832.0 822.8" fill="none" stroke="#3a7bf1" stroke-width="1"/><g fill="#0a3ac2"><path d="M826.8 809.8L831.0 822.9L822.5 822.9Z"/><path d="M811.0 839.7L824.5 841.4L820.2 849.0Z"/><path d="M811.0 858.3L824.5 856.6L820.2 849.0Z"/><path d="M842.5 839.7L829.0 841.4L833.2 849.0Z"/><path d="M842.5 858.3L829.0 856.6L833.2 849.0Z"/><path d="M826.8 888.0L831.0 874.9L822.5 874.9Z"/></g><path d="M822.1 838.5V859.5H826.4V838.5Z" fill="#86b1f8" opacity="0.55"/><path d="M826.4 838.5V859.5H831.0V838.5Z" fill="#5d80c9" opacity="0.55"/><path d="M931.1 837.4L934.1 835.2L940.9 835.2L943.9 837.4L943.9 840.2L937.5 843.2L931.1 840.2Z" fill="#74a6f9" stroke="#3a7bf1" stroke-width="1"/><path d="M938.0 839.6L943.3 837.6L943.3 840.0L938.0 842.6Z" fill="#5583dd"/><g fill="#0a3ac2"><path d="M937.5 822.8L941.8 835.9L933.2 835.9Z"/><path d="M921.7 852.7L935.2 854.4L931.0 862.0Z"/><path d="M921.7 871.3L935.2 869.6L931.0 862.0Z"/><path d="M953.3 852.7L939.8 854.4L944.0 862.0Z"/><path d="M953.3 871.3L939.8 869.6L944.0 862.0Z"/><path d="M937.5 901.8L941.8 888.7L933.2 888.7Z"/></g><path d="M1282.3 841.9L1285.3 839.7L1292.2 839.7L1295.2 841.9L1295.2 844.7L1288.8 847.7L1282.3 844.7Z" fill="#74a6f9" stroke="#3a7bf1" stroke-width="1"/><path d="M1289.2 844.1L1294.6 842.1L1294.6 844.5L1289.2 847.1Z" fill="#5583dd"/><g fill="#0a3ac2"><path d="M1288.8 827.3L1293.0 840.4L1284.5 840.4Z"/><path d="M1273.0 857.2L1286.5 858.9L1282.2 866.5Z"/><path d="M1273.0 875.8L1286.5 874.1L1282.2 866.5Z"/><path d="M1304.5 857.2L1291.0 858.9L1295.2 866.5Z"/><path d="M1304.5 875.8L1291.0 874.1L1295.2 866.5Z"/><path d="M1288.8 906.3L1293.0 893.2L1284.5 893.2Z"/></g><path d="M887.4 861.2L892.6 863.6L892.6 914.8L887.4 914.0Z" fill="url(#pbl)"/><path d="M892.6 863.6L898.2 861.3L898.2 914.0L892.6 914.8Z" fill="url(#pbd)"/><path d="M887.4 861.2L893.2 860.4L898.2 861.3L892.6 863.6Z" fill="#79a8f9"/><path d="M887.9 861.2V914.0 M892.6 863.6V914.8 M897.7 861.3V914.0 M887.4 861.2L892.6 863.6L898.2 861.3" fill="none" stroke="#3a7bf1" stroke-width="1"/><g fill="#0a3ac2"><path d="M893.0 848.3L897.3 861.4L888.7 861.4Z"/><path d="M877.2 878.2L890.7 879.9L886.5 887.5Z"/><path d="M877.2 896.8L890.7 895.1L886.5 887.5Z"/><path d="M908.8 878.2L895.3 879.9L899.5 887.5Z"/><path d="M908.8 896.8L895.3 895.1L899.5 887.5Z"/><path d="M893.0 926.5L897.3 913.4L888.7 913.4Z"/></g><path d="M888.4 877.0V898.0H892.6V877.0Z" fill="#86b1f8" opacity="0.55"/><path d="M892.6 877.0V898.0H897.2V877.0Z" fill="#5d80c9" opacity="0.55"/><path d="M984.1 867.4L987.1 865.2L993.9 865.2L996.9 867.4L996.9 870.2L990.5 873.2L984.1 870.2Z" fill="#74a6f9" stroke="#3a7bf1" stroke-width="1"/><path d="M991.0 869.6L996.3 867.6L996.3 870.0L991.0 872.6Z" fill="#5583dd"/><g fill="#0a3ac2"><path d="M990.5 852.8L994.8 865.9L986.2 865.9Z"/><path d="M974.7 882.7L988.2 884.4L984.0 892.0Z"/><path d="M974.7 901.3L988.2 899.6L984.0 892.0Z"/><path d="M1006.3 882.7L992.8 884.4L997.0 892.0Z"/><path d="M1006.3 901.3L992.8 899.6L997.0 892.0Z"/><path d="M990.5 931.8L994.8 918.7L986.2 918.7Z"/></g><path d="M940.4 891.5L945.6 893.9L945.6 945.0L940.4 944.3Z" fill="url(#pbl)"/><path d="M945.6 893.9L951.2 891.5L951.2 944.3L945.6 945.0Z" fill="url(#pbd)"/><path d="M940.4 891.5L946.2 890.7L951.2 891.5L945.6 893.9Z" fill="#79a8f9"/><path d="M940.9 891.5V944.3 M945.6 893.9V945.0 M950.7 891.5V944.3 M940.4 891.5L945.6 893.9L951.2 891.5" fill="none" stroke="#3a7bf1" stroke-width="1"/><g fill="#0a3ac2"><path d="M946.0 878.6L950.3 891.6L941.7 891.6Z"/><path d="M930.2 908.5L943.7 910.1L939.5 917.8Z"/><path d="M930.2 927.0L943.7 925.4L939.5 917.8Z"/><path d="M961.8 908.5L948.3 910.1L952.5 917.8Z"/><path d="M961.8 927.0L948.3 925.4L952.5 917.8Z"/><path d="M946.0 956.8L950.3 943.7L941.7 943.7Z"/></g><path d="M941.4 907.2V928.2H945.6V907.2Z" fill="#86b1f8" opacity="0.55"/><path d="M945.6 907.2V928.2H950.2V907.2Z" fill="#5d80c9" opacity="0.55"/></g></svg>
<svg class="a" style="left:1700px;top:200px" width="172" height="260" viewBox="1700 200 172 260"><defs><radialGradient id="vcsh" cx=".5" cy=".5" r=".5"><stop offset="0" stop-color="#bdbdbd" stop-opacity=".85"/><stop offset=".6" stop-color="#d6d6d6" stop-opacity=".5"/><stop offset="1" stop-color="#fff" stop-opacity="0"/></radialGradient><linearGradient id="vcl" x1="0" y1="0" x2="0" y2="1"><stop offset="0" stop-color="#f1f1f1"/><stop offset="1" stop-color="#dcdcdc"/></linearGradient><linearGradient id="vcr" x1="0" y1="0" x2="0" y2="1"><stop offset="0" stop-color="#ededed"/><stop offset="1" stop-color="#d9d9d9"/></linearGradient></defs><ellipse cx="1780" cy="292" rx="60" ry="35.4" fill="#ebebeb"/><ellipse cx="1779.5" cy="288.4" rx="49.4" ry="28.6" fill="#fff"/><ellipse cx="1779.5" cy="288.2" rx="48.4" ry="27.8" fill="none" stroke="#c2c2c2" stroke-width="2"/><ellipse cx="1780" cy="297" rx="36" ry="17" fill="url(#vcsh)"/><text font-family="Liberation Sans, sans-serif" font-weight="bold" font-size="16" fill="#c4c4c4" transform="matrix(1,.45,-.55,.75,1732,260.5)">W</text><text font-family="Liberation Sans, sans-serif" font-weight="bold" font-size="18" fill="#c4c4c4" transform="matrix(1,-.45,.55,.75,1814.5,270)">N</text><text font-family="Liberation Sans, sans-serif" font-weight="bold" font-size="19" fill="#c0c0c0" transform="matrix(1,-.4,.5,.8,1727.5,321)">S</text><text font-family="Liberation Sans, sans-serif" font-weight="bold" font-size="19" fill="#c0c0c0" transform="matrix(1,.42,-.5,.8,1816.5,312.5)">E</text><polygon points="1779.8,224.1 1814.5,240.8 1780.4,259.9 1745.2,240.8" fill="#f6f6f6" stroke="#8f8f8f" stroke-width=".8"/><polygon points="1745.2,240.8 1780.4,259.9 1780.2,301 1747.3,279.2" fill="url(#vcl)" stroke="#8f8f8f" stroke-width=".8"/><polygon points="1780.4,259.9 1814.5,240.8 1812.7,279.2 1780.2,301" fill="url(#vcr)" stroke="#8f8f8f" stroke-width=".8"/><polygon points="1780.3,252.5 1786.5,256 1786.3,263.5 1780.3,267 1774.2,263.5 1774,256" fill="#e3e7ee" opacity=".8"/><text font-family="Liberation Sans, sans-serif" font-weight="bold" font-size="9.6" fill="#9da3aa" stroke="#9da3aa" stroke-width=".4" transform="matrix(.72,.4,-.15,1,1751,263)">FRONT</text><text font-family="Liberation Sans, sans-serif" font-weight="bold" font-size="9.6" fill="#9da3aa" stroke="#9da3aa" stroke-width=".4" transform="matrix(.72,-.4,.15,1,1788,280.5)">RIGHT</text><text font-family="Liberation Sans, sans-serif" font-weight="bold" font-size="8" fill="#a8adb4" transform="matrix(.85,.36,-.7,.55,1775,235.5)">TOP</text><rect x="1840.5" y="342.5" width="29" height="100" fill="#f7f7f7" stroke="#bdbdbd"/><path d="M1860.4 346.3 L1865.3 351.2 M1865.3 346.3 L1860.4 351.2" stroke="#aaa" stroke-width="1.1"/><path d="M1854.5 357.2 H1862 Q1865.8 357.2 1865.8 361 V368.4 A11.3 11.3 0 1 1 1854.5 357.2Z" fill="#fcfcfc" stroke="#a8a8a8" stroke-width="1"/><path d="M1850.5 361.5 L1854 359.6 L1860 361 L1860 371.5 L1853.5 375.3 L1847.8 373 L1848.6 368 L1850.2 367.2 Z" fill="#a9cbea" stroke="#8eb6dc" stroke-width=".8"/><path d="M1850.2 367.2 L1855 368.6 L1855 363 L1850.5 361.5 M1855 368.6 L1853.5 375.3 M1855 363 L1860 361" fill="none" stroke="#d7e8f7" stroke-width=".9"/><path d="M1851.8 386 H1857 L1854.4 389.2Z" fill="#9a9a9a"/><circle cx="1853.5" cy="407.4" r="6.2" fill="#fbfbfb" stroke="#9c9c9c" stroke-width="1.3"/><rect x="1850.3" y="404.4" width="6.4" height="6" fill="#b7d6a8" stroke="#7fb26a" stroke-width=".9"/><path d="M1858.2 412 L1862.2 416" stroke="#8b8b8b" stroke-width="2.4" stroke-linecap="round"/><path d="M1851.8 423 H1857 L1854.4 426.2Z" fill="#9a9a9a"/><path d="M1859.6 432.8 H1865.4 M1859.6 434.6 H1865.4" stroke="#9a9a9a" stroke-width=".9"/><path d="M1860 436 H1865 L1862.5 438.8Z" fill="#9a9a9a"/></svg>
</body></html>
